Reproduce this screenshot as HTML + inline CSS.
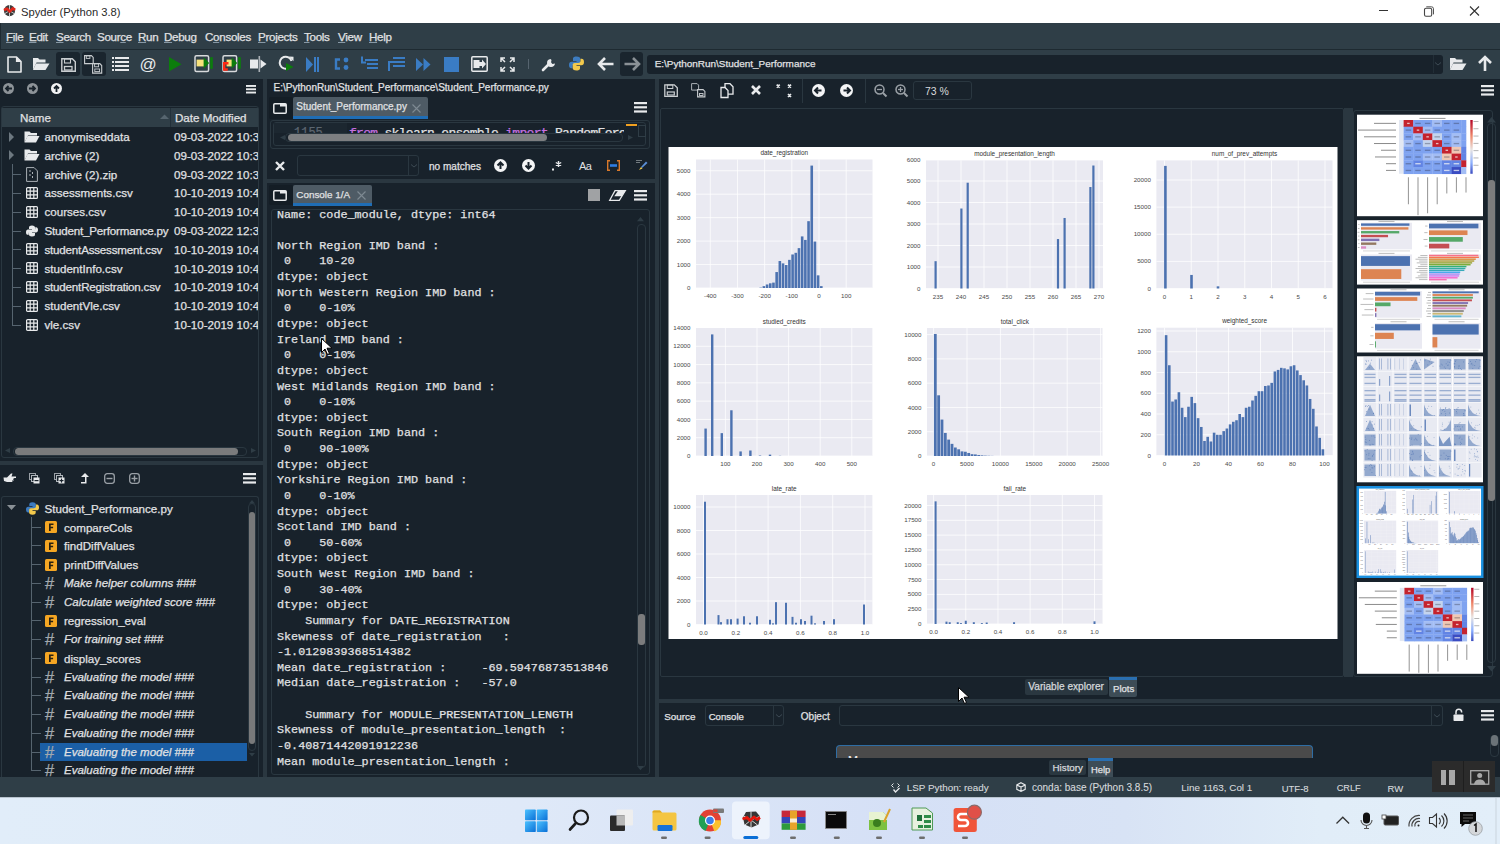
<!DOCTYPE html><html><head><meta charset="utf-8"><style>
html,body{margin:0;padding:0;width:1500px;height:844px;overflow:hidden;background:#18222b;}
body{position:relative;font-family:"Liberation Sans",sans-serif;}
div{box-sizing:border-box;}
.t{position:absolute;white-space:pre;line-height:1;color:#e0e1e3;font-size:12px;-webkit-text-stroke:0.25px currentColor;}
.m{font-family:"Liberation Mono",monospace;}
svg{position:absolute;overflow:visible;}
</style></head><body>
<div style="position:absolute;left:0px;top:0px;width:1500px;height:23px;background:#fff;"></div>
<div class="t" style="left:21px;top:6.52px;font-size:11.2px;color:#2a2a2a;-webkit-text-stroke:0;">Spyder (Python 3.8)</div>
<svg style="left:3px;top:4px" width="14" height="14" viewBox="0 0 14 14"><circle cx="6.5" cy="6.6" r="5.6" fill="#3c3c3c"/><path d="M6.5 1v11.5M2 4l9 5.5M11 4l-9 5.5" stroke="#d8d8d8" stroke-width="0.9"/><path d="M1 6.2l3-1.6l2.8 3l3-3.2l2.4 1.4" fill="none" stroke="#e0261b" stroke-width="2.6" stroke-linejoin="round"/></svg>
<svg style="left:1378px;top:6px" width="110" height="12"><line x1="1" y1="4.5" x2="10" y2="4.5" stroke="#333" stroke-width="1"/><rect x="46.5" y="2.3" width="7.2" height="8" rx="1.5" fill="none" stroke="#444" stroke-width="1.1"/><path d="M48.3 0.8h5.2a2 2 0 0 1 2 2v5.6" fill="none" stroke="#555" stroke-width="1"/><path d="M92 0.5l9 9M101 0.5l-9 9" stroke="#333" stroke-width="1.1"/></svg>
<div style="position:absolute;left:0px;top:23px;width:1500px;height:27px;background:#2f3e47;border-bottom:1px solid #1e2a31;border-left:1px solid #1e2a31;"></div>
<div class="t" style="left:6px;top:30.68px;font-size:11.6px;color:#e0e1e3;letter-spacing:-0.3px;"><u style="text-decoration-color:#8899a6">F</u>ile</div>
<div class="t" style="left:29px;top:30.68px;font-size:11.6px;color:#e0e1e3;letter-spacing:-0.3px;"><u style="text-decoration-color:#8899a6">E</u>dit</div>
<div class="t" style="left:56px;top:30.68px;font-size:11.6px;color:#e0e1e3;letter-spacing:-0.3px;"><u style="text-decoration-color:#8899a6">S</u>earch</div>
<div class="t" style="left:97px;top:30.68px;font-size:11.6px;color:#e0e1e3;letter-spacing:-0.3px;">Sour<u style="text-decoration-color:#8899a6">c</u>e</div>
<div class="t" style="left:138px;top:30.68px;font-size:11.6px;color:#e0e1e3;letter-spacing:-0.3px;"><u style="text-decoration-color:#8899a6">R</u>un</div>
<div class="t" style="left:164px;top:30.68px;font-size:11.6px;color:#e0e1e3;letter-spacing:-0.3px;"><u style="text-decoration-color:#8899a6">D</u>ebug</div>
<div class="t" style="left:205px;top:30.68px;font-size:11.6px;color:#e0e1e3;letter-spacing:-0.3px;">C<u style="text-decoration-color:#8899a6">o</u>nsoles</div>
<div class="t" style="left:258px;top:30.68px;font-size:11.6px;color:#e0e1e3;letter-spacing:-0.3px;"><u style="text-decoration-color:#8899a6">P</u>rojects</div>
<div class="t" style="left:304px;top:30.68px;font-size:11.6px;color:#e0e1e3;letter-spacing:-0.3px;"><u style="text-decoration-color:#8899a6">T</u>ools</div>
<div class="t" style="left:338px;top:30.68px;font-size:11.6px;color:#e0e1e3;letter-spacing:-0.3px;"><u style="text-decoration-color:#8899a6">V</u>iew</div>
<div class="t" style="left:369px;top:30.68px;font-size:11.6px;color:#e0e1e3;letter-spacing:-0.3px;"><u style="text-decoration-color:#8899a6">H</u>elp</div>
<div style="position:absolute;left:0px;top:50px;width:1500px;height:29px;background:#2f3e47;"></div>
<div style="position:absolute;left:56px;top:52px;width:24px;height:24px;background:#1a252e;border-radius:3px;"></div>
<div style="position:absolute;left:82px;top:52px;width:24px;height:24px;background:#1a252e;border-radius:3px;"></div>
<div style="position:absolute;left:620px;top:52px;width:23px;height:24px;background:#1a252e;border-radius:3px;"></div>
<svg style="left:7px;top:56px;" width="15" height="17" viewBox="0 0 15 17"><path d="M1 1h8.5l4.5 4.5v10.5h-13z" fill="none" stroke="#e8eaec" stroke-width="1.6" stroke-linejoin="round"/><path d="M9.5 1v4.5h4.5" fill="#e8eaec" stroke="#e8eaec" stroke-width="1.2"/></svg>
<svg style="left:32px;top:57px;" width="18" height="14" viewBox="0 0 18 14"><path d="M1 1h5l1.5 1.5h6v3h-9l-3.5 7.5z" fill="#e8eaec"/><path d="M4 6.5h13.5l-4 6.5h-12.5z" fill="#e8eaec"/></svg>
<svg style="left:61px;top:58px;" width="15" height="14" viewBox="0 0 15 14"><path d="M0.8 0.8h10.5l3 3v9.5h-13.5z" fill="none" stroke="#c9cdd0" stroke-width="1.4"/><rect x="3.5" y="1" width="6" height="4" fill="none" stroke="#c9cdd0" stroke-width="1.1"/><rect x="3.5" y="8.5" width="7.5" height="3.5" fill="none" stroke="#c9cdd0" stroke-width="1.3"/></svg>
<svg style="left:84px;top:55px;" width="20" height="19" viewBox="0 0 20 19"><path d="M0.6 0.6h6.8l1.8 1.8v6.2h-8.6z" fill="none" stroke="#c9cdd0" stroke-width="1.1"/><rect x="2.3" y="0.8" width="3.6" height="2.6" fill="none" stroke="#c9cdd0" stroke-width="0.9"/><path d="M8.6 8.6h7.2l1.9 1.9v7.6h-9.1z" fill="#1a252e" stroke="#c9cdd0" stroke-width="1.1"/><rect x="10.6" y="8.8" width="4" height="3" fill="none" stroke="#c9cdd0" stroke-width="0.9"/><rect x="10.8" y="14" width="4.8" height="2.6" fill="none" stroke="#c9cdd0" stroke-width="0.9"/></svg>
<svg style="left:112px;top:57px;" width="17" height="14" viewBox="0 0 17 14"><g fill="#e8eaec"><rect x="0" y="0" width="2" height="2"/><rect x="3" y="0" width="14" height="2"/><rect x="0" y="4" width="2" height="2"/><rect x="3" y="4" width="14" height="2"/><rect x="0" y="8" width="2" height="2"/><rect x="3" y="8" width="14" height="2"/><rect x="0" y="12" width="2" height="2"/><rect x="3" y="12" width="14" height="2"/></g></svg>
<div class="t" style="left:139.5px;top:55.61px;font-size:17px;color:#e8eaec;-webkit-text-stroke:0;">@</div>
<svg style="left:169px;top:57px;" width="13" height="15" viewBox="0 0 13 15"><path d="M0 0l12.5 7.2l-12.5 7.3z" fill="#0c7d0c"/></svg>
<svg style="left:194px;top:55px;" width="20" height="18" viewBox="0 0 20 18"><rect x="1" y="0.8" width="13.6" height="15.8" rx="1.5" fill="none" stroke="#d8dadc" stroke-width="1.5"/><rect x="2.6" y="4.6" width="7.6" height="6.8" fill="#f7e27c"/><path d="M9.6 2.2l5.6 5.8l-5.6 5.8z" fill="#0c7d0c"/><rect x="16.2" y="2.2" width="2.6" height="11.6" fill="#0c7d0c"/></svg>
<svg style="left:222px;top:55px;" width="20" height="18" viewBox="0 0 20 18"><rect x="1" y="0.8" width="13.6" height="15.8" rx="1.5" fill="none" stroke="#d8dadc" stroke-width="1.5"/><rect x="4.6" y="4.6" width="5.6" height="6.8" fill="#f7e27c"/><path d="M9.6 2.2l5.6 5.8l-5.6 5.8z" fill="#0c7d0c"/><rect x="16.2" y="2.2" width="2.6" height="11.6" fill="#0c7d0c"/><path d="M6.5 8.2h-4.3v6.3h3.6" fill="none" stroke="#ff2a14" stroke-width="2.4"/></svg>
<svg style="left:250px;top:56px;" width="17" height="16" viewBox="0 0 17 16"><rect x="0" y="3.5" width="8" height="9" fill="#e8eaec"/><rect x="8.5" y="0" width="1.6" height="16" fill="#aab0b6"/><path d="M10.5 3.5l6 4.5l-6 4.5z" fill="#e8eaec"/></svg>
<svg style="left:279px;top:55px;" width="16" height="17" viewBox="0 0 16 17"><path d="M12.5 6a6 6 0 1 0 -3 7" fill="none" stroke="#e8eaec" stroke-width="2"/><path d="M10 1.5l4.5 0.2v4.5z" fill="#e8eaec"/><path d="M7 8l7.5 4l-7.5 4z" fill="#0c7d0c"/></svg>
<svg style="left:306px;top:57px;" width="13" height="15" viewBox="0 0 13 15"><path d="M0 0l7 7.5l-7 7.5z" fill="#3a7cc4"/><rect x="8" y="0" width="2" height="15" fill="#3a7cc4"/><rect x="11" y="0" width="2" height="15" fill="#3a7cc4"/></svg>
<svg style="left:335px;top:57px;" width="14" height="14" viewBox="0 0 14 14"><path d="M5 2.5h-4v9h4" fill="none" stroke="#3a7cc4" stroke-width="2.4"/><circle cx="11" cy="3" r="2.4" fill="#3a7cc4"/><circle cx="11" cy="10.5" r="2.4" fill="#3a7cc4"/></svg>
<svg style="left:361px;top:56px;" width="17" height="16" viewBox="0 0 17 16"><path d="M1 0.5v6h4" fill="none" stroke="#3a7cc4" stroke-width="2"/><g fill="#3a7cc4"><rect x="4" y="3" width="13" height="2"/><rect x="6" y="7" width="11" height="2"/><rect x="6" y="11" width="11" height="2"/></g></svg>
<svg style="left:388px;top:57px;" width="17" height="16" viewBox="0 0 17 16"><g fill="#3a7cc4"><rect x="5" y="0" width="12" height="2"/><rect x="5" y="4" width="12" height="2"/><rect x="5" y="8" width="12" height="2"/></g><path d="M6 5h-5v9" fill="none" stroke="#3a7cc4" stroke-width="2"/></svg>
<svg style="left:416px;top:58px;" width="15" height="13" viewBox="0 0 15 13"><path d="M0 0l7 6.5l-7 6.5zM7.5 0l7 6.5l-7 6.5z" fill="#3a7cc4"/></svg>
<div style="position:absolute;left:444px;top:57px;width:15px;height:15px;background:#3a7cc4;"></div>
<svg style="left:471px;top:56px;" width="17" height="16" viewBox="0 0 17 16"><rect x="0.8" y="0.8" width="15.4" height="14.4" rx="1" fill="none" stroke="#e8eaec" stroke-width="1.5"/><rect x="2.5" y="4" width="6" height="8" fill="#e8eaec"/><path d="M8 6h3v-2.5l4 4.5l-4 4.5v-2.5h-3z" fill="#e8eaec"/></svg>
<svg style="left:500px;top:57px;" width="15" height="15" viewBox="0 0 15 15"><g stroke="#e8eaec" stroke-width="1.5" fill="none"><path d="M1 5v-4h4M1 1l4 4M14 5v-4h-4M14 1l-4 4M1 10v4h4M1 14l4-4M14 10v4h-4M14 14l-4-4"/></g></svg>
<div style="position:absolute;left:528px;top:59px;width:1px;height:10px;background:#56646f;"></div>
<svg style="left:541px;top:56px;" width="16" height="16" viewBox="0 0 16 16"><path d="M2 14l7-7" stroke="#e8eaec" stroke-width="2.6" stroke-linecap="round"/><path d="M9.5 3a4 4 0 1 0 4.5 4.5l-2.5 0.5l-1.5-1.5l0.5-2.5z" fill="#e8eaec"/></svg>
<svg style="left:569px;top:56px;" width="15" height="15" viewBox="0 0 15 15"><path d="M7.5 0.5c-3 0-3.5 1.2-3.5 2.5v2h3.5v.7h-5c-1.5 0-2.5 1-2.5 3.3s1 3.3 2.3 3.3h1.2v-2c0-1.3 1-2.3 2.3-2.3h3.5c1.2 0 2-.8 2-2v-3c0-1.3-1-2.5-3.8-2.5z" fill="#3d7cc0"/><path d="M7.5 14.5c3 0 3.5-1.2 3.5-2.5v-2h-3.5v-.7h5c1.5 0 2.5-1 2.5-3.3s-1-3.3-2.3-3.3h-1.2v2c0 1.3-1 2.3-2.3 2.3h-3.5c-1.2 0-2 .8-2 2v3c0 1.3 1 2.5 3.8 2.5z" fill="#f2c94c"/></svg>
<svg style="left:598px;top:57px;" width="16" height="14" viewBox="0 0 16 14"><path d="M7 1l-6 6l6 6M1.5 7h14" fill="none" stroke="#e8eaec" stroke-width="2.6" stroke-linejoin="miter"/></svg>
<svg style="left:624px;top:57px;" width="16" height="14" viewBox="0 0 16 14"><path d="M9 1l6 6l-6 6M14.5 7h-14" fill="none" stroke="#8a9196" stroke-width="2.6"/></svg>
<div style="position:absolute;left:647px;top:54.5px;width:796px;height:19px;background:#18222b;border-radius:3px;"></div>
<div class="t" style="left:654.7px;top:59.28px;font-size:9.95px;">E:\PythonRun\Student_Performance</div>
<div style="position:absolute;left:1432.5px;top:55px;width:1px;height:18px;background:#222e37;"></div>
<svg style="left:1434px;top:62px;" width="8" height="4" viewBox="0 0 8 4"><path d="M1 0.5l3 2.5l3-2.5" fill="none" stroke="#3d4a54" stroke-width="1"/></svg>
<svg style="left:1449px;top:57px;" width="17" height="14" viewBox="0 0 17 14"><path d="M1 1h5l1.5 1.5h6v3h-9l-3.5 7.5z" fill="#e8eaec"/><path d="M4 6.5h13.5l-4 6.5h-12.5z" fill="#e8eaec"/></svg>
<svg style="left:1478px;top:56px;" width="14" height="15" viewBox="0 0 14 15"><path d="M1 7l6-6l6 6M7 1.5v13.5" fill="none" stroke="#e8eaec" stroke-width="2.6"/></svg>
<div style="position:absolute;left:0px;top:79px;width:263px;height:382px;background:#18222b;"></div>
<div style="position:absolute;left:263px;top:79px;width:4px;height:698px;background:#2a3740;"></div>
<svg style="left:3px;top:83px;" width="11" height="11" viewBox="0 0 11 11"><circle cx="5.5" cy="5.5" r="5.5" fill="#8d9398"/><path d="M9 5.5h-6M5.5 3l-2.5 2.5l2.5 2.5" fill="none" stroke="#18222b" stroke-width="1.8"/></svg>
<svg style="left:27px;top:83px;" width="11" height="11" viewBox="0 0 11 11"><circle cx="5.5" cy="5.5" r="5.5" fill="#8d9398"/><path d="M2 5.5h6M5.5 3l2.5 2.5l-2.5 2.5" fill="none" stroke="#18222b" stroke-width="1.8"/></svg>
<svg style="left:51px;top:83px;" width="11" height="11" viewBox="0 0 11 11"><circle cx="5.5" cy="5.5" r="5.5" fill="#f2f3f4"/><path d="M5.5 9v-6M3 5.5l2.5-2.5l2.5 2.5" fill="none" stroke="#18222b" stroke-width="1.8"/></svg>
<svg style="left:246px;top:85px;" width="10" height="8.5" viewBox="0 0 10 8.5"><g fill="#e8eaec"><rect x="0" y="0" width="10" height="1.9"/><rect x="0" y="3.3" width="10" height="1.9"/><rect x="0" y="6.6" width="10" height="1.9"/></g></svg>
<div style="position:absolute;left:1px;top:106px;width:258px;height:352px;border:1px solid #2a3740;border-radius:3px;"></div>
<div style="position:absolute;left:2px;top:108px;width:256px;height:19px;background:#2f3e47;"></div>
<div style="position:absolute;left:170px;top:108px;width:1px;height:19px;background:#22303a;"></div>
<div class="t" style="left:20px;top:111.98px;font-size:11.6px;">Name</div>
<svg style="left:160px;top:114px;" width="9" height="6" viewBox="0 0 9 6"><path d="M0 5l4.5-4.5l4.5 4.5z" fill="#56656f"/></svg>
<div class="t" style="left:175px;top:111.98px;font-size:11.6px;">Date Modified</div>
<svg style="left:9px;top:131.5px;" width="6" height="10" viewBox="0 0 6 10"><path d="M0 0l5 5l-5 5z" fill="#6d7880"/></svg>
<svg style="left:24px;top:130.5px;" width="16" height="12" viewBox="0 0 16 12"><path d="M0.5 0.5h5l1.5 1.5h6v2.5h-9l-3.5 7z" fill="#e8eaec"/><path d="M3.5 5h12l-3.5 6.5h-11.5z" fill="#e8eaec"/></svg>
<div style="position:absolute;left:40px;top:128.00px;width:129px;height:18px;overflow:hidden;"><div class="t" style="left:4.5px;top:2.98px;font-size:11.6px;letter-spacing:0px;">anonymiseddata</div></div>
<div style="position:absolute;left:171px;top:128.00px;width:87px;height:18px;overflow:hidden;"><div class="t" style="left:3px;top:2.98px;font-size:11.6px;">09-03-2022 10:33</div></div>
<svg style="left:9px;top:150.3px;" width="6" height="10" viewBox="0 0 6 10"><path d="M0 0l5 5l-5 5z" fill="#6d7880"/></svg>
<svg style="left:24px;top:149.3px;" width="16" height="12" viewBox="0 0 16 12"><path d="M0.5 0.5h5l1.5 1.5h6v2.5h-9l-3.5 7z" fill="#e8eaec"/><path d="M3.5 5h12l-3.5 6.5h-11.5z" fill="#e8eaec"/></svg>
<div style="position:absolute;left:40px;top:146.80px;width:129px;height:18px;overflow:hidden;"><div class="t" style="left:4.5px;top:2.98px;font-size:11.6px;letter-spacing:0px;">archive (2)</div></div>
<div style="position:absolute;left:171px;top:146.80px;width:87px;height:18px;overflow:hidden;"><div class="t" style="left:3px;top:2.98px;font-size:11.6px;">09-03-2022 10:32</div></div>
<div style="position:absolute;left:12px;top:163.6px;width:1px;height:19px;background:#56646f;"></div>
<div style="position:absolute;left:12px;top:174.1px;width:9px;height:1px;background:#56646f;"></div>
<svg style="left:26px;top:167.1px;" width="12" height="15" viewBox="0 0 12 15"><path d="M0.6 0.6h7.5l3.3 3.3v10.5h-10.8z" fill="none" stroke="#aab0b6" stroke-width="1"/><path d="M4 3v2M4 7v2M6.5 5v2M6.5 9v2" stroke="#aab0b6" stroke-width="1"/></svg>
<div style="position:absolute;left:40px;top:165.60px;width:129px;height:18px;overflow:hidden;"><div class="t" style="left:4.5px;top:2.98px;font-size:11.6px;letter-spacing:0px;">archive (2).zip</div></div>
<div style="position:absolute;left:171px;top:165.60px;width:87px;height:18px;overflow:hidden;"><div class="t" style="left:3px;top:2.98px;font-size:11.6px;">09-03-2022 10:32</div></div>
<div style="position:absolute;left:12px;top:182.4px;width:1px;height:19px;background:#56646f;"></div>
<div style="position:absolute;left:12px;top:192.9px;width:9px;height:1px;background:#56646f;"></div>
<svg style="left:26px;top:186.9px;" width="12" height="12" viewBox="0 0 12 12"><rect x="0.6" y="0.6" width="10.8" height="10.8" rx="1" fill="none" stroke="#e8eaec" stroke-width="1.2"/><path d="M4.2 0.6v10.8M7.8 0.6v10.8M0.6 4.2h10.8M0.6 7.8h10.8" stroke="#e8eaec" stroke-width="1.2"/></svg>
<div style="position:absolute;left:40px;top:184.40px;width:129px;height:18px;overflow:hidden;"><div class="t" style="left:4.5px;top:2.98px;font-size:11.6px;letter-spacing:0px;">assessments.csv</div></div>
<div style="position:absolute;left:171px;top:184.40px;width:87px;height:18px;overflow:hidden;"><div class="t" style="left:3px;top:2.98px;font-size:11.6px;">10-10-2019 10:44</div></div>
<div style="position:absolute;left:12px;top:201.2px;width:1px;height:19px;background:#56646f;"></div>
<div style="position:absolute;left:12px;top:211.7px;width:9px;height:1px;background:#56646f;"></div>
<svg style="left:26px;top:205.7px;" width="12" height="12" viewBox="0 0 12 12"><rect x="0.6" y="0.6" width="10.8" height="10.8" rx="1" fill="none" stroke="#e8eaec" stroke-width="1.2"/><path d="M4.2 0.6v10.8M7.8 0.6v10.8M0.6 4.2h10.8M0.6 7.8h10.8" stroke="#e8eaec" stroke-width="1.2"/></svg>
<div style="position:absolute;left:40px;top:203.20px;width:129px;height:18px;overflow:hidden;"><div class="t" style="left:4.5px;top:2.98px;font-size:11.6px;letter-spacing:0px;">courses.csv</div></div>
<div style="position:absolute;left:171px;top:203.20px;width:87px;height:18px;overflow:hidden;"><div class="t" style="left:3px;top:2.98px;font-size:11.6px;">10-10-2019 10:44</div></div>
<div style="position:absolute;left:12px;top:220.0px;width:1px;height:19px;background:#56646f;"></div>
<div style="position:absolute;left:12px;top:230.5px;width:9px;height:1px;background:#56646f;"></div>
<svg style="left:26px;top:224.5px;" width="12" height="12" viewBox="0 0 12 12"><path d="M6 0.5c-2.5 0-3 1-3 2v1.5h3v.6h-4c-1.2 0-2 .8-2 2.6s.8 2.6 1.8 2.6h1v-1.6c0-1 .8-1.8 1.8-1.8h2.8c1 0 1.6-.6 1.6-1.6v-2.4c0-1-.8-2-3-2z" fill="#e8eaec"/><path d="M6 11.5c2.5 0 3-1 3-2v-1.5h-3v-.6h4c1.2 0 2-.8 2-2.6s-.8-2.6-1.8-2.6h-1v1.6c0 1-.8 1.8-1.8 1.8h-2.8c-1 0-1.6.6-1.6 1.6v2.4c0 1 .8 2 3 2z" fill="#e8eaec"/></svg>
<div style="position:absolute;left:40px;top:222.00px;width:129px;height:18px;overflow:hidden;"><div class="t" style="left:4.5px;top:2.98px;font-size:11.6px;letter-spacing:-0.2px;">Student_Performance.py</div></div>
<div style="position:absolute;left:171px;top:222.00px;width:87px;height:18px;overflow:hidden;"><div class="t" style="left:3px;top:2.98px;font-size:11.6px;">09-03-2022 12:30</div></div>
<div style="position:absolute;left:12px;top:238.8px;width:1px;height:19px;background:#56646f;"></div>
<div style="position:absolute;left:12px;top:249.3px;width:9px;height:1px;background:#56646f;"></div>
<svg style="left:26px;top:243.3px;" width="12" height="12" viewBox="0 0 12 12"><rect x="0.6" y="0.6" width="10.8" height="10.8" rx="1" fill="none" stroke="#e8eaec" stroke-width="1.2"/><path d="M4.2 0.6v10.8M7.8 0.6v10.8M0.6 4.2h10.8M0.6 7.8h10.8" stroke="#e8eaec" stroke-width="1.2"/></svg>
<div style="position:absolute;left:40px;top:240.80px;width:129px;height:18px;overflow:hidden;"><div class="t" style="left:4.5px;top:2.98px;font-size:11.6px;letter-spacing:-0.2px;">studentAssessment.csv</div></div>
<div style="position:absolute;left:171px;top:240.80px;width:87px;height:18px;overflow:hidden;"><div class="t" style="left:3px;top:2.98px;font-size:11.6px;">10-10-2019 10:44</div></div>
<div style="position:absolute;left:12px;top:257.6px;width:1px;height:19px;background:#56646f;"></div>
<div style="position:absolute;left:12px;top:268.1px;width:9px;height:1px;background:#56646f;"></div>
<svg style="left:26px;top:262.1px;" width="12" height="12" viewBox="0 0 12 12"><rect x="0.6" y="0.6" width="10.8" height="10.8" rx="1" fill="none" stroke="#e8eaec" stroke-width="1.2"/><path d="M4.2 0.6v10.8M7.8 0.6v10.8M0.6 4.2h10.8M0.6 7.8h10.8" stroke="#e8eaec" stroke-width="1.2"/></svg>
<div style="position:absolute;left:40px;top:259.60px;width:129px;height:18px;overflow:hidden;"><div class="t" style="left:4.5px;top:2.98px;font-size:11.6px;letter-spacing:0px;">studentInfo.csv</div></div>
<div style="position:absolute;left:171px;top:259.60px;width:87px;height:18px;overflow:hidden;"><div class="t" style="left:3px;top:2.98px;font-size:11.6px;">10-10-2019 10:44</div></div>
<div style="position:absolute;left:12px;top:276.4px;width:1px;height:19px;background:#56646f;"></div>
<div style="position:absolute;left:12px;top:286.9px;width:9px;height:1px;background:#56646f;"></div>
<svg style="left:26px;top:280.9px;" width="12" height="12" viewBox="0 0 12 12"><rect x="0.6" y="0.6" width="10.8" height="10.8" rx="1" fill="none" stroke="#e8eaec" stroke-width="1.2"/><path d="M4.2 0.6v10.8M7.8 0.6v10.8M0.6 4.2h10.8M0.6 7.8h10.8" stroke="#e8eaec" stroke-width="1.2"/></svg>
<div style="position:absolute;left:40px;top:278.40px;width:129px;height:18px;overflow:hidden;"><div class="t" style="left:4.5px;top:2.98px;font-size:11.6px;letter-spacing:-0.2px;">studentRegistration.csv</div></div>
<div style="position:absolute;left:171px;top:278.40px;width:87px;height:18px;overflow:hidden;"><div class="t" style="left:3px;top:2.98px;font-size:11.6px;">10-10-2019 10:44</div></div>
<div style="position:absolute;left:12px;top:295.20000000000005px;width:1px;height:19px;background:#56646f;"></div>
<div style="position:absolute;left:12px;top:305.70000000000005px;width:9px;height:1px;background:#56646f;"></div>
<svg style="left:26px;top:299.70000000000005px;" width="12" height="12" viewBox="0 0 12 12"><rect x="0.6" y="0.6" width="10.8" height="10.8" rx="1" fill="none" stroke="#e8eaec" stroke-width="1.2"/><path d="M4.2 0.6v10.8M7.8 0.6v10.8M0.6 4.2h10.8M0.6 7.8h10.8" stroke="#e8eaec" stroke-width="1.2"/></svg>
<div style="position:absolute;left:40px;top:297.20px;width:129px;height:18px;overflow:hidden;"><div class="t" style="left:4.5px;top:2.98px;font-size:11.6px;letter-spacing:0px;">studentVle.csv</div></div>
<div style="position:absolute;left:171px;top:297.20px;width:87px;height:18px;overflow:hidden;"><div class="t" style="left:3px;top:2.98px;font-size:11.6px;">10-10-2019 10:44</div></div>
<div style="position:absolute;left:12px;top:314.0px;width:1px;height:11px;background:#56646f;"></div>
<div style="position:absolute;left:12px;top:324.5px;width:9px;height:1px;background:#56646f;"></div>
<svg style="left:26px;top:318.5px;" width="12" height="12" viewBox="0 0 12 12"><rect x="0.6" y="0.6" width="10.8" height="10.8" rx="1" fill="none" stroke="#e8eaec" stroke-width="1.2"/><path d="M4.2 0.6v10.8M7.8 0.6v10.8M0.6 4.2h10.8M0.6 7.8h10.8" stroke="#e8eaec" stroke-width="1.2"/></svg>
<div style="position:absolute;left:40px;top:316.00px;width:129px;height:18px;overflow:hidden;"><div class="t" style="left:4.5px;top:2.98px;font-size:11.6px;letter-spacing:0px;">vle.csv</div></div>
<div style="position:absolute;left:171px;top:316.00px;width:87px;height:18px;overflow:hidden;"><div class="t" style="left:3px;top:2.98px;font-size:11.6px;">10-10-2019 10:45</div></div>
<div style="position:absolute;left:15px;top:448px;width:223px;height:7px;background:#7a7b7c;border-radius:3.5px;"></div>
<div style="position:absolute;left:13px;top:447px;width:234px;height:9px;border:1px solid #2a3740;border-radius:4px;"></div>
<svg style="left:5px;top:448px;" width="5" height="5" viewBox="0 0 5 5"><path d="M5 0L0 2.5L5 5z" fill="#2f3d46"/></svg>
<svg style="left:251px;top:448px;" width="5" height="5" viewBox="0 0 5 5"><path d="M0 0L5 2.5L0 5z" fill="#2f3d46"/></svg>
<div style="position:absolute;left:0px;top:461px;width:263px;height:4px;background:#2a3740;"></div>
<div style="position:absolute;left:0px;top:465px;width:263px;height:312px;background:#18222b;"></div>
<svg style="left:3px;top:473px;" width="13" height="11" viewBox="0 0 13 11"><path d="M0.5 4.5h3.5l4-4h1.5l-1 3h4.5v1.5h-3l1.5 1h-1.5l1 1.5h-2l0.5 1.5h-5.5l-3-1z" fill="#e8eaec"/></svg>
<svg style="left:29px;top:473px;" width="11" height="11" viewBox="0 0 11 11"><rect x="0.5" y="0.5" width="6" height="6" fill="none" stroke="#9aa0a6" stroke-width="1"/><rect x="2.5" y="2.5" width="6" height="6" fill="#18222b" stroke="#b0b6bb" stroke-width="1"/><rect x="4.5" y="4.5" width="6" height="6" fill="#e8eaec"/><rect x="5.5" y="7" width="4" height="1.2" fill="#18222b"/></svg>
<svg style="left:54px;top:473px;" width="11" height="11" viewBox="0 0 11 11"><rect x="0.5" y="0.5" width="6" height="6" fill="none" stroke="#9aa0a6" stroke-width="1"/><rect x="2.5" y="2.5" width="6" height="6" fill="#18222b" stroke="#b0b6bb" stroke-width="1"/><rect x="4.5" y="4.5" width="6" height="6" fill="#e8eaec"/><rect x="5.5" y="7" width="4" height="1.2" fill="#18222b"/><rect x="6.9" y="5.6" width="1.2" height="4" fill="#18222b"/></svg>
<svg style="left:81px;top:473px;" width="8" height="11" viewBox="0 0 8 11"><path d="M0 4l4-4l4 4h-2.5v6.5h-5.5v-1.5h4v-5z" fill="#e8eaec"/></svg>
<svg style="left:104px;top:473px;" width="11" height="11" viewBox="0 0 11 11"><rect x="0.7" y="0.7" width="9.6" height="9.6" rx="2.5" fill="none" stroke="#9aa0a6" stroke-width="1.3"/><rect x="2.5" y="4.8" width="6" height="1.4" fill="#9aa0a6"/></svg>
<svg style="left:129px;top:473px;" width="11" height="11" viewBox="0 0 11 11"><rect x="0.7" y="0.7" width="9.6" height="9.6" rx="2.5" fill="none" stroke="#9aa0a6" stroke-width="1.3"/><rect x="2.5" y="4.8" width="6" height="1.4" fill="#9aa0a6"/><rect x="4.8" y="2.5" width="1.4" height="6" fill="#9aa0a6"/></svg>
<svg style="left:243px;top:473px;" width="13" height="11" viewBox="0 0 13 11"><g fill="#e8eaec"><rect x="0" y="0" width="13" height="2.2"/><rect x="0" y="4.2" width="13" height="2.2"/><rect x="0" y="8.4" width="13" height="2.2"/></g></svg>
<div style="position:absolute;left:1px;top:496px;width:258px;height:281px;border:1px solid #2a3740;border-bottom:none;border-radius:3px 3px 0 0;"></div>
<svg style="left:7px;top:505px;" width="10" height="6" viewBox="0 0 10 6"><path d="M0 0h9l-4.5 5z" fill="#8a9196"/></svg>
<svg style="left:26px;top:502px;" width="13" height="13" viewBox="0 0 13 13"><path d="M6.5 0.3c-2.7 0-3.2 1.1-3.2 2.2v1.6h3.2v.6h-4.4c-1.3 0-2.1.9-2.1 2.9s.9 2.9 2 2.9h1.1v-1.7c0-1.1.9-2 2-2h3c1.1 0 1.8-.7 1.8-1.8v-2.5c0-1.1-.9-2.2-3.4-2.2z" fill="#3d7cc0"/><path d="M6.5 12.7c2.7 0 3.2-1.1 3.2-2.2v-1.6h-3.2v-.6h4.4c1.3 0 2.1-.9 2.1-2.9s-.9-2.9-2-2.9h-1.1v1.7c0 1.1-.9 2-2 2h-3c-1.1 0-1.8.7-1.8 1.8v2.5c0 1.1.9 2.2 3.4 2.2z" fill="#f2c94c"/></svg>
<div class="t" style="left:44.5px;top:502.58px;font-size:11.6px;">Student_Performance.py</div>
<div style="position:absolute;left:31px;top:517px;width:1px;height:253.5px;background:#56646f;"></div>
<div style="position:absolute;left:31px;top:526.7px;width:10px;height:1px;background:#56646f;"></div>
<svg style="left:45px;top:521.2px;" width="12" height="12" viewBox="0 0 12 12"><rect x="0" y="0" width="12" height="12" rx="1.5" fill="#f5a623"/><path d="M4 2.5h4.5v1.6h-2.8v1.6h2.4v1.5h-2.4v2.9h-1.7z" fill="#2a2110"/></svg>
<div class="t" style="left:64px;top:521.58px;font-size:11.6px;">compareCols</div>
<div style="position:absolute;left:31px;top:545.45px;width:10px;height:1px;background:#56646f;"></div>
<svg style="left:45px;top:539.95px;" width="12" height="12" viewBox="0 0 12 12"><rect x="0" y="0" width="12" height="12" rx="1.5" fill="#f5a623"/><path d="M4 2.5h4.5v1.6h-2.8v1.6h2.4v1.5h-2.4v2.9h-1.7z" fill="#2a2110"/></svg>
<div class="t" style="left:64px;top:540.33px;font-size:11.6px;">findDiffValues</div>
<div style="position:absolute;left:31px;top:564.2px;width:10px;height:1px;background:#56646f;"></div>
<svg style="left:45px;top:558.7px;" width="12" height="12" viewBox="0 0 12 12"><rect x="0" y="0" width="12" height="12" rx="1.5" fill="#f5a623"/><path d="M4 2.5h4.5v1.6h-2.8v1.6h2.4v1.5h-2.4v2.9h-1.7z" fill="#2a2110"/></svg>
<div class="t" style="left:64px;top:559.08px;font-size:11.6px;">printDiffValues</div>
<div style="position:absolute;left:31px;top:582.95px;width:10px;height:1px;background:#56646f;"></div>
<div class="t" style="left:45px;top:574.98px;font-size:16.5px;color:#a3a9ae;">#</div>
<div class="t" style="left:64px;top:577.92px;font-size:11.5px;font-style:italic;">Make helper columns ###</div>
<div style="position:absolute;left:31px;top:601.7px;width:10px;height:1px;background:#56646f;"></div>
<div class="t" style="left:45px;top:593.73px;font-size:16.5px;color:#a3a9ae;">#</div>
<div class="t" style="left:64px;top:596.67px;font-size:11.5px;font-style:italic;">Calculate weighted score ###</div>
<div style="position:absolute;left:31px;top:620.45px;width:10px;height:1px;background:#56646f;"></div>
<svg style="left:45px;top:614.95px;" width="12" height="12" viewBox="0 0 12 12"><rect x="0" y="0" width="12" height="12" rx="1.5" fill="#f5a623"/><path d="M4 2.5h4.5v1.6h-2.8v1.6h2.4v1.5h-2.4v2.9h-1.7z" fill="#2a2110"/></svg>
<div class="t" style="left:64px;top:615.33px;font-size:11.6px;">regression_eval</div>
<div style="position:absolute;left:31px;top:639.2px;width:10px;height:1px;background:#56646f;"></div>
<div class="t" style="left:45px;top:631.23px;font-size:16.5px;color:#a3a9ae;">#</div>
<div class="t" style="left:64px;top:634.17px;font-size:11.5px;font-style:italic;">For training set ###</div>
<div style="position:absolute;left:31px;top:657.95px;width:10px;height:1px;background:#56646f;"></div>
<svg style="left:45px;top:652.45px;" width="12" height="12" viewBox="0 0 12 12"><rect x="0" y="0" width="12" height="12" rx="1.5" fill="#f5a623"/><path d="M4 2.5h4.5v1.6h-2.8v1.6h2.4v1.5h-2.4v2.9h-1.7z" fill="#2a2110"/></svg>
<div class="t" style="left:64px;top:652.83px;font-size:11.6px;">display_scores</div>
<div style="position:absolute;left:31px;top:676.7px;width:10px;height:1px;background:#56646f;"></div>
<div class="t" style="left:45px;top:668.73px;font-size:16.5px;color:#a3a9ae;">#</div>
<div class="t" style="left:64px;top:671.67px;font-size:11.5px;font-style:italic;">Evaluating the model ###</div>
<div style="position:absolute;left:31px;top:695.45px;width:10px;height:1px;background:#56646f;"></div>
<div class="t" style="left:45px;top:687.48px;font-size:16.5px;color:#a3a9ae;">#</div>
<div class="t" style="left:64px;top:690.42px;font-size:11.5px;font-style:italic;">Evaluating the model ###</div>
<div style="position:absolute;left:31px;top:714.2px;width:10px;height:1px;background:#56646f;"></div>
<div class="t" style="left:45px;top:706.23px;font-size:16.5px;color:#a3a9ae;">#</div>
<div class="t" style="left:64px;top:709.17px;font-size:11.5px;font-style:italic;">Evaluating the model ###</div>
<div style="position:absolute;left:31px;top:732.95px;width:10px;height:1px;background:#56646f;"></div>
<div class="t" style="left:45px;top:724.98px;font-size:16.5px;color:#a3a9ae;">#</div>
<div class="t" style="left:64px;top:727.92px;font-size:11.5px;font-style:italic;">Evaluating the model ###</div>
<div style="position:absolute;left:40px;top:742.7px;width:207px;height:18px;background:#1b5fa6;"></div>
<div style="position:absolute;left:31px;top:751.7px;width:10px;height:1px;background:#56646f;"></div>
<div class="t" style="left:45px;top:743.73px;font-size:16.5px;color:#a3a9ae;">#</div>
<div class="t" style="left:64px;top:746.67px;font-size:11.5px;font-style:italic;">Evaluating the model ###</div>
<div style="position:absolute;left:31px;top:770.45px;width:10px;height:1px;background:#56646f;"></div>
<div class="t" style="left:45px;top:762.48px;font-size:16.5px;color:#a3a9ae;">#</div>
<div class="t" style="left:64px;top:765.42px;font-size:11.5px;font-style:italic;">Evaluating the model ###</div>
<div style="position:absolute;left:248px;top:503px;width:8px;height:248px;border:1px solid #2a3740;border-radius:4px;"></div>
<div style="position:absolute;left:249px;top:512px;width:6px;height:232px;background:#78797a;border-radius:3px;"></div>
<svg style="left:249px;top:500px;" width="6" height="3.5999999999999996" viewBox="0 0 6 3.5999999999999996"><path d="M0 3.5999999999999996L3.0 0L6 3.5999999999999996z" fill="#2f3d46"/></svg>
<svg style="left:249px;top:753px;" width="6" height="3.5999999999999996" viewBox="0 0 6 3.5999999999999996"><path d="M0 0L3.0 3.5999999999999996L6 0z" fill="#2f3d46"/></svg>
<div style="position:absolute;left:267px;top:79px;width:388px;height:698px;background:#18222b;"></div>
<div class="t" style="left:273.6px;top:83.13px;font-size:10px;">E:\PythonRun\Student_Performance\Student_Performance.py</div>
<div style="position:absolute;left:269px;top:97px;width:24px;height:22px;background:#141d25;border-radius:2px;"></div>
<svg style="left:273px;top:102.5px;" width="14" height="11" viewBox="0 0 14 11"><rect x="0.8" y="0.8" width="12.4" height="9.4" rx="1" fill="none" stroke="#e8eaec" stroke-width="1.5"/><rect x="7" y="1" width="6" height="2.5" fill="#e8eaec"/></svg>
<div style="position:absolute;left:293px;top:97px;width:135px;height:19px;background:#4e5b65;border-radius:2px 2px 0 0;"></div>
<div style="position:absolute;left:293px;top:116px;width:135px;height:2.5px;background:#1f6db5;"></div>
<div class="t" style="left:296.3px;top:101.53px;font-size:10px;">Student_Performance.py</div>
<svg style="left:412px;top:104px;" width="9" height="9" viewBox="0 0 9 9"><path d="M0.5 0.5l8 8M8.5 0.5l-8 8" stroke="#7e8a93" stroke-width="1.1"/></svg>
<svg style="left:634px;top:102px;" width="13" height="11" viewBox="0 0 13 11"><g fill="#e8eaec"><rect x="0" y="0" width="13" height="2.2"/><rect x="0" y="4.2" width="13" height="2.2"/><rect x="0" y="8.4" width="13" height="2.2"/></g></svg>
<div style="position:absolute;left:270px;top:120px;width:380px;height:29px;border:1px solid #2a3740;border-radius:3px;"></div>
<div style="position:absolute;left:273px;top:122px;width:373px;height:24px;border:1px solid #2a3740;border-radius:3px;background:#18222b;"></div>
<div style="position:absolute;left:274px;top:123px;width:73px;height:10px;background:#1c2730;"></div>
<div style="position:absolute;left:274px;top:123px;width:350px;height:9.5px;overflow:hidden;"><div class="t m" style="left:20px;top:3.5px;font-size:12px;color:#5c6670;">1155</div><div class="t m" style="left:75px;top:4px;font-size:13px;letter-spacing:-0.7px;"><span style="color:#c670e0">from</span> sklearn.ensemble <span style="color:#c670e0">import</span> RandomFore</div></div>
<div style="position:absolute;left:626px;top:124px;width:11px;height:1.5px;background:#f0a020;"></div>
<div style="position:absolute;left:638px;top:125px;width:8px;height:12px;border:1px solid #2f3d46;"></div>
<div style="position:absolute;left:285px;top:133px;width:338px;height:9px;border:1px solid #2a3740;border-radius:4px;"></div>
<div style="position:absolute;left:288px;top:134px;width:259px;height:7px;background:#7d7f81;border-radius:3.5px;"></div>
<svg style="left:280px;top:135px;" width="5" height="5" viewBox="0 0 5 5"><path d="M5 0L0 2.5L5 5z" fill="#2f3d46"/></svg>
<svg style="left:628px;top:135px;" width="5" height="5" viewBox="0 0 5 5"><path d="M0 0L5 2.5L0 5z" fill="#2f3d46"/></svg>
<svg style="left:275px;top:161px;" width="10" height="10" viewBox="0 0 10 10"><path d="M1 1l8 8M9 1l-8 8" stroke="#e8eaec" stroke-width="2.4"/></svg>
<div style="position:absolute;left:297px;top:155px;width:122px;height:21px;border:1px solid #2a3740;border-radius:3px;"></div>
<div style="position:absolute;left:408px;top:156px;width:1px;height:19px;background:#2a3740;"></div>
<svg style="left:410px;top:164px;" width="8" height="4" viewBox="0 0 8 4"><path d="M1 0.5l3 2.5l3-2.5" fill="none" stroke="#3d4a54" stroke-width="1"/></svg>
<div class="t" style="left:429px;top:162.09px;font-size:10.05px;">no matches</div>
<svg style="left:494px;top:159px;" width="13" height="13" viewBox="0 0 13 13"><circle cx="6.5" cy="6.5" r="6.5" fill="#f4f5f6"/><path d="M6.5 10v-6.5M3.5 6.5l3-3l3 3" fill="none" stroke="#18222b" stroke-width="2"/></svg>
<svg style="left:522px;top:159px;" width="13" height="13" viewBox="0 0 13 13"><circle cx="6.5" cy="6.5" r="6.5" fill="#f4f5f6"/><path d="M6.5 3v6.5M3.5 6.5l3 3l3-3" fill="none" stroke="#18222b" stroke-width="2"/></svg>
<svg style="left:552px;top:161px;" width="11" height="10" viewBox="0 0 11 10"><rect x="0" y="7.5" width="2" height="2" fill="#e8eaec"/><path d="M6.5 0v6M3.8 1.5l5.4 3M3.8 4.5l5.4-3" stroke="#e8eaec" stroke-width="1.4"/></svg>
<div class="t" style="left:579px;top:160.69px;font-size:11px;color:#e0e1e3;letter-spacing:-0.6px;-webkit-text-stroke:0;">Aa</div>
<svg style="left:607px;top:160px;" width="13" height="11" viewBox="0 0 13 11"><path d="M3 0.7h-2.3v9.6h2.3M10 0.7h2.3v9.6h-2.3" fill="none" stroke="#d9782a" stroke-width="1.4"/><rect x="3" y="4.2" width="7" height="2.6" fill="#2f7de1"/></svg>
<svg style="left:636px;top:159px;" width="12" height="12" viewBox="0 0 12 12"><path d="M0 1.5h6M0 3.5h4" stroke="#8a9196" stroke-width="0.8"/><path d="M5 8l5-5.5l1.5 1.5l-5.5 5z" fill="#5b8fd6"/><path d="M3 11l2-3l1.5 1.5z" fill="#f2c94c"/></svg>
<div style="position:absolute;left:267px;top:179px;width:388px;height:4px;background:#2a3740;"></div>
<div style="position:absolute;left:269px;top:185px;width:24px;height:20px;background:#141d25;border-radius:2px;"></div>
<svg style="left:273px;top:190px;" width="14" height="11" viewBox="0 0 14 11"><rect x="0.8" y="0.8" width="12.4" height="9.4" rx="1" fill="none" stroke="#e8eaec" stroke-width="1.5"/><rect x="7" y="1" width="6" height="2.5" fill="#e8eaec"/></svg>
<div style="position:absolute;left:293px;top:185px;width:79px;height:18px;background:#4e5b65;border-radius:2px 2px 0 0;"></div>
<div style="position:absolute;left:293px;top:203px;width:79px;height:2.5px;background:#1f6db5;"></div>
<div class="t" style="left:296.3px;top:189.62px;font-size:9.9px;">Console 1/A</div>
<svg style="left:357px;top:191px;" width="9" height="9" viewBox="0 0 9 9"><path d="M0.5 0.5l8 8M8.5 0.5l-8 8" stroke="#7e8a93" stroke-width="1.1"/></svg>
<div style="position:absolute;left:588px;top:189px;width:12px;height:12px;background:#a0a2a4;"></div>
<svg style="left:609px;top:190px;" width="17" height="11" viewBox="0 0 17 11"><path d="M6 0.7h10.3l-6 9.6h-9.6z" fill="none" stroke="#e8eaec" stroke-width="1.3"/><path d="M9 0.7h7.3l-3.5 5.5h-7.5z" fill="#e8eaec"/></svg>
<svg style="left:634px;top:190px;" width="13" height="11" viewBox="0 0 13 11"><g fill="#e8eaec"><rect x="0" y="0" width="13" height="2.2"/><rect x="0" y="4.2" width="13" height="2.2"/><rect x="0" y="8.4" width="13" height="2.2"/></g></svg>
<div style="position:absolute;left:271px;top:209px;width:379px;height:566px;border:1px solid #2a3740;border-radius:3px;"></div>
<div style="position:absolute;left:272px;top:208px;width:362px;height:565px;overflow:hidden;">
<div class="t m" style="left:5px;top:1.59px;font-size:11.75px;color:#e0e1e3;">Name: code_module, dtype: int64</div>
<div class="t m" style="left:5px;top:17.22px;font-size:11.75px;color:#e0e1e3;"></div>
<div class="t m" style="left:5px;top:32.85px;font-size:11.75px;color:#e0e1e3;">North Region IMD band :</div>
<div class="t m" style="left:5px;top:48.48px;font-size:11.75px;color:#e0e1e3;"> 0    10-20</div>
<div class="t m" style="left:5px;top:64.11px;font-size:11.75px;color:#e0e1e3;">dtype: object</div>
<div class="t m" style="left:5px;top:79.74px;font-size:11.75px;color:#e0e1e3;">North Western Region IMD band :</div>
<div class="t m" style="left:5px;top:95.37px;font-size:11.75px;color:#e0e1e3;"> 0    0-10%</div>
<div class="t m" style="left:5px;top:111.00px;font-size:11.75px;color:#e0e1e3;">dtype: object</div>
<div class="t m" style="left:5px;top:126.63px;font-size:11.75px;color:#e0e1e3;">Ireland IMD band :</div>
<div class="t m" style="left:5px;top:142.26px;font-size:11.75px;color:#e0e1e3;"> 0    0-10%</div>
<div class="t m" style="left:5px;top:157.89px;font-size:11.75px;color:#e0e1e3;">dtype: object</div>
<div class="t m" style="left:5px;top:173.52px;font-size:11.75px;color:#e0e1e3;">West Midlands Region IMD band :</div>
<div class="t m" style="left:5px;top:189.15px;font-size:11.75px;color:#e0e1e3;"> 0    0-10%</div>
<div class="t m" style="left:5px;top:204.78px;font-size:11.75px;color:#e0e1e3;">dtype: object</div>
<div class="t m" style="left:5px;top:220.41px;font-size:11.75px;color:#e0e1e3;">South Region IMD band :</div>
<div class="t m" style="left:5px;top:236.04px;font-size:11.75px;color:#e0e1e3;"> 0    90-100%</div>
<div class="t m" style="left:5px;top:251.67px;font-size:11.75px;color:#e0e1e3;">dtype: object</div>
<div class="t m" style="left:5px;top:267.30px;font-size:11.75px;color:#e0e1e3;">Yorkshire Region IMD band :</div>
<div class="t m" style="left:5px;top:282.93px;font-size:11.75px;color:#e0e1e3;"> 0    0-10%</div>
<div class="t m" style="left:5px;top:298.56px;font-size:11.75px;color:#e0e1e3;">dtype: object</div>
<div class="t m" style="left:5px;top:314.19px;font-size:11.75px;color:#e0e1e3;">Scotland IMD band :</div>
<div class="t m" style="left:5px;top:329.82px;font-size:11.75px;color:#e0e1e3;"> 0    50-60%</div>
<div class="t m" style="left:5px;top:345.45px;font-size:11.75px;color:#e0e1e3;">dtype: object</div>
<div class="t m" style="left:5px;top:361.08px;font-size:11.75px;color:#e0e1e3;">South West Region IMD band :</div>
<div class="t m" style="left:5px;top:376.71px;font-size:11.75px;color:#e0e1e3;"> 0    30-40%</div>
<div class="t m" style="left:5px;top:392.34px;font-size:11.75px;color:#e0e1e3;">dtype: object</div>
<div class="t m" style="left:5px;top:407.97px;font-size:11.75px;color:#e0e1e3;">    Summary for DATE_REGISTRATION</div>
<div class="t m" style="left:5px;top:423.60px;font-size:11.75px;color:#e0e1e3;">Skewness of date_registration   :</div>
<div class="t m" style="left:5px;top:439.23px;font-size:11.75px;color:#e0e1e3;">-1.0129839368514382</div>
<div class="t m" style="left:5px;top:454.86px;font-size:11.75px;color:#e0e1e3;">Mean date_registration :     -69.59476873513846</div>
<div class="t m" style="left:5px;top:470.49px;font-size:11.75px;color:#e0e1e3;">Median date_registration :   -57.0</div>
<div class="t m" style="left:5px;top:486.12px;font-size:11.75px;color:#e0e1e3;"></div>
<div class="t m" style="left:5px;top:501.75px;font-size:11.75px;color:#e0e1e3;">    Summary for MODULE_PRESENTATION_LENGTH</div>
<div class="t m" style="left:5px;top:517.38px;font-size:11.75px;color:#e0e1e3;">Skewness of module_presentation_length  :</div>
<div class="t m" style="left:5px;top:533.01px;font-size:11.75px;color:#e0e1e3;">-0.40871442091912236</div>
<div class="t m" style="left:5px;top:548.64px;font-size:11.75px;color:#e0e1e3;">Mean module_presentation_length :</div>
</div>
<div style="position:absolute;left:637px;top:224px;width:9px;height:544px;border:1px solid #2a3740;border-radius:4px;"></div>
<div style="position:absolute;left:638px;top:614px;width:7px;height:31px;background:#7b7c7d;border-radius:3px;"></div>
<svg style="left:637px;top:217px;" width="7" height="4.2" viewBox="0 0 7 4.2"><path d="M0 4.2L3.5 0L7 4.2z" fill="#2f3d46"/></svg>
<svg style="left:637px;top:766px;" width="7" height="4.2" viewBox="0 0 7 4.2"><path d="M0 0L3.5 4.2L7 0z" fill="#2f3d46"/></svg>
<svg style="left:321px;top:338px;" width="12" height="18" viewBox="0 0 12 18"><path d="M0.5 0.5v14l3.5-3.5l2.5 5.5l2-1l-2.5-5.3h5z" fill="#fff" stroke="#000" stroke-width="1"/></svg>
<div style="position:absolute;left:659px;top:79px;width:841px;height:620px;background:#18222b;"></div>
<div style="position:absolute;left:655px;top:79px;width:4px;height:698px;background:#2a3740;"></div>
<svg style="left:664px;top:83.5px;" width="14" height="13" viewBox="0 0 14 13"><path d="M0.8 0.8h9.5l3 3v8.5h-12.5z" fill="none" stroke="#c9cdd0" stroke-width="1.3"/><rect x="3.3" y="1" width="5.5" height="3.5" fill="none" stroke="#c9cdd0" stroke-width="1"/><rect x="3.3" y="8" width="7" height="3" fill="none" stroke="#c9cdd0" stroke-width="1.2"/></svg>
<svg style="left:691px;top:83px;" width="15" height="15" viewBox="0 0 15 15"><path d="M0.6 0.6h5.5l1.5 1.5v5h-7z" fill="none" stroke="#aab0b6" stroke-width="1"/><path d="M6.6 6.6h5.5l1.8 1.8v5.5h-7.3z" fill="#18222b" stroke="#c9cdd0" stroke-width="1.1"/><rect x="8.5" y="10.5" width="3.5" height="2" fill="none" stroke="#c9cdd0" stroke-width="0.9"/></svg>
<svg style="left:720px;top:82.5px;" width="16" height="15" viewBox="0 0 16 15"><path d="M5 0.7h5l3 3v7.5h-8z" fill="none" stroke="#e8eaec" stroke-width="1.3"/><path d="M1 4.5h4l3 3v7h-7z" fill="#18222b" stroke="#e8eaec" stroke-width="1.3"/></svg>
<svg style="left:751px;top:85px;" width="10" height="10" viewBox="0 0 10 10"><path d="M1 1l8 8M9 1l-8 8" stroke="#e8eaec" stroke-width="2.6"/></svg>
<svg style="left:775.5px;top:84px;" width="16" height="14" viewBox="0 0 16 14"><path d="M0.7 0.7l3 3M3.7 0.7l-3 3M12 0.7l3 3M15 0.7l-3 3M12 10l3 3M15 10l-3 3" stroke="#e8eaec" stroke-width="1.7"/></svg>
<div style="position:absolute;left:801.5px;top:79px;width:1.2px;height:24px;background:#2a3740;"></div>
<svg style="left:812px;top:83.5px;" width="13" height="13" viewBox="0 0 13 13"><circle cx="6.5" cy="6.5" r="6.5" fill="#f4f5f6"/><path d="M9.5 6.5h-6M6 3.5l-3 3l3 3" fill="none" stroke="#18222b" stroke-width="2"/></svg>
<svg style="left:840px;top:83.5px;" width="13" height="13" viewBox="0 0 13 13"><circle cx="6.5" cy="6.5" r="6.5" fill="#f4f5f6"/><path d="M3.5 6.5h6M7 3.5l3 3l-3 3" fill="none" stroke="#18222b" stroke-width="2"/></svg>
<div style="position:absolute;left:864.5px;top:79px;width:1.2px;height:24px;background:#2a3740;"></div>
<svg style="left:874px;top:84px;" width="13" height="13" viewBox="0 0 13 13"><circle cx="5.5" cy="5.5" r="4.5" fill="none" stroke="#9aa0a6" stroke-width="1.5"/><path d="M9 9l3.5 3.5" stroke="#9aa0a6" stroke-width="2"/><path d="M3 5.5h5" stroke="#9aa0a6" stroke-width="1.3"/></svg>
<svg style="left:895px;top:84px;" width="13" height="13" viewBox="0 0 13 13"><circle cx="5.5" cy="5.5" r="4.5" fill="none" stroke="#9aa0a6" stroke-width="1.5"/><path d="M9 9l3.5 3.5" stroke="#9aa0a6" stroke-width="2"/><path d="M3 5.5h5" stroke="#9aa0a6" stroke-width="1.3"/><path d="M5.5 3v5" stroke="#9aa0a6" stroke-width="1.3"/></svg>
<div style="position:absolute;left:913px;top:81px;width:59px;height:19px;border:1px solid #2a3740;border-radius:3px;"></div>
<div class="t" style="left:925px;top:85.61px;font-size:10.5px;-webkit-text-stroke:0;color:#d8dadc;">73 %</div>
<svg style="left:1481px;top:85px;" width="13" height="11" viewBox="0 0 13 11"><g fill="#e8eaec"><rect x="0" y="0" width="13" height="2.2"/><rect x="0" y="4.2" width="13" height="2.2"/><rect x="0" y="8.4" width="13" height="2.2"/></g></svg>
<div style="position:absolute;left:660px;top:108px;width:684px;height:569px;border:1px solid #2a3740;border-radius:2px;"></div>
<div style="position:absolute;left:1344px;top:108px;width:9px;height:569px;background:#2a3740;"></div>
<svg style="left:0;top:0" width="1500" height="844" viewBox="0 0 1500 844" font-family="Liberation Sans"><rect x="668.5" y="147" width="669" height="492" fill="#fff"/><rect x="696" y="159.5" width="176.5" height="128.5" fill="#eaeaf2"/><line x1="696" x2="872.5" y1="288.00" y2="288.00" stroke="#fff" stroke-width="0.75"/><text x="690.5" y="290.10" text-anchor="end" font-size="6.2" fill="#4a4a4a">0</text><line x1="696" x2="872.5" y1="264.55" y2="264.55" stroke="#fff" stroke-width="0.75"/><text x="690.5" y="266.65" text-anchor="end" font-size="6.2" fill="#4a4a4a">1000</text><line x1="696" x2="872.5" y1="241.10" y2="241.10" stroke="#fff" stroke-width="0.75"/><text x="690.5" y="243.20" text-anchor="end" font-size="6.2" fill="#4a4a4a">2000</text><line x1="696" x2="872.5" y1="217.65" y2="217.65" stroke="#fff" stroke-width="0.75"/><text x="690.5" y="219.75" text-anchor="end" font-size="6.2" fill="#4a4a4a">3000</text><line x1="696" x2="872.5" y1="194.20" y2="194.20" stroke="#fff" stroke-width="0.75"/><text x="690.5" y="196.30" text-anchor="end" font-size="6.2" fill="#4a4a4a">4000</text><line x1="696" x2="872.5" y1="170.75" y2="170.75" stroke="#fff" stroke-width="0.75"/><text x="690.5" y="172.85" text-anchor="end" font-size="6.2" fill="#4a4a4a">5000</text><line x1="710.28" x2="710.28" y1="159.5" y2="288" stroke="#fff" stroke-width="0.75"/><text x="710.28" y="298.3" text-anchor="middle" font-size="6.2" fill="#4a4a4a">-400</text><line x1="737.46" x2="737.46" y1="159.5" y2="288" stroke="#fff" stroke-width="0.75"/><text x="737.46" y="298.3" text-anchor="middle" font-size="6.2" fill="#4a4a4a">-300</text><line x1="764.64" x2="764.64" y1="159.5" y2="288" stroke="#fff" stroke-width="0.75"/><text x="764.64" y="298.3" text-anchor="middle" font-size="6.2" fill="#4a4a4a">-200</text><line x1="791.82" x2="791.82" y1="159.5" y2="288" stroke="#fff" stroke-width="0.75"/><text x="791.82" y="298.3" text-anchor="middle" font-size="6.2" fill="#4a4a4a">-100</text><line x1="819.00" x2="819.00" y1="159.5" y2="288" stroke="#fff" stroke-width="0.75"/><text x="819.00" y="298.3" text-anchor="middle" font-size="6.2" fill="#4a4a4a">0</text><line x1="846.18" x2="846.18" y1="159.5" y2="288" stroke="#fff" stroke-width="0.75"/><text x="846.18" y="298.3" text-anchor="middle" font-size="6.2" fill="#4a4a4a">100</text><rect x="759.40" y="287.65" width="2.6" height="0.35" fill="#4c72b0"/><rect x="762.59" y="286.12" width="2.6" height="1.88" fill="#4c72b0"/><rect x="765.78" y="284.48" width="2.6" height="3.52" fill="#4c72b0"/><rect x="768.97" y="283.31" width="2.6" height="4.69" fill="#4c72b0"/><rect x="772.16" y="282.61" width="2.6" height="5.39" fill="#4c72b0"/><rect x="775.35" y="272.05" width="2.6" height="15.95" fill="#4c72b0"/><rect x="778.54" y="261.03" width="2.6" height="26.97" fill="#4c72b0"/><rect x="781.73" y="263.38" width="2.6" height="24.62" fill="#4c72b0"/><rect x="784.92" y="265.02" width="2.6" height="22.98" fill="#4c72b0"/><rect x="788.11" y="259.86" width="2.6" height="28.14" fill="#4c72b0"/><rect x="791.30" y="254.47" width="2.6" height="33.53" fill="#4c72b0"/><rect x="794.49" y="252.82" width="2.6" height="35.18" fill="#4c72b0"/><rect x="797.68" y="248.13" width="2.6" height="39.87" fill="#4c72b0"/><rect x="800.87" y="236.41" width="2.6" height="51.59" fill="#4c72b0"/><rect x="804.06" y="239.93" width="2.6" height="48.07" fill="#4c72b0"/><rect x="807.25" y="221.17" width="2.6" height="66.83" fill="#4c72b0"/><rect x="810.44" y="165.59" width="2.6" height="122.41" fill="#4c72b0"/><rect x="813.63" y="241.57" width="2.6" height="46.43" fill="#4c72b0"/><rect x="816.82" y="275.34" width="2.6" height="12.66" fill="#4c72b0"/><rect x="820.01" y="286.12" width="2.6" height="1.88" fill="#4c72b0"/><text x="784.2" y="155.2" text-anchor="middle" font-size="6.4" fill="#333">date_registration</text><rect x="926" y="160.4" width="177" height="128.1" fill="#eaeaf2"/><line x1="926" x2="1103" y1="288.50" y2="288.50" stroke="#fff" stroke-width="0.75"/><text x="920.5" y="290.60" text-anchor="end" font-size="6.2" fill="#4a4a4a">0</text><line x1="926" x2="1103" y1="267.00" y2="267.00" stroke="#fff" stroke-width="0.75"/><text x="920.5" y="269.10" text-anchor="end" font-size="6.2" fill="#4a4a4a">1000</text><line x1="926" x2="1103" y1="245.50" y2="245.50" stroke="#fff" stroke-width="0.75"/><text x="920.5" y="247.60" text-anchor="end" font-size="6.2" fill="#4a4a4a">2000</text><line x1="926" x2="1103" y1="224.00" y2="224.00" stroke="#fff" stroke-width="0.75"/><text x="920.5" y="226.10" text-anchor="end" font-size="6.2" fill="#4a4a4a">3000</text><line x1="926" x2="1103" y1="202.50" y2="202.50" stroke="#fff" stroke-width="0.75"/><text x="920.5" y="204.60" text-anchor="end" font-size="6.2" fill="#4a4a4a">4000</text><line x1="926" x2="1103" y1="181.00" y2="181.00" stroke="#fff" stroke-width="0.75"/><text x="920.5" y="183.10" text-anchor="end" font-size="6.2" fill="#4a4a4a">5000</text><text x="920.5" y="161.60" text-anchor="end" font-size="6.2" fill="#4a4a4a">6000</text><line x1="938.00" x2="938.00" y1="160.4" y2="288.5" stroke="#fff" stroke-width="0.75"/><text x="938.00" y="298.8" text-anchor="middle" font-size="6.2" fill="#4a4a4a">235</text><line x1="961.00" x2="961.00" y1="160.4" y2="288.5" stroke="#fff" stroke-width="0.75"/><text x="961.00" y="298.8" text-anchor="middle" font-size="6.2" fill="#4a4a4a">240</text><line x1="984.00" x2="984.00" y1="160.4" y2="288.5" stroke="#fff" stroke-width="0.75"/><text x="984.00" y="298.8" text-anchor="middle" font-size="6.2" fill="#4a4a4a">245</text><line x1="1007.00" x2="1007.00" y1="160.4" y2="288.5" stroke="#fff" stroke-width="0.75"/><text x="1007.00" y="298.8" text-anchor="middle" font-size="6.2" fill="#4a4a4a">250</text><line x1="1030.00" x2="1030.00" y1="160.4" y2="288.5" stroke="#fff" stroke-width="0.75"/><text x="1030.00" y="298.8" text-anchor="middle" font-size="6.2" fill="#4a4a4a">255</text><line x1="1053.00" x2="1053.00" y1="160.4" y2="288.5" stroke="#fff" stroke-width="0.75"/><text x="1053.00" y="298.8" text-anchor="middle" font-size="6.2" fill="#4a4a4a">260</text><line x1="1076.00" x2="1076.00" y1="160.4" y2="288.5" stroke="#fff" stroke-width="0.75"/><text x="1076.00" y="298.8" text-anchor="middle" font-size="6.2" fill="#4a4a4a">265</text><line x1="1099.00" x2="1099.00" y1="160.4" y2="288.5" stroke="#fff" stroke-width="0.75"/><text x="1099.00" y="298.8" text-anchor="middle" font-size="6.2" fill="#4a4a4a">270</text><rect x="934.50" y="261.19" width="2.2" height="27.31" fill="#4c72b0"/><rect x="960.30" y="208.52" width="2.2" height="79.98" fill="#4c72b0"/><rect x="966.60" y="182.72" width="2.2" height="105.78" fill="#4c72b0"/><rect x="1056.90" y="239.05" width="2.2" height="49.45" fill="#4c72b0"/><rect x="1063.50" y="217.98" width="2.2" height="70.52" fill="#4c72b0"/><rect x="1089.30" y="187.02" width="2.2" height="101.48" fill="#4c72b0"/><rect x="1092.30" y="165.52" width="2.2" height="122.98" fill="#4c72b0"/><text x="1014.5" y="156.1" text-anchor="middle" font-size="6.4" fill="#333">module_presentation_length</text><rect x="1156.4" y="160.4" width="176.0999999999999" height="128.1" fill="#eaeaf2"/><line x1="1156.4" x2="1332.5" y1="288.50" y2="288.50" stroke="#fff" stroke-width="0.75"/><text x="1150.9" y="290.60" text-anchor="end" font-size="6.2" fill="#4a4a4a">0</text><line x1="1156.4" x2="1332.5" y1="261.38" y2="261.38" stroke="#fff" stroke-width="0.75"/><text x="1150.9" y="263.48" text-anchor="end" font-size="6.2" fill="#4a4a4a">5000</text><line x1="1156.4" x2="1332.5" y1="234.25" y2="234.25" stroke="#fff" stroke-width="0.75"/><text x="1150.9" y="236.35" text-anchor="end" font-size="6.2" fill="#4a4a4a">10000</text><line x1="1156.4" x2="1332.5" y1="207.12" y2="207.12" stroke="#fff" stroke-width="0.75"/><text x="1150.9" y="209.22" text-anchor="end" font-size="6.2" fill="#4a4a4a">15000</text><line x1="1156.4" x2="1332.5" y1="180.00" y2="180.00" stroke="#fff" stroke-width="0.75"/><text x="1150.9" y="182.10" text-anchor="end" font-size="6.2" fill="#4a4a4a">20000</text><line x1="1164.50" x2="1164.50" y1="160.4" y2="288.5" stroke="#fff" stroke-width="0.75"/><text x="1164.50" y="298.8" text-anchor="middle" font-size="6.2" fill="#4a4a4a">0</text><line x1="1191.25" x2="1191.25" y1="160.4" y2="288.5" stroke="#fff" stroke-width="0.75"/><text x="1191.25" y="298.8" text-anchor="middle" font-size="6.2" fill="#4a4a4a">1</text><line x1="1218.00" x2="1218.00" y1="160.4" y2="288.5" stroke="#fff" stroke-width="0.75"/><text x="1218.00" y="298.8" text-anchor="middle" font-size="6.2" fill="#4a4a4a">2</text><line x1="1244.75" x2="1244.75" y1="160.4" y2="288.5" stroke="#fff" stroke-width="0.75"/><text x="1244.75" y="298.8" text-anchor="middle" font-size="6.2" fill="#4a4a4a">3</text><line x1="1271.50" x2="1271.50" y1="160.4" y2="288.5" stroke="#fff" stroke-width="0.75"/><text x="1271.50" y="298.8" text-anchor="middle" font-size="6.2" fill="#4a4a4a">4</text><line x1="1298.25" x2="1298.25" y1="160.4" y2="288.5" stroke="#fff" stroke-width="0.75"/><text x="1298.25" y="298.8" text-anchor="middle" font-size="6.2" fill="#4a4a4a">5</text><line x1="1325.00" x2="1325.00" y1="160.4" y2="288.5" stroke="#fff" stroke-width="0.75"/><text x="1325.00" y="298.8" text-anchor="middle" font-size="6.2" fill="#4a4a4a">6</text><rect x="1164.10" y="165.89" width="2.6" height="122.61" fill="#4c72b0"/><rect x="1190.20" y="274.94" width="2.6" height="13.56" fill="#4c72b0"/><rect x="1216.70" y="286.33" width="2.6" height="2.17" fill="#4c72b0"/><text x="1244.5" y="156.1" text-anchor="middle" font-size="6.4" fill="#333">num_of_prev_attempts</text><rect x="696" y="328" width="176.39999999999998" height="128" fill="#eaeaf2"/><line x1="696" x2="872.4" y1="456.00" y2="456.00" stroke="#fff" stroke-width="0.75"/><text x="690.5" y="458.10" text-anchor="end" font-size="6.2" fill="#4a4a4a">0</text><line x1="696" x2="872.4" y1="437.71" y2="437.71" stroke="#fff" stroke-width="0.75"/><text x="690.5" y="439.81" text-anchor="end" font-size="6.2" fill="#4a4a4a">2000</text><line x1="696" x2="872.4" y1="419.43" y2="419.43" stroke="#fff" stroke-width="0.75"/><text x="690.5" y="421.53" text-anchor="end" font-size="6.2" fill="#4a4a4a">4000</text><line x1="696" x2="872.4" y1="401.14" y2="401.14" stroke="#fff" stroke-width="0.75"/><text x="690.5" y="403.24" text-anchor="end" font-size="6.2" fill="#4a4a4a">6000</text><line x1="696" x2="872.4" y1="382.86" y2="382.86" stroke="#fff" stroke-width="0.75"/><text x="690.5" y="384.96" text-anchor="end" font-size="6.2" fill="#4a4a4a">8000</text><line x1="696" x2="872.4" y1="364.57" y2="364.57" stroke="#fff" stroke-width="0.75"/><text x="690.5" y="366.67" text-anchor="end" font-size="6.2" fill="#4a4a4a">10000</text><line x1="696" x2="872.4" y1="346.28" y2="346.28" stroke="#fff" stroke-width="0.75"/><text x="690.5" y="348.38" text-anchor="end" font-size="6.2" fill="#4a4a4a">12000</text><text x="690.5" y="330.10" text-anchor="end" font-size="6.2" fill="#4a4a4a">14000</text><line x1="725.40" x2="725.40" y1="328" y2="456" stroke="#fff" stroke-width="0.75"/><text x="725.40" y="466.3" text-anchor="middle" font-size="6.2" fill="#4a4a4a">100</text><line x1="757.00" x2="757.00" y1="328" y2="456" stroke="#fff" stroke-width="0.75"/><text x="757.00" y="466.3" text-anchor="middle" font-size="6.2" fill="#4a4a4a">200</text><line x1="788.60" x2="788.60" y1="328" y2="456" stroke="#fff" stroke-width="0.75"/><text x="788.60" y="466.3" text-anchor="middle" font-size="6.2" fill="#4a4a4a">300</text><line x1="820.20" x2="820.20" y1="328" y2="456" stroke="#fff" stroke-width="0.75"/><text x="820.20" y="466.3" text-anchor="middle" font-size="6.2" fill="#4a4a4a">400</text><line x1="851.80" x2="851.80" y1="328" y2="456" stroke="#fff" stroke-width="0.75"/><text x="851.80" y="466.3" text-anchor="middle" font-size="6.2" fill="#4a4a4a">500</text><rect x="704.40" y="428.57" width="2.4" height="27.43" fill="#4c72b0"/><rect x="711.00" y="334.40" width="2.4" height="121.60" fill="#4c72b0"/><rect x="720.60" y="433.14" width="2.4" height="22.86" fill="#4c72b0"/><rect x="730.20" y="410.28" width="2.4" height="45.72" fill="#4c72b0"/><rect x="739.40" y="451.43" width="2.4" height="4.57" fill="#4c72b0"/><rect x="749.20" y="450.51" width="2.4" height="5.49" fill="#4c72b0"/><rect x="758.80" y="455.54" width="2.4" height="0.46" fill="#4c72b0"/><rect x="768.80" y="454.63" width="2.4" height="1.37" fill="#4c72b0"/><rect x="778.80" y="455.82" width="2.4" height="0.18" fill="#4c72b0"/><text x="784.2" y="323.7" text-anchor="middle" font-size="6.4" fill="#333">studied_credits</text><rect x="927" y="328" width="175.5" height="128" fill="#eaeaf2"/><line x1="927" x2="1102.5" y1="456.00" y2="456.00" stroke="#fff" stroke-width="0.75"/><text x="921.5" y="458.10" text-anchor="end" font-size="6.2" fill="#4a4a4a">0</text><line x1="927" x2="1102.5" y1="431.72" y2="431.72" stroke="#fff" stroke-width="0.75"/><text x="921.5" y="433.82" text-anchor="end" font-size="6.2" fill="#4a4a4a">2000</text><line x1="927" x2="1102.5" y1="407.44" y2="407.44" stroke="#fff" stroke-width="0.75"/><text x="921.5" y="409.54" text-anchor="end" font-size="6.2" fill="#4a4a4a">4000</text><line x1="927" x2="1102.5" y1="383.16" y2="383.16" stroke="#fff" stroke-width="0.75"/><text x="921.5" y="385.26" text-anchor="end" font-size="6.2" fill="#4a4a4a">6000</text><line x1="927" x2="1102.5" y1="358.88" y2="358.88" stroke="#fff" stroke-width="0.75"/><text x="921.5" y="360.98" text-anchor="end" font-size="6.2" fill="#4a4a4a">8000</text><line x1="927" x2="1102.5" y1="334.60" y2="334.60" stroke="#fff" stroke-width="0.75"/><text x="921.5" y="336.70" text-anchor="end" font-size="6.2" fill="#4a4a4a">10000</text><line x1="933.60" x2="933.60" y1="328" y2="456" stroke="#fff" stroke-width="0.75"/><text x="933.60" y="466.3" text-anchor="middle" font-size="6.2" fill="#4a4a4a">0</text><line x1="967.00" x2="967.00" y1="328" y2="456" stroke="#fff" stroke-width="0.75"/><text x="967.00" y="466.3" text-anchor="middle" font-size="6.2" fill="#4a4a4a">5000</text><line x1="1000.40" x2="1000.40" y1="328" y2="456" stroke="#fff" stroke-width="0.75"/><text x="1000.40" y="466.3" text-anchor="middle" font-size="6.2" fill="#4a4a4a">10000</text><line x1="1033.80" x2="1033.80" y1="328" y2="456" stroke="#fff" stroke-width="0.75"/><text x="1033.80" y="466.3" text-anchor="middle" font-size="6.2" fill="#4a4a4a">15000</text><line x1="1067.20" x2="1067.20" y1="328" y2="456" stroke="#fff" stroke-width="0.75"/><text x="1067.20" y="466.3" text-anchor="middle" font-size="6.2" fill="#4a4a4a">20000</text><line x1="1100.60" x2="1100.60" y1="328" y2="456" stroke="#fff" stroke-width="0.75"/><text x="1100.60" y="466.3" text-anchor="middle" font-size="6.2" fill="#4a4a4a">25000</text><rect x="933.90" y="333.99" width="2.8" height="122.01" fill="#4c72b0"/><rect x="937.24" y="395.30" width="2.8" height="60.70" fill="#4c72b0"/><rect x="940.58" y="419.58" width="2.8" height="36.42" fill="#4c72b0"/><rect x="943.92" y="432.93" width="2.8" height="23.07" fill="#4c72b0"/><rect x="947.26" y="439.61" width="2.8" height="16.39" fill="#4c72b0"/><rect x="950.60" y="443.86" width="2.8" height="12.14" fill="#4c72b0"/><rect x="953.94" y="447.50" width="2.8" height="8.50" fill="#4c72b0"/><rect x="957.28" y="449.32" width="2.8" height="6.68" fill="#4c72b0"/><rect x="960.62" y="451.39" width="2.8" height="4.61" fill="#4c72b0"/><rect x="963.96" y="451.75" width="2.8" height="4.25" fill="#4c72b0"/><rect x="967.30" y="452.96" width="2.8" height="3.04" fill="#4c72b0"/><rect x="970.64" y="454.18" width="2.8" height="1.82" fill="#4c72b0"/><rect x="973.98" y="454.42" width="2.8" height="1.58" fill="#4c72b0"/><rect x="977.32" y="455.03" width="2.8" height="0.97" fill="#4c72b0"/><rect x="980.66" y="455.39" width="2.8" height="0.61" fill="#4c72b0"/><rect x="984.00" y="455.64" width="2.8" height="0.36" fill="#4c72b0"/><rect x="987.34" y="455.76" width="2.8" height="0.24" fill="#4c72b0"/><rect x="990.68" y="455.88" width="2.8" height="0.12" fill="#4c72b0"/><text x="1014.8" y="323.7" text-anchor="middle" font-size="6.4" fill="#333">total_click</text><rect x="1156.4" y="327.7" width="176.29999999999995" height="127.80000000000001" fill="#eaeaf2"/><line x1="1156.4" x2="1332.7" y1="455.50" y2="455.50" stroke="#fff" stroke-width="0.75"/><text x="1150.9" y="457.60" text-anchor="end" font-size="6.2" fill="#4a4a4a">0</text><line x1="1156.4" x2="1332.7" y1="434.75" y2="434.75" stroke="#fff" stroke-width="0.75"/><text x="1150.9" y="436.85" text-anchor="end" font-size="6.2" fill="#4a4a4a">200</text><line x1="1156.4" x2="1332.7" y1="414.00" y2="414.00" stroke="#fff" stroke-width="0.75"/><text x="1150.9" y="416.10" text-anchor="end" font-size="6.2" fill="#4a4a4a">400</text><line x1="1156.4" x2="1332.7" y1="393.25" y2="393.25" stroke="#fff" stroke-width="0.75"/><text x="1150.9" y="395.35" text-anchor="end" font-size="6.2" fill="#4a4a4a">600</text><line x1="1156.4" x2="1332.7" y1="372.50" y2="372.50" stroke="#fff" stroke-width="0.75"/><text x="1150.9" y="374.60" text-anchor="end" font-size="6.2" fill="#4a4a4a">800</text><line x1="1156.4" x2="1332.7" y1="351.75" y2="351.75" stroke="#fff" stroke-width="0.75"/><text x="1150.9" y="353.85" text-anchor="end" font-size="6.2" fill="#4a4a4a">1000</text><line x1="1156.4" x2="1332.7" y1="331.00" y2="331.00" stroke="#fff" stroke-width="0.75"/><text x="1150.9" y="333.10" text-anchor="end" font-size="6.2" fill="#4a4a4a">1200</text><line x1="1164.50" x2="1164.50" y1="327.7" y2="455.5" stroke="#fff" stroke-width="0.75"/><text x="1164.50" y="465.8" text-anchor="middle" font-size="6.2" fill="#4a4a4a">0</text><line x1="1196.50" x2="1196.50" y1="327.7" y2="455.5" stroke="#fff" stroke-width="0.75"/><text x="1196.50" y="465.8" text-anchor="middle" font-size="6.2" fill="#4a4a4a">20</text><line x1="1228.50" x2="1228.50" y1="327.7" y2="455.5" stroke="#fff" stroke-width="0.75"/><text x="1228.50" y="465.8" text-anchor="middle" font-size="6.2" fill="#4a4a4a">40</text><line x1="1260.50" x2="1260.50" y1="327.7" y2="455.5" stroke="#fff" stroke-width="0.75"/><text x="1260.50" y="465.8" text-anchor="middle" font-size="6.2" fill="#4a4a4a">60</text><line x1="1292.50" x2="1292.50" y1="327.7" y2="455.5" stroke="#fff" stroke-width="0.75"/><text x="1292.50" y="465.8" text-anchor="middle" font-size="6.2" fill="#4a4a4a">80</text><line x1="1324.50" x2="1324.50" y1="327.7" y2="455.5" stroke="#fff" stroke-width="0.75"/><text x="1324.50" y="465.8" text-anchor="middle" font-size="6.2" fill="#4a4a4a">100</text><rect x="1164.80" y="335.15" width="2.6" height="120.35" fill="#4c72b0"/><rect x="1168.00" y="365.24" width="2.6" height="90.26" fill="#4c72b0"/><rect x="1171.20" y="401.55" width="2.6" height="53.95" fill="#4c72b0"/><rect x="1174.40" y="399.48" width="2.6" height="56.02" fill="#4c72b0"/><rect x="1177.60" y="392.21" width="2.6" height="63.29" fill="#4c72b0"/><rect x="1180.80" y="407.77" width="2.6" height="47.73" fill="#4c72b0"/><rect x="1184.00" y="417.11" width="2.6" height="38.39" fill="#4c72b0"/><rect x="1187.20" y="406.74" width="2.6" height="48.76" fill="#4c72b0"/><rect x="1190.40" y="396.88" width="2.6" height="58.62" fill="#4c72b0"/><rect x="1193.60" y="403.11" width="2.6" height="52.39" fill="#4c72b0"/><rect x="1196.80" y="418.15" width="2.6" height="37.35" fill="#4c72b0"/><rect x="1200.00" y="426.97" width="2.6" height="28.53" fill="#4c72b0"/><rect x="1203.20" y="440.98" width="2.6" height="14.52" fill="#4c72b0"/><rect x="1206.40" y="436.82" width="2.6" height="18.68" fill="#4c72b0"/><rect x="1209.60" y="441.49" width="2.6" height="14.01" fill="#4c72b0"/><rect x="1212.80" y="432.68" width="2.6" height="22.82" fill="#4c72b0"/><rect x="1216.00" y="434.75" width="2.6" height="20.75" fill="#4c72b0"/><rect x="1219.20" y="434.75" width="2.6" height="20.75" fill="#4c72b0"/><rect x="1222.40" y="431.12" width="2.6" height="24.38" fill="#4c72b0"/><rect x="1225.60" y="428.52" width="2.6" height="26.98" fill="#4c72b0"/><rect x="1228.80" y="424.38" width="2.6" height="31.12" fill="#4c72b0"/><rect x="1232.00" y="421.78" width="2.6" height="33.72" fill="#4c72b0"/><rect x="1235.20" y="420.23" width="2.6" height="35.27" fill="#4c72b0"/><rect x="1238.40" y="414.00" width="2.6" height="41.50" fill="#4c72b0"/><rect x="1241.60" y="417.11" width="2.6" height="38.39" fill="#4c72b0"/><rect x="1244.80" y="407.77" width="2.6" height="47.73" fill="#4c72b0"/><rect x="1248.00" y="406.74" width="2.6" height="48.76" fill="#4c72b0"/><rect x="1251.20" y="400.51" width="2.6" height="54.99" fill="#4c72b0"/><rect x="1254.40" y="395.84" width="2.6" height="59.66" fill="#4c72b0"/><rect x="1257.60" y="391.18" width="2.6" height="64.32" fill="#4c72b0"/><rect x="1260.80" y="391.18" width="2.6" height="64.32" fill="#4c72b0"/><rect x="1264.00" y="385.99" width="2.6" height="69.51" fill="#4c72b0"/><rect x="1267.20" y="385.47" width="2.6" height="70.03" fill="#4c72b0"/><rect x="1270.40" y="382.88" width="2.6" height="72.62" fill="#4c72b0"/><rect x="1273.60" y="371.46" width="2.6" height="84.04" fill="#4c72b0"/><rect x="1276.80" y="369.91" width="2.6" height="85.59" fill="#4c72b0"/><rect x="1280.00" y="367.83" width="2.6" height="87.67" fill="#4c72b0"/><rect x="1283.20" y="368.35" width="2.6" height="87.15" fill="#4c72b0"/><rect x="1286.40" y="369.39" width="2.6" height="86.11" fill="#4c72b0"/><rect x="1289.60" y="366.27" width="2.6" height="89.23" fill="#4c72b0"/><rect x="1292.80" y="365.24" width="2.6" height="90.26" fill="#4c72b0"/><rect x="1296.00" y="370.43" width="2.6" height="85.07" fill="#4c72b0"/><rect x="1299.20" y="375.09" width="2.6" height="80.41" fill="#4c72b0"/><rect x="1302.40" y="380.28" width="2.6" height="75.22" fill="#4c72b0"/><rect x="1305.60" y="385.47" width="2.6" height="70.03" fill="#4c72b0"/><rect x="1308.80" y="398.96" width="2.6" height="56.54" fill="#4c72b0"/><rect x="1312.00" y="408.81" width="2.6" height="46.69" fill="#4c72b0"/><rect x="1315.20" y="426.45" width="2.6" height="29.05" fill="#4c72b0"/><rect x="1318.40" y="437.86" width="2.6" height="17.64" fill="#4c72b0"/><rect x="1321.60" y="449.27" width="2.6" height="6.23" fill="#4c72b0"/><text x="1244.6" y="323.4" text-anchor="middle" font-size="6.4" fill="#333">weighted_score</text><rect x="696" y="495" width="176.39999999999998" height="129.5" fill="#eaeaf2"/><line x1="696" x2="872.4" y1="624.50" y2="624.50" stroke="#fff" stroke-width="0.75"/><text x="690.5" y="626.60" text-anchor="end" font-size="6.2" fill="#4a4a4a">0</text><line x1="696" x2="872.4" y1="601.00" y2="601.00" stroke="#fff" stroke-width="0.75"/><text x="690.5" y="603.10" text-anchor="end" font-size="6.2" fill="#4a4a4a">2000</text><line x1="696" x2="872.4" y1="577.50" y2="577.50" stroke="#fff" stroke-width="0.75"/><text x="690.5" y="579.60" text-anchor="end" font-size="6.2" fill="#4a4a4a">4000</text><line x1="696" x2="872.4" y1="554.00" y2="554.00" stroke="#fff" stroke-width="0.75"/><text x="690.5" y="556.10" text-anchor="end" font-size="6.2" fill="#4a4a4a">6000</text><line x1="696" x2="872.4" y1="530.50" y2="530.50" stroke="#fff" stroke-width="0.75"/><text x="690.5" y="532.60" text-anchor="end" font-size="6.2" fill="#4a4a4a">8000</text><line x1="696" x2="872.4" y1="507.00" y2="507.00" stroke="#fff" stroke-width="0.75"/><text x="690.5" y="509.10" text-anchor="end" font-size="6.2" fill="#4a4a4a">10000</text><line x1="703.50" x2="703.50" y1="495" y2="624.5" stroke="#fff" stroke-width="0.75"/><text x="703.50" y="634.8" text-anchor="middle" font-size="6.2" fill="#4a4a4a">0.0</text><line x1="735.80" x2="735.80" y1="495" y2="624.5" stroke="#fff" stroke-width="0.75"/><text x="735.80" y="634.8" text-anchor="middle" font-size="6.2" fill="#4a4a4a">0.2</text><line x1="768.10" x2="768.10" y1="495" y2="624.5" stroke="#fff" stroke-width="0.75"/><text x="768.10" y="634.8" text-anchor="middle" font-size="6.2" fill="#4a4a4a">0.4</text><line x1="800.40" x2="800.40" y1="495" y2="624.5" stroke="#fff" stroke-width="0.75"/><text x="800.40" y="634.8" text-anchor="middle" font-size="6.2" fill="#4a4a4a">0.6</text><line x1="832.70" x2="832.70" y1="495" y2="624.5" stroke="#fff" stroke-width="0.75"/><text x="832.70" y="634.8" text-anchor="middle" font-size="6.2" fill="#4a4a4a">0.8</text><line x1="865.00" x2="865.00" y1="495" y2="624.5" stroke="#fff" stroke-width="0.75"/><text x="865.00" y="634.8" text-anchor="middle" font-size="6.2" fill="#4a4a4a">1.0</text><rect x="704.00" y="501.71" width="2.0" height="122.79" fill="#4c72b0"/><rect x="717.50" y="615.10" width="2.0" height="9.40" fill="#4c72b0"/><rect x="720.00" y="622.15" width="2.0" height="2.35" fill="#4c72b0"/><rect x="726.50" y="619.21" width="2.0" height="5.29" fill="#4c72b0"/><rect x="730.00" y="619.21" width="2.0" height="5.29" fill="#4c72b0"/><rect x="736.60" y="618.62" width="2.0" height="5.88" fill="#4c72b0"/><rect x="743.00" y="616.27" width="2.0" height="8.23" fill="#4c72b0"/><rect x="749.00" y="622.74" width="2.0" height="1.76" fill="#4c72b0"/><rect x="756.00" y="616.27" width="2.0" height="8.23" fill="#4c72b0"/><rect x="769.00" y="619.80" width="2.0" height="4.70" fill="#4c72b0"/><rect x="772.00" y="623.33" width="2.0" height="1.17" fill="#4c72b0"/><rect x="775.00" y="602.17" width="2.0" height="22.33" fill="#4c72b0"/><rect x="785.00" y="602.76" width="2.0" height="21.74" fill="#4c72b0"/><rect x="791.50" y="616.86" width="2.0" height="7.64" fill="#4c72b0"/><rect x="795.00" y="622.74" width="2.0" height="1.76" fill="#4c72b0"/><rect x="800.00" y="619.21" width="2.0" height="5.29" fill="#4c72b0"/><rect x="804.00" y="620.98" width="2.0" height="3.52" fill="#4c72b0"/><rect x="810.50" y="615.69" width="2.0" height="8.81" fill="#4c72b0"/><rect x="814.00" y="623.33" width="2.0" height="1.17" fill="#4c72b0"/><rect x="823.00" y="620.98" width="2.0" height="3.52" fill="#4c72b0"/><rect x="833.00" y="619.21" width="2.0" height="5.29" fill="#4c72b0"/><rect x="863.00" y="604.52" width="2.0" height="19.98" fill="#4c72b0"/><text x="784.2" y="490.7" text-anchor="middle" font-size="6.4" fill="#333">late_rate</text><rect x="927" y="495" width="175.5" height="129" fill="#eaeaf2"/><line x1="927" x2="1102.5" y1="624.00" y2="624.00" stroke="#fff" stroke-width="0.75"/><text x="921.5" y="626.10" text-anchor="end" font-size="6.2" fill="#4a4a4a">0</text><line x1="927" x2="1102.5" y1="609.19" y2="609.19" stroke="#fff" stroke-width="0.75"/><text x="921.5" y="611.29" text-anchor="end" font-size="6.2" fill="#4a4a4a">2500</text><line x1="927" x2="1102.5" y1="594.38" y2="594.38" stroke="#fff" stroke-width="0.75"/><text x="921.5" y="596.48" text-anchor="end" font-size="6.2" fill="#4a4a4a">5000</text><line x1="927" x2="1102.5" y1="579.56" y2="579.56" stroke="#fff" stroke-width="0.75"/><text x="921.5" y="581.66" text-anchor="end" font-size="6.2" fill="#4a4a4a">7500</text><line x1="927" x2="1102.5" y1="564.75" y2="564.75" stroke="#fff" stroke-width="0.75"/><text x="921.5" y="566.85" text-anchor="end" font-size="6.2" fill="#4a4a4a">10000</text><line x1="927" x2="1102.5" y1="549.94" y2="549.94" stroke="#fff" stroke-width="0.75"/><text x="921.5" y="552.04" text-anchor="end" font-size="6.2" fill="#4a4a4a">12500</text><line x1="927" x2="1102.5" y1="535.12" y2="535.12" stroke="#fff" stroke-width="0.75"/><text x="921.5" y="537.23" text-anchor="end" font-size="6.2" fill="#4a4a4a">15000</text><line x1="927" x2="1102.5" y1="520.31" y2="520.31" stroke="#fff" stroke-width="0.75"/><text x="921.5" y="522.41" text-anchor="end" font-size="6.2" fill="#4a4a4a">17500</text><line x1="927" x2="1102.5" y1="505.50" y2="505.50" stroke="#fff" stroke-width="0.75"/><text x="921.5" y="507.60" text-anchor="end" font-size="6.2" fill="#4a4a4a">20000</text><line x1="933.60" x2="933.60" y1="495" y2="624" stroke="#fff" stroke-width="0.75"/><text x="933.60" y="634.3" text-anchor="middle" font-size="6.2" fill="#4a4a4a">0.0</text><line x1="965.78" x2="965.78" y1="495" y2="624" stroke="#fff" stroke-width="0.75"/><text x="965.78" y="634.3" text-anchor="middle" font-size="6.2" fill="#4a4a4a">0.2</text><line x1="997.96" x2="997.96" y1="495" y2="624" stroke="#fff" stroke-width="0.75"/><text x="997.96" y="634.3" text-anchor="middle" font-size="6.2" fill="#4a4a4a">0.4</text><line x1="1030.14" x2="1030.14" y1="495" y2="624" stroke="#fff" stroke-width="0.75"/><text x="1030.14" y="634.3" text-anchor="middle" font-size="6.2" fill="#4a4a4a">0.6</text><line x1="1062.32" x2="1062.32" y1="495" y2="624" stroke="#fff" stroke-width="0.75"/><text x="1062.32" y="634.3" text-anchor="middle" font-size="6.2" fill="#4a4a4a">0.8</text><line x1="1094.50" x2="1094.50" y1="495" y2="624" stroke="#fff" stroke-width="0.75"/><text x="1094.50" y="634.3" text-anchor="middle" font-size="6.2" fill="#4a4a4a">1.0</text><rect x="934.60" y="501.35" width="2.0" height="122.65" fill="#4c72b0"/><rect x="945.47" y="621.63" width="2.0" height="2.37" fill="#4c72b0"/><rect x="948.69" y="622.22" width="2.0" height="1.78" fill="#4c72b0"/><rect x="956.74" y="622.22" width="2.0" height="1.78" fill="#4c72b0"/><rect x="959.95" y="623.11" width="2.0" height="0.89" fill="#4c72b0"/><rect x="964.78" y="620.74" width="2.0" height="3.26" fill="#4c72b0"/><rect x="972.83" y="622.22" width="2.0" height="1.78" fill="#4c72b0"/><rect x="980.87" y="623.11" width="2.0" height="0.89" fill="#4c72b0"/><rect x="985.70" y="622.52" width="2.0" height="1.48" fill="#4c72b0"/><rect x="1013.05" y="622.22" width="2.0" height="1.78" fill="#4c72b0"/><rect x="1093.50" y="621.33" width="2.0" height="2.67" fill="#4c72b0"/><text x="1014.8" y="490.7" text-anchor="middle" font-size="6.4" fill="#333">fail_rate</text></svg>
<div style="position:absolute;left:1353px;top:108px;width:147px;height:569px;background:#18222b;"></div>
<div style="position:absolute;left:1353px;top:110px;width:140px;height:567px;border:1px solid #2a3740;border-radius:3px;"></div>
<svg style="left:0;top:0" width="1500" height="844" viewBox="0 0 1500 844" font-family="Liberation Sans"><defs><linearGradient id="cw" x1="0" y1="0" x2="0" y2="1"><stop offset="0" stop-color="#b40426"/><stop offset="0.3" stop-color="#f08a6c"/><stop offset="0.55" stop-color="#e8e4e2"/><stop offset="0.8" stop-color="#8db0fe"/><stop offset="1" stop-color="#3b4cc0"/></linearGradient></defs><rect x="1357" y="114.7" width="126" height="101.49999999999999" fill="#fff"/><rect x="1399" y="120" width="4.60" height="53.76" fill="#e3e8f2"/><rect x="1403.60" y="120.00" width="9.90" height="7.02" fill="#c4232e"/><rect x="1407.15" y="122.76" width="2.5" height="1.3" fill="#f4f4f4" opacity="0.75"/><rect x="1413.20" y="120.00" width="9.90" height="7.02" fill="#7ea2f0"/><rect x="1415.25" y="122.76" width="5.5" height="1.3" fill="#2a2a3a" opacity="0.35"/><rect x="1422.80" y="120.00" width="9.90" height="7.02" fill="#7ea2f0"/><rect x="1424.85" y="122.76" width="5.5" height="1.3" fill="#2a2a3a" opacity="0.35"/><rect x="1432.40" y="120.00" width="9.90" height="7.02" fill="#a3bdf4"/><rect x="1434.45" y="122.76" width="5.5" height="1.3" fill="#2a2a3a" opacity="0.35"/><rect x="1442.00" y="120.00" width="9.90" height="7.02" fill="#7ea2f0"/><rect x="1444.05" y="122.76" width="5.5" height="1.3" fill="#2a2a3a" opacity="0.35"/><rect x="1451.60" y="120.00" width="9.90" height="7.02" fill="#7ea2f0"/><rect x="1453.65" y="122.76" width="5.5" height="1.3" fill="#2a2a3a" opacity="0.35"/><rect x="1461.20" y="120.00" width="5.10" height="7.02" fill="#7ea2f0"/><rect x="1374.00" y="122.86" width="22.00" height="1" fill="#666" opacity="0.75"/><rect x="1403.60" y="126.72" width="9.90" height="7.02" fill="#7ea2f0"/><rect x="1405.65" y="129.48" width="5.5" height="1.3" fill="#2a2a3a" opacity="0.35"/><rect x="1413.20" y="126.72" width="9.90" height="7.02" fill="#c4232e"/><rect x="1416.75" y="129.48" width="2.5" height="1.3" fill="#f4f4f4" opacity="0.75"/><rect x="1422.80" y="126.72" width="9.90" height="7.02" fill="#a3bdf4"/><rect x="1424.85" y="129.48" width="5.5" height="1.3" fill="#2a2a3a" opacity="0.35"/><rect x="1432.40" y="126.72" width="9.90" height="7.02" fill="#7ea2f0"/><rect x="1434.45" y="129.48" width="5.5" height="1.3" fill="#2a2a3a" opacity="0.35"/><rect x="1442.00" y="126.72" width="9.90" height="7.02" fill="#7ea2f0"/><rect x="1444.05" y="129.48" width="5.5" height="1.3" fill="#2a2a3a" opacity="0.35"/><rect x="1451.60" y="126.72" width="9.90" height="7.02" fill="#7ea2f0"/><rect x="1453.65" y="129.48" width="5.5" height="1.3" fill="#2a2a3a" opacity="0.35"/><rect x="1461.20" y="126.72" width="5.10" height="7.02" fill="#7ea2f0"/><rect x="1358.00" y="129.58" width="38.00" height="1" fill="#666" opacity="0.75"/><rect x="1403.60" y="133.44" width="9.90" height="7.02" fill="#7ea2f0"/><rect x="1405.65" y="136.20" width="5.5" height="1.3" fill="#2a2a3a" opacity="0.35"/><rect x="1413.20" y="133.44" width="9.90" height="7.02" fill="#a3bdf4"/><rect x="1415.25" y="136.20" width="5.5" height="1.3" fill="#2a2a3a" opacity="0.35"/><rect x="1422.80" y="133.44" width="9.90" height="7.02" fill="#c4232e"/><rect x="1426.35" y="136.20" width="2.5" height="1.3" fill="#f4f4f4" opacity="0.75"/><rect x="1432.40" y="133.44" width="9.90" height="7.02" fill="#c4d4ee"/><rect x="1434.45" y="136.20" width="5.5" height="1.3" fill="#2a2a3a" opacity="0.35"/><rect x="1442.00" y="133.44" width="9.90" height="7.02" fill="#7ea2f0"/><rect x="1444.05" y="136.20" width="5.5" height="1.3" fill="#2a2a3a" opacity="0.35"/><rect x="1451.60" y="133.44" width="9.90" height="7.02" fill="#a3bdf4"/><rect x="1453.65" y="136.20" width="5.5" height="1.3" fill="#2a2a3a" opacity="0.35"/><rect x="1461.20" y="133.44" width="5.10" height="7.02" fill="#7ea2f0"/><rect x="1364.00" y="136.30" width="32.00" height="1" fill="#666" opacity="0.75"/><rect x="1403.60" y="140.16" width="9.90" height="7.02" fill="#a3bdf4"/><rect x="1405.65" y="142.92" width="5.5" height="1.3" fill="#2a2a3a" opacity="0.35"/><rect x="1413.20" y="140.16" width="9.90" height="7.02" fill="#7ea2f0"/><rect x="1415.25" y="142.92" width="5.5" height="1.3" fill="#2a2a3a" opacity="0.35"/><rect x="1422.80" y="140.16" width="9.90" height="7.02" fill="#c4d4ee"/><rect x="1424.85" y="142.92" width="5.5" height="1.3" fill="#2a2a3a" opacity="0.35"/><rect x="1432.40" y="140.16" width="9.90" height="7.02" fill="#c4232e"/><rect x="1435.95" y="142.92" width="2.5" height="1.3" fill="#f4f4f4" opacity="0.75"/><rect x="1442.00" y="140.16" width="9.90" height="7.02" fill="#7ea2f0"/><rect x="1444.05" y="142.92" width="5.5" height="1.3" fill="#2a2a3a" opacity="0.35"/><rect x="1451.60" y="140.16" width="9.90" height="7.02" fill="#a3bdf4"/><rect x="1453.65" y="142.92" width="5.5" height="1.3" fill="#2a2a3a" opacity="0.35"/><rect x="1461.20" y="140.16" width="5.10" height="7.02" fill="#7ea2f0"/><rect x="1374.00" y="143.02" width="22.00" height="1" fill="#666" opacity="0.75"/><rect x="1403.60" y="146.88" width="9.90" height="7.02" fill="#7ea2f0"/><rect x="1405.65" y="149.64" width="5.5" height="1.3" fill="#2a2a3a" opacity="0.35"/><rect x="1413.20" y="146.88" width="9.90" height="7.02" fill="#7ea2f0"/><rect x="1415.25" y="149.64" width="5.5" height="1.3" fill="#2a2a3a" opacity="0.35"/><rect x="1422.80" y="146.88" width="9.90" height="7.02" fill="#7ea2f0"/><rect x="1424.85" y="149.64" width="5.5" height="1.3" fill="#2a2a3a" opacity="0.35"/><rect x="1432.40" y="146.88" width="9.90" height="7.02" fill="#7ea2f0"/><rect x="1434.45" y="149.64" width="5.5" height="1.3" fill="#2a2a3a" opacity="0.35"/><rect x="1442.00" y="146.88" width="9.90" height="7.02" fill="#c4232e"/><rect x="1445.55" y="149.64" width="2.5" height="1.3" fill="#f4f4f4" opacity="0.75"/><rect x="1451.60" y="146.88" width="9.90" height="7.02" fill="#f0c8b4"/><rect x="1453.65" y="149.64" width="5.5" height="1.3" fill="#2a2a3a" opacity="0.35"/><rect x="1461.20" y="146.88" width="5.10" height="7.02" fill="#6284e4"/><rect x="1381.00" y="149.74" width="15.00" height="1" fill="#666" opacity="0.75"/><rect x="1403.60" y="153.60" width="9.90" height="7.02" fill="#7ea2f0"/><rect x="1405.65" y="156.36" width="5.5" height="1.3" fill="#2a2a3a" opacity="0.35"/><rect x="1413.20" y="153.60" width="9.90" height="7.02" fill="#7ea2f0"/><rect x="1415.25" y="156.36" width="5.5" height="1.3" fill="#2a2a3a" opacity="0.35"/><rect x="1422.80" y="153.60" width="9.90" height="7.02" fill="#a3bdf4"/><rect x="1424.85" y="156.36" width="5.5" height="1.3" fill="#2a2a3a" opacity="0.35"/><rect x="1432.40" y="153.60" width="9.90" height="7.02" fill="#a3bdf4"/><rect x="1434.45" y="156.36" width="5.5" height="1.3" fill="#2a2a3a" opacity="0.35"/><rect x="1442.00" y="153.60" width="9.90" height="7.02" fill="#f0c8b4"/><rect x="1444.05" y="156.36" width="5.5" height="1.3" fill="#2a2a3a" opacity="0.35"/><rect x="1451.60" y="153.60" width="9.90" height="7.02" fill="#c4232e"/><rect x="1455.15" y="156.36" width="2.5" height="1.3" fill="#f4f4f4" opacity="0.75"/><rect x="1461.20" y="153.60" width="5.10" height="7.02" fill="#6284e4"/><rect x="1375.00" y="156.46" width="21.00" height="1" fill="#666" opacity="0.75"/><rect x="1403.60" y="160.32" width="9.90" height="7.02" fill="#7ea2f0"/><rect x="1405.65" y="163.08" width="5.5" height="1.3" fill="#2a2a3a" opacity="0.35"/><rect x="1413.20" y="160.32" width="9.90" height="7.02" fill="#6284e4"/><rect x="1415.25" y="163.08" width="5.5" height="1.3" fill="#f4f4f4" opacity="0.75"/><rect x="1422.80" y="160.32" width="9.90" height="7.02" fill="#7ea2f0"/><rect x="1424.85" y="163.08" width="5.5" height="1.3" fill="#2a2a3a" opacity="0.35"/><rect x="1432.40" y="160.32" width="9.90" height="7.02" fill="#7ea2f0"/><rect x="1434.45" y="163.08" width="5.5" height="1.3" fill="#2a2a3a" opacity="0.35"/><rect x="1442.00" y="160.32" width="9.90" height="7.02" fill="#6284e4"/><rect x="1444.05" y="163.08" width="5.5" height="1.3" fill="#f4f4f4" opacity="0.75"/><rect x="1451.60" y="160.32" width="9.90" height="7.02" fill="#6284e4"/><rect x="1453.65" y="163.08" width="5.5" height="1.3" fill="#f4f4f4" opacity="0.75"/><rect x="1461.20" y="160.32" width="5.10" height="7.02" fill="#c4232e"/><rect x="1386.00" y="163.18" width="10.00" height="1" fill="#666" opacity="0.75"/><rect x="1403.60" y="167.04" width="9.90" height="7.02" fill="#7ea2f0"/><rect x="1405.65" y="169.80" width="5.5" height="1.3" fill="#2a2a3a" opacity="0.35"/><rect x="1413.20" y="167.04" width="9.90" height="7.02" fill="#7ea2f0"/><rect x="1415.25" y="169.80" width="5.5" height="1.3" fill="#2a2a3a" opacity="0.35"/><rect x="1422.80" y="167.04" width="9.90" height="7.02" fill="#7ea2f0"/><rect x="1424.85" y="169.80" width="5.5" height="1.3" fill="#2a2a3a" opacity="0.35"/><rect x="1432.40" y="167.04" width="9.90" height="7.02" fill="#7ea2f0"/><rect x="1434.45" y="169.80" width="5.5" height="1.3" fill="#2a2a3a" opacity="0.35"/><rect x="1442.00" y="167.04" width="9.90" height="7.02" fill="#6284e4"/><rect x="1444.05" y="169.80" width="5.5" height="1.3" fill="#f4f4f4" opacity="0.75"/><rect x="1451.60" y="167.04" width="9.90" height="7.02" fill="#3a4cc2"/><rect x="1453.65" y="169.80" width="5.5" height="1.3" fill="#f4f4f4" opacity="0.75"/><rect x="1461.20" y="167.04" width="5.10" height="7.02" fill="#a3bdf4"/><rect x="1386.00" y="169.90" width="10.00" height="1" fill="#666" opacity="0.75"/><rect x="1470.30" y="120" width="2.4" height="53.76" fill="url(#cw)"/><rect x="1473.50" y="121.00" width="5" height="0.9" fill="#777" opacity="0.6"/><rect x="1473.50" y="128.30" width="5" height="0.9" fill="#777" opacity="0.6"/><rect x="1473.50" y="135.60" width="5" height="0.9" fill="#777" opacity="0.6"/><rect x="1473.50" y="142.90" width="5" height="0.9" fill="#777" opacity="0.6"/><rect x="1473.50" y="150.20" width="5" height="0.9" fill="#777" opacity="0.6"/><rect x="1473.50" y="157.50" width="5" height="0.9" fill="#777" opacity="0.6"/><rect x="1473.50" y="164.80" width="5" height="0.9" fill="#777" opacity="0.6"/><rect x="1419.5" y="117.9" width="26" height="1.1" fill="#777" opacity="0.7"/><rect x="1407.90" y="177.26" width="1" height="27.0" fill="#666" opacity="0.7"/><rect x="1417.50" y="177.26" width="1" height="37.9" fill="#666" opacity="0.7"/><rect x="1427.10" y="177.26" width="1" height="36.0" fill="#666" opacity="0.7"/><rect x="1436.70" y="177.26" width="1" height="27.0" fill="#666" opacity="0.7"/><rect x="1446.30" y="177.26" width="1" height="16.2" fill="#666" opacity="0.7"/><rect x="1455.90" y="177.26" width="1" height="15.3" fill="#666" opacity="0.7"/><rect x="1465.50" y="177.26" width="1" height="15.3" fill="#666" opacity="0.7"/><rect x="1357" y="220.2" width="126" height="64.4" fill="#fff"/><rect x="1358.30" y="224.21" width="1.20" height="0.8" fill="#777" opacity="0.6"/><rect x="1357.90" y="228.02" width="1.60" height="0.8" fill="#777" opacity="0.6"/><rect x="1357.50" y="231.84" width="2.00" height="0.8" fill="#777" opacity="0.6"/><rect x="1358.10" y="235.65" width="1.40" height="0.8" fill="#777" opacity="0.6"/><rect x="1357.70" y="239.46" width="1.80" height="0.8" fill="#777" opacity="0.6"/><rect x="1358.30" y="243.28" width="1.20" height="0.8" fill="#777" opacity="0.6"/><rect x="1357.90" y="247.09" width="1.60" height="0.8" fill="#777" opacity="0.6"/><rect x="1361" y="222.7" width="51" height="26.700000000000017" fill="#eaeaf2"/><rect x="1378.50" y="221.10" width="16" height="0.8" fill="#888" opacity="0.7"/><rect x="1363.00" y="250.60" width="47.00" height="0.7" fill="#999" opacity="0.6"/><rect x="1361" y="223.42" width="48.45" height="2.36" fill="#4c72b0"/><rect x="1361" y="227.24" width="47.43" height="2.36" fill="#dd8452"/><rect x="1361" y="231.05" width="38.25" height="2.36" fill="#55a868"/><rect x="1361" y="234.87" width="27.03" height="2.36" fill="#c44e52"/><rect x="1361" y="238.68" width="18.36" height="2.36" fill="#8172b3"/><rect x="1361" y="242.50" width="15.30" height="2.36" fill="#937860"/><rect x="1361" y="246.31" width="5.10" height="2.36" fill="#da8bc3"/><rect x="1425.10" y="225.64" width="2.40" height="0.8" fill="#777" opacity="0.6"/><rect x="1424.30" y="232.31" width="3.20" height="0.8" fill="#777" opacity="0.6"/><rect x="1423.50" y="238.99" width="4.00" height="0.8" fill="#777" opacity="0.6"/><rect x="1424.70" y="245.66" width="2.80" height="0.8" fill="#777" opacity="0.6"/><rect x="1429" y="222.7" width="52" height="26.700000000000017" fill="#eaeaf2"/><rect x="1447.00" y="221.10" width="16" height="0.8" fill="#888" opacity="0.7"/><rect x="1431.00" y="250.60" width="48.00" height="0.7" fill="#999" opacity="0.6"/><rect x="1429" y="223.70" width="49.40" height="4.67" fill="#4c72b0"/><rect x="1429" y="230.38" width="38.48" height="4.67" fill="#dd8452"/><rect x="1429" y="237.05" width="33.80" height="4.67" fill="#55a868"/><rect x="1429" y="243.73" width="20.28" height="4.67" fill="#c44e52"/><rect x="1361" y="254.5" width="51" height="26.100000000000023" fill="#eaeaf2"/><rect x="1378.50" y="252.90" width="16" height="0.8" fill="#888" opacity="0.7"/><rect x="1363.00" y="281.80" width="47.00" height="0.7" fill="#999" opacity="0.6"/><rect x="1361" y="256.13" width="48.96" height="9.79" fill="#4c72b0"/><rect x="1361" y="269.18" width="40.29" height="9.79" fill="#dd8452"/><rect x="1420.30" y="255.03" width="7.20" height="0.8" fill="#777" opacity="0.6"/><rect x="1417.90" y="256.90" width="9.60" height="0.8" fill="#777" opacity="0.6"/><rect x="1415.50" y="258.76" width="12.00" height="0.8" fill="#777" opacity="0.6"/><rect x="1419.10" y="260.63" width="8.40" height="0.8" fill="#777" opacity="0.6"/><rect x="1416.70" y="262.49" width="10.80" height="0.8" fill="#777" opacity="0.6"/><rect x="1420.30" y="264.35" width="7.20" height="0.8" fill="#777" opacity="0.6"/><rect x="1417.90" y="266.22" width="9.60" height="0.8" fill="#777" opacity="0.6"/><rect x="1415.50" y="268.08" width="12.00" height="0.8" fill="#777" opacity="0.6"/><rect x="1419.10" y="269.95" width="8.40" height="0.8" fill="#777" opacity="0.6"/><rect x="1416.70" y="271.81" width="10.80" height="0.8" fill="#777" opacity="0.6"/><rect x="1420.30" y="273.68" width="7.20" height="0.8" fill="#777" opacity="0.6"/><rect x="1417.90" y="275.54" width="9.60" height="0.8" fill="#777" opacity="0.6"/><rect x="1415.50" y="277.40" width="12.00" height="0.8" fill="#777" opacity="0.6"/><rect x="1419.10" y="279.27" width="8.40" height="0.8" fill="#777" opacity="0.6"/><rect x="1429" y="254.5" width="52" height="26.100000000000023" fill="#eaeaf2"/><rect x="1447.00" y="252.90" width="16" height="0.8" fill="#888" opacity="0.7"/><rect x="1431.00" y="281.80" width="48.00" height="0.7" fill="#999" opacity="0.6"/><rect x="1429" y="254.73" width="49.40" height="1.40" fill="#f77189"/><rect x="1429" y="256.60" width="49.92" height="1.40" fill="#f7754f"/><rect x="1429" y="258.46" width="46.80" height="1.40" fill="#dc8932"/><rect x="1429" y="260.33" width="45.24" height="1.40" fill="#ae9d31"/><rect x="1429" y="262.19" width="43.16" height="1.40" fill="#97a431"/><rect x="1429" y="264.05" width="41.60" height="1.40" fill="#77ab31"/><rect x="1429" y="265.92" width="37.44" height="1.40" fill="#33b07a"/><rect x="1429" y="267.78" width="36.40" height="1.40" fill="#36ada4"/><rect x="1429" y="269.65" width="35.36" height="1.40" fill="#38aaba"/><rect x="1429" y="271.51" width="31.20" height="1.40" fill="#3ba3ec"/><rect x="1429" y="273.38" width="30.68" height="1.40" fill="#a48cf4"/><rect x="1429" y="275.24" width="30.16" height="1.40" fill="#cc7af4"/><rect x="1429" y="277.10" width="28.60" height="1.40" fill="#f565cc"/><rect x="1429" y="278.97" width="17.68" height="1.40" fill="#f66bad"/><rect x="1357" y="288.5" width="126" height="64" fill="#fff"/><rect x="1365.70" y="293.27" width="7.80" height="0.8" fill="#777" opacity="0.6"/><rect x="1363.10" y="298.61" width="10.40" height="0.8" fill="#777" opacity="0.6"/><rect x="1360.50" y="303.95" width="13.00" height="0.8" fill="#777" opacity="0.6"/><rect x="1364.40" y="309.29" width="9.10" height="0.8" fill="#777" opacity="0.6"/><rect x="1361.80" y="314.63" width="11.70" height="0.8" fill="#777" opacity="0.6"/><rect x="1375" y="291" width="47" height="26.69999999999999" fill="#eaeaf2"/><rect x="1390.50" y="289.40" width="16" height="0.8" fill="#888" opacity="0.7"/><rect x="1377.00" y="318.90" width="43.00" height="0.7" fill="#999" opacity="0.6"/><rect x="1375" y="291.80" width="45.12" height="3.74" fill="#4c72b0"/><rect x="1375" y="297.14" width="42.30" height="3.74" fill="#dd8452"/><rect x="1375" y="302.48" width="15.51" height="3.74" fill="#55a868"/><rect x="1375" y="307.82" width="1.41" height="3.74" fill="#c44e52"/><rect x="1375" y="313.16" width="1.41" height="3.74" fill="#8172b3"/><rect x="1428.00" y="291.94" width="3.00" height="0.8" fill="#777" opacity="0.6"/><rect x="1427.00" y="294.61" width="4.00" height="0.8" fill="#777" opacity="0.6"/><rect x="1426.00" y="297.27" width="5.00" height="0.8" fill="#777" opacity="0.6"/><rect x="1427.50" y="299.94" width="3.50" height="0.8" fill="#777" opacity="0.6"/><rect x="1426.50" y="302.62" width="4.50" height="0.8" fill="#777" opacity="0.6"/><rect x="1428.00" y="305.29" width="3.00" height="0.8" fill="#777" opacity="0.6"/><rect x="1427.00" y="307.95" width="4.00" height="0.8" fill="#777" opacity="0.6"/><rect x="1426.00" y="310.62" width="5.00" height="0.8" fill="#777" opacity="0.6"/><rect x="1427.50" y="313.30" width="3.50" height="0.8" fill="#777" opacity="0.6"/><rect x="1426.50" y="315.96" width="4.50" height="0.8" fill="#777" opacity="0.6"/><rect x="1432.5" y="291" width="48.09999999999991" height="26.69999999999999" fill="#eaeaf2"/><rect x="1448.55" y="289.40" width="16" height="0.8" fill="#888" opacity="0.7"/><rect x="1434.50" y="318.90" width="44.10" height="0.7" fill="#999" opacity="0.6"/><rect x="1432.5" y="291.40" width="46.18" height="1.87" fill="#4c72b0"/><rect x="1432.5" y="294.07" width="40.40" height="1.87" fill="#dd8452"/><rect x="1432.5" y="296.74" width="40.40" height="1.87" fill="#55a868"/><rect x="1432.5" y="299.41" width="39.44" height="1.87" fill="#c44e52"/><rect x="1432.5" y="302.08" width="35.59" height="1.87" fill="#8172b3"/><rect x="1432.5" y="304.75" width="34.63" height="1.87" fill="#937860"/><rect x="1432.5" y="307.42" width="33.19" height="1.87" fill="#da8bc3"/><rect x="1432.5" y="310.09" width="31.26" height="1.87" fill="#8c8c8c"/><rect x="1432.5" y="312.76" width="30.30" height="1.87" fill="#ccb974"/><rect x="1432.5" y="315.43" width="28.86" height="1.87" fill="#64b5cd"/><rect x="1371.10" y="326.88" width="2.40" height="0.8" fill="#777" opacity="0.6"/><rect x="1370.30" y="335.45" width="3.20" height="0.8" fill="#777" opacity="0.6"/><rect x="1369.50" y="344.02" width="4.00" height="0.8" fill="#777" opacity="0.6"/><rect x="1375" y="323" width="47" height="25.69999999999999" fill="#eaeaf2"/><rect x="1390.50" y="321.40" width="16" height="0.8" fill="#888" opacity="0.7"/><rect x="1377.00" y="349.90" width="43.00" height="0.7" fill="#999" opacity="0.6"/><rect x="1375" y="324.20" width="45.12" height="6.17" fill="#4c72b0"/><rect x="1375" y="332.77" width="18.80" height="6.17" fill="#dd8452"/><rect x="1375" y="341.33" width="0.94" height="6.17" fill="#55a868"/><rect x="1432.5" y="323" width="48.09999999999991" height="25.69999999999999" fill="#eaeaf2"/><rect x="1448.55" y="321.40" width="16" height="0.8" fill="#888" opacity="0.7"/><rect x="1434.50" y="349.90" width="44.10" height="0.7" fill="#999" opacity="0.6"/><rect x="1432.5" y="324.29" width="46.18" height="10.28" fill="#4c72b0"/><rect x="1432.5" y="337.14" width="4.81" height="10.28" fill="#dd8452"/><rect x="1357" y="356.3" width="126" height="126" fill="#fff"/><rect x="1363.4" y="357" width="13.20" height="14" fill="#e8eaf2"/><path d="M1365.00 370.00L1370.00 363.86L1375.00 370.00z" fill="#4c72b0" opacity="0.55"/><rect x="1367.98" y="360.54" width="0.8" height="0.8" fill="#4c72b0" opacity="0.75"/><rect x="1370.99" y="359.74" width="0.8" height="0.8" fill="#4c72b0" opacity="0.75"/><rect x="1369.93" y="362.73" width="0.8" height="0.8" fill="#4c72b0" opacity="0.75"/><rect x="1365.53" y="364.18" width="0.8" height="0.8" fill="#4c72b0" opacity="0.75"/><rect x="1365.34" y="363.42" width="0.8" height="0.8" fill="#4c72b0" opacity="0.75"/><rect x="1365.64" y="359.93" width="0.8" height="0.8" fill="#4c72b0" opacity="0.75"/><rect x="1368.91" y="367.43" width="0.8" height="0.8" fill="#4c72b0" opacity="0.75"/><rect x="1366.14" y="361.28" width="0.8" height="0.8" fill="#4c72b0" opacity="0.75"/><rect x="1377.4" y="357" width="15.20" height="14" fill="#e8eaf2"/><rect x="1379.00" y="358.50" width="0.8" height="11.00" fill="#4c72b0" opacity="0.5"/><rect x="1381.00" y="358.50" width="0.8" height="11.00" fill="#4c72b0" opacity="0.5"/><rect x="1387.50" y="358.50" width="0.8" height="11.00" fill="#4c72b0" opacity="0.5"/><rect x="1390.00" y="358.50" width="0.8" height="11.00" fill="#4c72b0" opacity="0.5"/><rect x="1393.4" y="357" width="14.20" height="14" fill="#e8eaf2"/><rect x="1394.50" y="358.50" width="0.6" height="11.00" fill="#4c72b0" opacity="0.3"/><rect x="1399.00" y="358.50" width="0.6" height="11.00" fill="#4c72b0" opacity="0.3"/><rect x="1403.00" y="358.50" width="0.6" height="11.00" fill="#4c72b0" opacity="0.3"/><rect x="1408.4" y="357" width="14.20" height="14" fill="#e8eaf2"/><path d="M1410.00 370.00L1415.50 359.10L1421.00 370.00z" fill="#4c72b0" opacity="0.55"/><rect x="1416.40" y="368.67" width="0.8" height="0.8" fill="#4c72b0" opacity="0.75"/><rect x="1415.89" y="363.05" width="0.8" height="0.8" fill="#4c72b0" opacity="0.75"/><rect x="1419.96" y="359.48" width="0.8" height="0.8" fill="#4c72b0" opacity="0.75"/><rect x="1418.76" y="361.95" width="0.8" height="0.8" fill="#4c72b0" opacity="0.75"/><rect x="1411.47" y="360.20" width="0.8" height="0.8" fill="#4c72b0" opacity="0.75"/><rect x="1413.15" y="367.32" width="0.8" height="0.8" fill="#4c72b0" opacity="0.75"/><rect x="1411.84" y="364.93" width="0.8" height="0.8" fill="#4c72b0" opacity="0.75"/><rect x="1416.52" y="362.80" width="0.8" height="0.8" fill="#4c72b0" opacity="0.75"/><rect x="1423.4" y="357" width="13.80" height="14" fill="#e8eaf2"/><path d="M1424.00 358.50L1434.60 361.90L1424.00 369.50z" fill="#4c72b0" opacity="0.55"/><rect x="1429.92" y="358.70" width="0.8" height="0.8" fill="#4c72b0" opacity="0.75"/><rect x="1424.64" y="360.31" width="0.8" height="0.8" fill="#4c72b0" opacity="0.75"/><rect x="1431.35" y="362.79" width="0.8" height="0.8" fill="#4c72b0" opacity="0.75"/><rect x="1427.39" y="364.56" width="0.8" height="0.8" fill="#4c72b0" opacity="0.75"/><rect x="1428.89" y="361.36" width="0.8" height="0.8" fill="#4c72b0" opacity="0.75"/><rect x="1432.58" y="365.83" width="0.8" height="0.8" fill="#4c72b0" opacity="0.75"/><rect x="1438.4" y="357" width="13.70" height="14" fill="#e8eaf2"/><rect x="1439.50" y="359.00" width="11.50" height="10.50" fill="#4c72b0" opacity="0.55"/><rect x="1441.86" y="364.65" width="0.8" height="0.8" fill="#4c72b0" opacity="0.75"/><rect x="1445.14" y="367.86" width="0.8" height="0.8" fill="#4c72b0" opacity="0.75"/><rect x="1447.53" y="361.58" width="0.8" height="0.8" fill="#4c72b0" opacity="0.75"/><rect x="1450.47" y="359.76" width="0.8" height="0.8" fill="#4c72b0" opacity="0.75"/><rect x="1443.89" y="366.60" width="0.8" height="0.8" fill="#4c72b0" opacity="0.75"/><rect x="1440.78" y="363.73" width="0.8" height="0.8" fill="#4c72b0" opacity="0.75"/><rect x="1439.46" y="365.65" width="0.8" height="0.8" fill="#4c72b0" opacity="0.75"/><rect x="1447.95" y="364.63" width="0.8" height="0.8" fill="#4c72b0" opacity="0.75"/><rect x="1449.24" y="361.86" width="0.8" height="0.8" fill="#4c72b0" opacity="0.75"/><rect x="1447.13" y="364.86" width="0.8" height="0.8" fill="#4c72b0" opacity="0.75"/><rect x="1445.78" y="363.38" width="0.8" height="0.8" fill="#4c72b0" opacity="0.75"/><rect x="1448.83" y="368.61" width="0.8" height="0.8" fill="#4c72b0" opacity="0.75"/><rect x="1452.9" y="357" width="13.70" height="14" fill="#e8eaf2"/><rect x="1454.00" y="359.00" width="11.50" height="10.50" fill="#4c72b0" opacity="0.55"/><rect x="1459.05" y="365.61" width="0.8" height="0.8" fill="#4c72b0" opacity="0.75"/><rect x="1454.21" y="366.01" width="0.8" height="0.8" fill="#4c72b0" opacity="0.75"/><rect x="1461.07" y="369.13" width="0.8" height="0.8" fill="#4c72b0" opacity="0.75"/><rect x="1463.12" y="361.55" width="0.8" height="0.8" fill="#4c72b0" opacity="0.75"/><rect x="1458.01" y="365.65" width="0.8" height="0.8" fill="#4c72b0" opacity="0.75"/><rect x="1453.76" y="363.44" width="0.8" height="0.8" fill="#4c72b0" opacity="0.75"/><rect x="1455.47" y="359.75" width="0.8" height="0.8" fill="#4c72b0" opacity="0.75"/><rect x="1454.19" y="366.72" width="0.8" height="0.8" fill="#4c72b0" opacity="0.75"/><rect x="1455.01" y="361.15" width="0.8" height="0.8" fill="#4c72b0" opacity="0.75"/><rect x="1458.07" y="367.82" width="0.8" height="0.8" fill="#4c72b0" opacity="0.75"/><rect x="1454.44" y="363.31" width="0.8" height="0.8" fill="#4c72b0" opacity="0.75"/><rect x="1459.93" y="367.95" width="0.8" height="0.8" fill="#4c72b0" opacity="0.75"/><rect x="1467.4" y="357" width="14.20" height="14" fill="#e8eaf2"/><rect x="1468.50" y="359.00" width="12.00" height="10.50" fill="#4c72b0" opacity="0.55"/><rect x="1478.00" y="367.74" width="0.8" height="0.8" fill="#4c72b0" opacity="0.75"/><rect x="1471.40" y="362.94" width="0.8" height="0.8" fill="#4c72b0" opacity="0.75"/><rect x="1472.38" y="367.96" width="0.8" height="0.8" fill="#4c72b0" opacity="0.75"/><rect x="1479.68" y="360.11" width="0.8" height="0.8" fill="#4c72b0" opacity="0.75"/><rect x="1470.15" y="360.98" width="0.8" height="0.8" fill="#4c72b0" opacity="0.75"/><rect x="1470.85" y="363.69" width="0.8" height="0.8" fill="#4c72b0" opacity="0.75"/><rect x="1475.19" y="361.31" width="0.8" height="0.8" fill="#4c72b0" opacity="0.75"/><rect x="1468.05" y="362.98" width="0.8" height="0.8" fill="#4c72b0" opacity="0.75"/><rect x="1472.50" y="364.56" width="0.8" height="0.8" fill="#4c72b0" opacity="0.75"/><rect x="1479.63" y="365.89" width="0.8" height="0.8" fill="#4c72b0" opacity="0.75"/><rect x="1474.29" y="365.11" width="0.8" height="0.8" fill="#4c72b0" opacity="0.75"/><rect x="1476.25" y="359.08" width="0.8" height="0.8" fill="#4c72b0" opacity="0.75"/><rect x="1363.4" y="371.5" width="13.20" height="15.0" fill="#e8eaf2"/><rect x="1364.50" y="373.75" width="11.00" height="1.3" fill="#4c72b0" opacity="0.5"/><rect x="1364.50" y="376.75" width="11.00" height="1.3" fill="#4c72b0" opacity="0.5"/><rect x="1364.50" y="382.75" width="11.00" height="1.3" fill="#4c72b0" opacity="0.5"/><rect x="1377.4" y="371.5" width="15.20" height="15.0" fill="#e8eaf2"/><rect x="1379.00" y="379.00" width="1.2" height="6.75" fill="#4c72b0" opacity="0.6"/><rect x="1389.00" y="376.00" width="1.2" height="9.75" fill="#4c72b0" opacity="0.6"/><rect x="1393.4" y="371.5" width="14.20" height="15.0" fill="#e8eaf2"/><rect x="1394.50" y="373.75" width="12.00" height="1.3" fill="#4c72b0" opacity="0.5"/><rect x="1394.50" y="376.75" width="12.00" height="1.3" fill="#4c72b0" opacity="0.5"/><rect x="1394.50" y="382.75" width="12.00" height="1.3" fill="#4c72b0" opacity="0.5"/><rect x="1408.4" y="371.5" width="14.20" height="15.0" fill="#e8eaf2"/><rect x="1409.50" y="373.75" width="12.00" height="1.3" fill="#4c72b0" opacity="0.5"/><rect x="1409.50" y="376.75" width="12.00" height="1.3" fill="#4c72b0" opacity="0.5"/><rect x="1409.50" y="382.75" width="12.00" height="1.3" fill="#4c72b0" opacity="0.5"/><rect x="1423.4" y="371.5" width="13.80" height="15.0" fill="#e8eaf2"/><rect x="1424.50" y="373.75" width="11.60" height="1.3" fill="#4c72b0" opacity="0.5"/><rect x="1424.50" y="376.75" width="11.60" height="1.3" fill="#4c72b0" opacity="0.5"/><rect x="1424.50" y="382.75" width="11.60" height="1.3" fill="#4c72b0" opacity="0.5"/><rect x="1438.4" y="371.5" width="13.70" height="15.0" fill="#e8eaf2"/><rect x="1439.50" y="373.75" width="11.50" height="1.3" fill="#4c72b0" opacity="0.5"/><rect x="1439.50" y="376.75" width="11.50" height="1.3" fill="#4c72b0" opacity="0.5"/><rect x="1439.50" y="382.75" width="11.50" height="1.3" fill="#4c72b0" opacity="0.5"/><rect x="1452.9" y="371.5" width="13.70" height="15.0" fill="#e8eaf2"/><rect x="1454.00" y="373.75" width="11.50" height="1.3" fill="#4c72b0" opacity="0.5"/><rect x="1454.00" y="376.75" width="11.50" height="1.3" fill="#4c72b0" opacity="0.5"/><rect x="1454.00" y="382.75" width="11.50" height="1.3" fill="#4c72b0" opacity="0.5"/><rect x="1467.4" y="371.5" width="14.20" height="15.0" fill="#e8eaf2"/><rect x="1468.50" y="373.75" width="12.00" height="1.3" fill="#4c72b0" opacity="0.5"/><rect x="1468.50" y="376.75" width="12.00" height="1.3" fill="#4c72b0" opacity="0.5"/><rect x="1468.50" y="382.75" width="12.00" height="1.3" fill="#4c72b0" opacity="0.5"/><rect x="1363.4" y="387" width="13.20" height="15" fill="#e8eaf2"/><rect x="1364.50" y="390.00" width="11.00" height="1.3" fill="#4c72b0" opacity="0.5"/><rect x="1364.50" y="394.50" width="11.00" height="1.3" fill="#4c72b0" opacity="0.5"/><rect x="1364.50" y="399.00" width="11.00" height="1.3" fill="#4c72b0" opacity="0.5"/><rect x="1364.50" y="400.50" width="11.00" height="1.3" fill="#4c72b0" opacity="0.5"/><rect x="1377.4" y="387" width="15.20" height="15" fill="#e8eaf2"/><rect x="1379.00" y="394.50" width="1.2" height="6.75" fill="#4c72b0" opacity="0.6"/><rect x="1389.00" y="391.50" width="1.2" height="9.75" fill="#4c72b0" opacity="0.6"/><rect x="1393.4" y="387" width="14.20" height="15" fill="#e8eaf2"/><rect x="1394.50" y="390.00" width="12.00" height="1.3" fill="#4c72b0" opacity="0.5"/><rect x="1394.50" y="394.50" width="12.00" height="1.3" fill="#4c72b0" opacity="0.5"/><rect x="1394.50" y="399.00" width="12.00" height="1.3" fill="#4c72b0" opacity="0.5"/><rect x="1394.50" y="400.50" width="12.00" height="1.3" fill="#4c72b0" opacity="0.5"/><rect x="1408.4" y="387" width="14.20" height="15" fill="#e8eaf2"/><rect x="1409.50" y="390.00" width="12.00" height="1.3" fill="#4c72b0" opacity="0.5"/><rect x="1409.50" y="394.50" width="12.00" height="1.3" fill="#4c72b0" opacity="0.5"/><rect x="1409.50" y="399.00" width="12.00" height="1.3" fill="#4c72b0" opacity="0.5"/><rect x="1409.50" y="400.50" width="12.00" height="1.3" fill="#4c72b0" opacity="0.5"/><rect x="1423.4" y="387" width="13.80" height="15" fill="#e8eaf2"/><rect x="1424.50" y="390.00" width="11.60" height="1.3" fill="#4c72b0" opacity="0.5"/><rect x="1424.50" y="394.50" width="11.60" height="1.3" fill="#4c72b0" opacity="0.5"/><rect x="1424.50" y="399.00" width="11.60" height="1.3" fill="#4c72b0" opacity="0.5"/><rect x="1424.50" y="400.50" width="11.60" height="1.3" fill="#4c72b0" opacity="0.5"/><rect x="1438.4" y="387" width="13.70" height="15" fill="#e8eaf2"/><rect x="1439.50" y="390.00" width="11.50" height="1.3" fill="#4c72b0" opacity="0.5"/><rect x="1439.50" y="394.50" width="11.50" height="1.3" fill="#4c72b0" opacity="0.5"/><rect x="1439.50" y="399.00" width="11.50" height="1.3" fill="#4c72b0" opacity="0.5"/><rect x="1439.50" y="400.50" width="11.50" height="1.3" fill="#4c72b0" opacity="0.5"/><rect x="1452.9" y="387" width="13.70" height="15" fill="#e8eaf2"/><rect x="1454.00" y="390.00" width="11.50" height="1.3" fill="#4c72b0" opacity="0.5"/><rect x="1454.00" y="394.50" width="11.50" height="1.3" fill="#4c72b0" opacity="0.5"/><rect x="1454.00" y="399.00" width="11.50" height="1.3" fill="#4c72b0" opacity="0.5"/><rect x="1454.00" y="400.50" width="11.50" height="1.3" fill="#4c72b0" opacity="0.5"/><rect x="1467.4" y="387" width="14.20" height="15" fill="#e8eaf2"/><rect x="1468.50" y="390.00" width="12.00" height="1.3" fill="#4c72b0" opacity="0.5"/><rect x="1468.50" y="394.50" width="12.00" height="1.3" fill="#4c72b0" opacity="0.5"/><rect x="1468.50" y="399.00" width="12.00" height="1.3" fill="#4c72b0" opacity="0.5"/><rect x="1468.50" y="400.50" width="12.00" height="1.3" fill="#4c72b0" opacity="0.5"/><rect x="1363.4" y="402.5" width="13.20" height="14.5" fill="#e8eaf2"/><path d="M1365.00 416.00L1370.00 404.68L1375.00 416.00z" fill="#4c72b0" opacity="0.55"/><rect x="1373.28" y="412.85" width="0.8" height="0.8" fill="#4c72b0" opacity="0.75"/><rect x="1373.05" y="413.04" width="0.8" height="0.8" fill="#4c72b0" opacity="0.75"/><rect x="1368.61" y="408.77" width="0.8" height="0.8" fill="#4c72b0" opacity="0.75"/><rect x="1365.95" y="411.29" width="0.8" height="0.8" fill="#4c72b0" opacity="0.75"/><rect x="1365.57" y="405.22" width="0.8" height="0.8" fill="#4c72b0" opacity="0.75"/><rect x="1366.92" y="406.24" width="0.8" height="0.8" fill="#4c72b0" opacity="0.75"/><rect x="1368.13" y="405.06" width="0.8" height="0.8" fill="#4c72b0" opacity="0.75"/><rect x="1365.00" y="406.12" width="0.8" height="0.8" fill="#4c72b0" opacity="0.75"/><rect x="1377.4" y="402.5" width="15.20" height="14.5" fill="#e8eaf2"/><rect x="1379.00" y="404.00" width="0.8" height="11.50" fill="#4c72b0" opacity="0.5"/><rect x="1381.00" y="404.00" width="0.8" height="11.50" fill="#4c72b0" opacity="0.5"/><rect x="1387.50" y="404.00" width="0.8" height="11.50" fill="#4c72b0" opacity="0.5"/><rect x="1390.00" y="404.00" width="0.8" height="11.50" fill="#4c72b0" opacity="0.5"/><rect x="1393.4" y="402.5" width="14.20" height="14.5" fill="#e8eaf2"/><rect x="1394.50" y="404.00" width="0.6" height="11.50" fill="#4c72b0" opacity="0.3"/><rect x="1399.00" y="404.00" width="0.6" height="11.50" fill="#4c72b0" opacity="0.3"/><rect x="1403.00" y="404.00" width="0.6" height="11.50" fill="#4c72b0" opacity="0.3"/><rect x="1408.4" y="402.5" width="14.20" height="14.5" fill="#e8eaf2"/><rect x="1409.50" y="404.50" width="1.5" height="11.50" fill="#4c72b0" opacity="0.8"/><rect x="1423.4" y="402.5" width="13.80" height="14.5" fill="#e8eaf2"/><path d="M1424.00 404.50Q1426.65 415.00 1436.10 416.00L1424.00 416.00z" fill="#4c72b0" opacity="0.55"/><rect x="1425.20" y="408.39" width="0.8" height="0.8" fill="#4c72b0" opacity="0.5"/><rect x="1424.30" y="413.86" width="0.8" height="0.8" fill="#4c72b0" opacity="0.5"/><rect x="1431.25" y="406.09" width="0.8" height="0.8" fill="#4c72b0" opacity="0.5"/><rect x="1426.98" y="408.22" width="0.8" height="0.8" fill="#4c72b0" opacity="0.5"/><rect x="1428.30" y="405.81" width="0.8" height="0.8" fill="#4c72b0" opacity="0.5"/><rect x="1434.02" y="415.13" width="0.8" height="0.8" fill="#4c72b0" opacity="0.5"/><rect x="1438.4" y="402.5" width="13.70" height="14.5" fill="#e8eaf2"/><rect x="1439.50" y="409.02" width="11.50" height="7.25" fill="#4c72b0" opacity="0.5"/><rect x="1444.45" y="410.89" width="0.8" height="0.8" fill="#4c72b0" opacity="0.75"/><rect x="1440.00" y="407.70" width="0.8" height="0.8" fill="#4c72b0" opacity="0.75"/><rect x="1443.01" y="409.06" width="0.8" height="0.8" fill="#4c72b0" opacity="0.75"/><rect x="1448.70" y="408.20" width="0.8" height="0.8" fill="#4c72b0" opacity="0.75"/><rect x="1439.27" y="414.79" width="0.8" height="0.8" fill="#4c72b0" opacity="0.75"/><rect x="1445.18" y="408.07" width="0.8" height="0.8" fill="#4c72b0" opacity="0.75"/><rect x="1445.36" y="407.08" width="0.8" height="0.8" fill="#4c72b0" opacity="0.75"/><rect x="1445.18" y="415.02" width="0.8" height="0.8" fill="#4c72b0" opacity="0.75"/><rect x="1449.10" y="412.66" width="0.8" height="0.8" fill="#4c72b0" opacity="0.75"/><rect x="1442.06" y="409.91" width="0.8" height="0.8" fill="#4c72b0" opacity="0.75"/><rect x="1440.95" y="413.30" width="0.8" height="0.8" fill="#4c72b0" opacity="0.75"/><rect x="1445.23" y="413.36" width="0.8" height="0.8" fill="#4c72b0" opacity="0.75"/><rect x="1452.9" y="402.5" width="13.70" height="14.5" fill="#e8eaf2"/><rect x="1454.00" y="409.02" width="11.50" height="7.25" fill="#4c72b0" opacity="0.5"/><rect x="1457.36" y="408.71" width="0.8" height="0.8" fill="#4c72b0" opacity="0.75"/><rect x="1462.99" y="415.07" width="0.8" height="0.8" fill="#4c72b0" opacity="0.75"/><rect x="1463.48" y="413.58" width="0.8" height="0.8" fill="#4c72b0" opacity="0.75"/><rect x="1463.07" y="413.03" width="0.8" height="0.8" fill="#4c72b0" opacity="0.75"/><rect x="1456.15" y="411.17" width="0.8" height="0.8" fill="#4c72b0" opacity="0.75"/><rect x="1457.66" y="407.09" width="0.8" height="0.8" fill="#4c72b0" opacity="0.75"/><rect x="1453.83" y="409.18" width="0.8" height="0.8" fill="#4c72b0" opacity="0.75"/><rect x="1456.53" y="412.63" width="0.8" height="0.8" fill="#4c72b0" opacity="0.75"/><rect x="1464.69" y="410.58" width="0.8" height="0.8" fill="#4c72b0" opacity="0.75"/><rect x="1464.46" y="415.10" width="0.8" height="0.8" fill="#4c72b0" opacity="0.75"/><rect x="1464.67" y="409.89" width="0.8" height="0.8" fill="#4c72b0" opacity="0.75"/><rect x="1456.08" y="408.74" width="0.8" height="0.8" fill="#4c72b0" opacity="0.75"/><rect x="1467.4" y="402.5" width="14.20" height="14.5" fill="#e8eaf2"/><path d="M1468.00 404.50Q1470.75 415.00 1480.50 416.00L1468.00 416.00z" fill="#4c72b0" opacity="0.55"/><rect x="1470.40" y="406.69" width="0.8" height="0.8" fill="#4c72b0" opacity="0.5"/><rect x="1475.61" y="414.13" width="0.8" height="0.8" fill="#4c72b0" opacity="0.5"/><rect x="1478.25" y="409.63" width="0.8" height="0.8" fill="#4c72b0" opacity="0.5"/><rect x="1475.97" y="413.06" width="0.8" height="0.8" fill="#4c72b0" opacity="0.5"/><rect x="1469.03" y="411.57" width="0.8" height="0.8" fill="#4c72b0" opacity="0.5"/><rect x="1479.10" y="412.87" width="0.8" height="0.8" fill="#4c72b0" opacity="0.5"/><rect x="1363.4" y="417.5" width="13.20" height="14.5" fill="#e8eaf2"/><path d="M1365.00 431.00L1370.00 419.68L1375.00 431.00z" fill="#4c72b0" opacity="0.55"/><rect x="1371.90" y="424.61" width="0.8" height="0.8" fill="#4c72b0" opacity="0.75"/><rect x="1366.64" y="427.94" width="0.8" height="0.8" fill="#4c72b0" opacity="0.75"/><rect x="1368.06" y="428.07" width="0.8" height="0.8" fill="#4c72b0" opacity="0.75"/><rect x="1373.94" y="423.74" width="0.8" height="0.8" fill="#4c72b0" opacity="0.75"/><rect x="1368.69" y="429.63" width="0.8" height="0.8" fill="#4c72b0" opacity="0.75"/><rect x="1371.67" y="421.32" width="0.8" height="0.8" fill="#4c72b0" opacity="0.75"/><rect x="1366.17" y="421.12" width="0.8" height="0.8" fill="#4c72b0" opacity="0.75"/><rect x="1373.32" y="428.13" width="0.8" height="0.8" fill="#4c72b0" opacity="0.75"/><rect x="1377.4" y="417.5" width="15.20" height="14.5" fill="#e8eaf2"/><rect x="1379.00" y="419.00" width="0.8" height="11.50" fill="#4c72b0" opacity="0.5"/><rect x="1381.00" y="419.00" width="0.8" height="11.50" fill="#4c72b0" opacity="0.5"/><rect x="1387.50" y="419.00" width="0.8" height="11.50" fill="#4c72b0" opacity="0.5"/><rect x="1390.00" y="419.00" width="0.8" height="11.50" fill="#4c72b0" opacity="0.5"/><rect x="1393.4" y="417.5" width="14.20" height="14.5" fill="#e8eaf2"/><rect x="1394.50" y="419.00" width="0.6" height="11.50" fill="#4c72b0" opacity="0.3"/><rect x="1399.00" y="419.00" width="0.6" height="11.50" fill="#4c72b0" opacity="0.3"/><rect x="1403.00" y="419.00" width="0.6" height="11.50" fill="#4c72b0" opacity="0.3"/><rect x="1408.4" y="417.5" width="14.20" height="14.5" fill="#e8eaf2"/><path d="M1409.00 419.50Q1411.75 430.00 1421.50 431.00L1409.00 431.00z" fill="#4c72b0" opacity="0.55"/><rect x="1410.78" y="428.34" width="0.8" height="0.8" fill="#4c72b0" opacity="0.5"/><rect x="1420.96" y="426.53" width="0.8" height="0.8" fill="#4c72b0" opacity="0.5"/><rect x="1413.27" y="425.37" width="0.8" height="0.8" fill="#4c72b0" opacity="0.5"/><rect x="1410.60" y="419.65" width="0.8" height="0.8" fill="#4c72b0" opacity="0.5"/><rect x="1420.84" y="426.45" width="0.8" height="0.8" fill="#4c72b0" opacity="0.5"/><rect x="1415.42" y="429.49" width="0.8" height="0.8" fill="#4c72b0" opacity="0.5"/><rect x="1423.4" y="417.5" width="13.80" height="14.5" fill="#e8eaf2"/><rect x="1424.50" y="419.50" width="1.5" height="11.50" fill="#4c72b0" opacity="0.8"/><rect x="1438.4" y="417.5" width="13.70" height="14.5" fill="#e8eaf2"/><path d="M1439.00 431.00Q1448.15 430.00 1451.00 419.50L1451.00 431.00z" fill="#4c72b0" opacity="0.55"/><rect x="1444.08" y="428.83" width="0.8" height="0.8" fill="#4c72b0" opacity="0.5"/><rect x="1448.67" y="421.76" width="0.8" height="0.8" fill="#4c72b0" opacity="0.5"/><rect x="1441.95" y="422.63" width="0.8" height="0.8" fill="#4c72b0" opacity="0.5"/><rect x="1441.81" y="425.77" width="0.8" height="0.8" fill="#4c72b0" opacity="0.5"/><rect x="1442.03" y="423.98" width="0.8" height="0.8" fill="#4c72b0" opacity="0.5"/><rect x="1440.53" y="429.24" width="0.8" height="0.8" fill="#4c72b0" opacity="0.5"/><rect x="1452.9" y="417.5" width="13.70" height="14.5" fill="#e8eaf2"/><rect x="1454.00" y="424.02" width="11.50" height="7.25" fill="#4c72b0" opacity="0.5"/><rect x="1457.64" y="425.68" width="0.8" height="0.8" fill="#4c72b0" opacity="0.75"/><rect x="1460.33" y="429.40" width="0.8" height="0.8" fill="#4c72b0" opacity="0.75"/><rect x="1458.42" y="429.51" width="0.8" height="0.8" fill="#4c72b0" opacity="0.75"/><rect x="1459.37" y="426.29" width="0.8" height="0.8" fill="#4c72b0" opacity="0.75"/><rect x="1459.63" y="422.01" width="0.8" height="0.8" fill="#4c72b0" opacity="0.75"/><rect x="1458.65" y="423.38" width="0.8" height="0.8" fill="#4c72b0" opacity="0.75"/><rect x="1453.55" y="428.52" width="0.8" height="0.8" fill="#4c72b0" opacity="0.75"/><rect x="1455.52" y="425.80" width="0.8" height="0.8" fill="#4c72b0" opacity="0.75"/><rect x="1461.98" y="426.50" width="0.8" height="0.8" fill="#4c72b0" opacity="0.75"/><rect x="1457.31" y="426.18" width="0.8" height="0.8" fill="#4c72b0" opacity="0.75"/><rect x="1460.00" y="428.40" width="0.8" height="0.8" fill="#4c72b0" opacity="0.75"/><rect x="1454.74" y="426.53" width="0.8" height="0.8" fill="#4c72b0" opacity="0.75"/><rect x="1467.4" y="417.5" width="14.20" height="14.5" fill="#e8eaf2"/><path d="M1468.00 419.50Q1470.75 430.00 1480.50 431.00L1468.00 431.00z" fill="#4c72b0" opacity="0.55"/><rect x="1471.03" y="422.46" width="0.8" height="0.8" fill="#4c72b0" opacity="0.5"/><rect x="1477.42" y="424.93" width="0.8" height="0.8" fill="#4c72b0" opacity="0.5"/><rect x="1474.85" y="427.63" width="0.8" height="0.8" fill="#4c72b0" opacity="0.5"/><rect x="1479.13" y="424.24" width="0.8" height="0.8" fill="#4c72b0" opacity="0.5"/><rect x="1475.47" y="424.91" width="0.8" height="0.8" fill="#4c72b0" opacity="0.5"/><rect x="1474.25" y="426.91" width="0.8" height="0.8" fill="#4c72b0" opacity="0.5"/><rect x="1363.4" y="432.5" width="13.20" height="14.5" fill="#e8eaf2"/><rect x="1364.50" y="434.50" width="11.00" height="11.00" fill="#4c72b0" opacity="0.55"/><rect x="1369.07" y="439.97" width="0.8" height="0.8" fill="#4c72b0" opacity="0.75"/><rect x="1369.35" y="444.54" width="0.8" height="0.8" fill="#4c72b0" opacity="0.75"/><rect x="1371.83" y="443.82" width="0.8" height="0.8" fill="#4c72b0" opacity="0.75"/><rect x="1374.55" y="436.91" width="0.8" height="0.8" fill="#4c72b0" opacity="0.75"/><rect x="1370.27" y="444.56" width="0.8" height="0.8" fill="#4c72b0" opacity="0.75"/><rect x="1373.41" y="435.54" width="0.8" height="0.8" fill="#4c72b0" opacity="0.75"/><rect x="1365.36" y="438.95" width="0.8" height="0.8" fill="#4c72b0" opacity="0.75"/><rect x="1364.81" y="436.70" width="0.8" height="0.8" fill="#4c72b0" opacity="0.75"/><rect x="1364.82" y="441.50" width="0.8" height="0.8" fill="#4c72b0" opacity="0.75"/><rect x="1372.78" y="444.05" width="0.8" height="0.8" fill="#4c72b0" opacity="0.75"/><rect x="1365.73" y="442.02" width="0.8" height="0.8" fill="#4c72b0" opacity="0.75"/><rect x="1371.39" y="435.60" width="0.8" height="0.8" fill="#4c72b0" opacity="0.75"/><rect x="1377.4" y="432.5" width="15.20" height="14.5" fill="#e8eaf2"/><rect x="1379.00" y="434.00" width="0.8" height="11.50" fill="#4c72b0" opacity="0.5"/><rect x="1381.00" y="434.00" width="0.8" height="11.50" fill="#4c72b0" opacity="0.5"/><rect x="1387.50" y="434.00" width="0.8" height="11.50" fill="#4c72b0" opacity="0.5"/><rect x="1390.00" y="434.00" width="0.8" height="11.50" fill="#4c72b0" opacity="0.5"/><rect x="1393.4" y="432.5" width="14.20" height="14.5" fill="#e8eaf2"/><rect x="1394.50" y="434.00" width="0.6" height="11.50" fill="#4c72b0" opacity="0.3"/><rect x="1399.00" y="434.00" width="0.6" height="11.50" fill="#4c72b0" opacity="0.3"/><rect x="1403.00" y="434.00" width="0.6" height="11.50" fill="#4c72b0" opacity="0.3"/><rect x="1408.4" y="432.5" width="14.20" height="14.5" fill="#e8eaf2"/><rect x="1409.50" y="434.50" width="12.00" height="11.00" fill="#4c72b0" opacity="0.55"/><rect x="1419.77" y="444.84" width="0.8" height="0.8" fill="#4c72b0" opacity="0.75"/><rect x="1411.68" y="444.67" width="0.8" height="0.8" fill="#4c72b0" opacity="0.75"/><rect x="1413.86" y="439.46" width="0.8" height="0.8" fill="#4c72b0" opacity="0.75"/><rect x="1421.08" y="443.32" width="0.8" height="0.8" fill="#4c72b0" opacity="0.75"/><rect x="1410.97" y="438.83" width="0.8" height="0.8" fill="#4c72b0" opacity="0.75"/><rect x="1415.29" y="437.80" width="0.8" height="0.8" fill="#4c72b0" opacity="0.75"/><rect x="1411.39" y="437.57" width="0.8" height="0.8" fill="#4c72b0" opacity="0.75"/><rect x="1417.81" y="434.22" width="0.8" height="0.8" fill="#4c72b0" opacity="0.75"/><rect x="1415.76" y="438.93" width="0.8" height="0.8" fill="#4c72b0" opacity="0.75"/><rect x="1409.22" y="437.71" width="0.8" height="0.8" fill="#4c72b0" opacity="0.75"/><rect x="1416.61" y="439.74" width="0.8" height="0.8" fill="#4c72b0" opacity="0.75"/><rect x="1409.78" y="445.03" width="0.8" height="0.8" fill="#4c72b0" opacity="0.75"/><rect x="1423.4" y="432.5" width="13.80" height="14.5" fill="#e8eaf2"/><path d="M1424.00 434.50Q1426.65 445.00 1436.10 446.00L1424.00 446.00z" fill="#4c72b0" opacity="0.55"/><rect x="1433.30" y="444.90" width="0.8" height="0.8" fill="#4c72b0" opacity="0.5"/><rect x="1425.24" y="437.34" width="0.8" height="0.8" fill="#4c72b0" opacity="0.5"/><rect x="1424.47" y="442.84" width="0.8" height="0.8" fill="#4c72b0" opacity="0.5"/><rect x="1427.19" y="435.89" width="0.8" height="0.8" fill="#4c72b0" opacity="0.5"/><rect x="1428.98" y="444.25" width="0.8" height="0.8" fill="#4c72b0" opacity="0.5"/><rect x="1433.66" y="437.27" width="0.8" height="0.8" fill="#4c72b0" opacity="0.5"/><rect x="1438.4" y="432.5" width="13.70" height="14.5" fill="#e8eaf2"/><path d="M1439.00 446.00L1439.00 435.40L1443.08 444.00L1449.60 436.85L1451.50 446.00z" fill="#4c72b0" opacity="0.7"/><rect x="1452.9" y="432.5" width="13.70" height="14.5" fill="#e8eaf2"/><rect x="1454.00" y="434.50" width="11.50" height="11.00" fill="#4c72b0" opacity="0.55"/><rect x="1455.25" y="444.29" width="0.8" height="0.8" fill="#4c72b0" opacity="0.75"/><rect x="1460.18" y="441.84" width="0.8" height="0.8" fill="#4c72b0" opacity="0.75"/><rect x="1454.55" y="434.64" width="0.8" height="0.8" fill="#4c72b0" opacity="0.75"/><rect x="1461.55" y="438.76" width="0.8" height="0.8" fill="#4c72b0" opacity="0.75"/><rect x="1454.35" y="444.51" width="0.8" height="0.8" fill="#4c72b0" opacity="0.75"/><rect x="1460.92" y="442.98" width="0.8" height="0.8" fill="#4c72b0" opacity="0.75"/><rect x="1454.48" y="443.59" width="0.8" height="0.8" fill="#4c72b0" opacity="0.75"/><rect x="1454.28" y="443.66" width="0.8" height="0.8" fill="#4c72b0" opacity="0.75"/><rect x="1458.81" y="437.80" width="0.8" height="0.8" fill="#4c72b0" opacity="0.75"/><rect x="1459.97" y="444.38" width="0.8" height="0.8" fill="#4c72b0" opacity="0.75"/><rect x="1456.63" y="435.45" width="0.8" height="0.8" fill="#4c72b0" opacity="0.75"/><rect x="1459.66" y="436.67" width="0.8" height="0.8" fill="#4c72b0" opacity="0.75"/><rect x="1467.4" y="432.5" width="14.20" height="14.5" fill="#e8eaf2"/><path d="M1468.00 434.50Q1470.75 445.00 1480.50 446.00L1468.00 446.00z" fill="#4c72b0" opacity="0.55"/><rect x="1469.34" y="436.23" width="0.8" height="0.8" fill="#4c72b0" opacity="0.5"/><rect x="1468.61" y="436.66" width="0.8" height="0.8" fill="#4c72b0" opacity="0.5"/><rect x="1471.81" y="437.76" width="0.8" height="0.8" fill="#4c72b0" opacity="0.5"/><rect x="1477.27" y="437.60" width="0.8" height="0.8" fill="#4c72b0" opacity="0.5"/><rect x="1474.10" y="436.40" width="0.8" height="0.8" fill="#4c72b0" opacity="0.5"/><rect x="1472.23" y="434.69" width="0.8" height="0.8" fill="#4c72b0" opacity="0.5"/><rect x="1363.4" y="447.5" width="13.20" height="14.5" fill="#e8eaf2"/><rect x="1364.50" y="449.50" width="11.00" height="11.00" fill="#4c72b0" opacity="0.55"/><rect x="1366.81" y="449.17" width="0.8" height="0.8" fill="#4c72b0" opacity="0.75"/><rect x="1372.21" y="455.17" width="0.8" height="0.8" fill="#4c72b0" opacity="0.75"/><rect x="1366.12" y="454.32" width="0.8" height="0.8" fill="#4c72b0" opacity="0.75"/><rect x="1374.47" y="450.19" width="0.8" height="0.8" fill="#4c72b0" opacity="0.75"/><rect x="1373.17" y="453.84" width="0.8" height="0.8" fill="#4c72b0" opacity="0.75"/><rect x="1369.54" y="458.35" width="0.8" height="0.8" fill="#4c72b0" opacity="0.75"/><rect x="1368.40" y="454.67" width="0.8" height="0.8" fill="#4c72b0" opacity="0.75"/><rect x="1371.70" y="460.00" width="0.8" height="0.8" fill="#4c72b0" opacity="0.75"/><rect x="1367.84" y="458.32" width="0.8" height="0.8" fill="#4c72b0" opacity="0.75"/><rect x="1371.92" y="456.12" width="0.8" height="0.8" fill="#4c72b0" opacity="0.75"/><rect x="1368.53" y="452.89" width="0.8" height="0.8" fill="#4c72b0" opacity="0.75"/><rect x="1364.61" y="450.45" width="0.8" height="0.8" fill="#4c72b0" opacity="0.75"/><rect x="1377.4" y="447.5" width="15.20" height="14.5" fill="#e8eaf2"/><rect x="1379.00" y="449.00" width="0.8" height="11.50" fill="#4c72b0" opacity="0.5"/><rect x="1381.00" y="449.00" width="0.8" height="11.50" fill="#4c72b0" opacity="0.5"/><rect x="1387.50" y="449.00" width="0.8" height="11.50" fill="#4c72b0" opacity="0.5"/><rect x="1390.00" y="449.00" width="0.8" height="11.50" fill="#4c72b0" opacity="0.5"/><rect x="1393.4" y="447.5" width="14.20" height="14.5" fill="#e8eaf2"/><rect x="1394.50" y="449.00" width="0.6" height="11.50" fill="#4c72b0" opacity="0.3"/><rect x="1399.00" y="449.00" width="0.6" height="11.50" fill="#4c72b0" opacity="0.3"/><rect x="1403.00" y="449.00" width="0.6" height="11.50" fill="#4c72b0" opacity="0.3"/><rect x="1408.4" y="447.5" width="14.20" height="14.5" fill="#e8eaf2"/><rect x="1409.50" y="449.50" width="12.00" height="11.00" fill="#4c72b0" opacity="0.55"/><rect x="1409.86" y="457.30" width="0.8" height="0.8" fill="#4c72b0" opacity="0.75"/><rect x="1412.12" y="450.83" width="0.8" height="0.8" fill="#4c72b0" opacity="0.75"/><rect x="1410.03" y="458.42" width="0.8" height="0.8" fill="#4c72b0" opacity="0.75"/><rect x="1419.62" y="456.51" width="0.8" height="0.8" fill="#4c72b0" opacity="0.75"/><rect x="1412.44" y="451.71" width="0.8" height="0.8" fill="#4c72b0" opacity="0.75"/><rect x="1412.58" y="454.15" width="0.8" height="0.8" fill="#4c72b0" opacity="0.75"/><rect x="1410.92" y="453.99" width="0.8" height="0.8" fill="#4c72b0" opacity="0.75"/><rect x="1412.21" y="459.77" width="0.8" height="0.8" fill="#4c72b0" opacity="0.75"/><rect x="1420.87" y="455.13" width="0.8" height="0.8" fill="#4c72b0" opacity="0.75"/><rect x="1411.98" y="459.82" width="0.8" height="0.8" fill="#4c72b0" opacity="0.75"/><rect x="1412.78" y="452.99" width="0.8" height="0.8" fill="#4c72b0" opacity="0.75"/><rect x="1409.01" y="453.27" width="0.8" height="0.8" fill="#4c72b0" opacity="0.75"/><rect x="1423.4" y="447.5" width="13.80" height="14.5" fill="#e8eaf2"/><path d="M1424.00 449.50Q1426.65 460.00 1436.10 461.00L1424.00 461.00z" fill="#4c72b0" opacity="0.55"/><rect x="1429.60" y="454.88" width="0.8" height="0.8" fill="#4c72b0" opacity="0.5"/><rect x="1426.37" y="454.90" width="0.8" height="0.8" fill="#4c72b0" opacity="0.5"/><rect x="1424.06" y="452.33" width="0.8" height="0.8" fill="#4c72b0" opacity="0.5"/><rect x="1425.06" y="453.77" width="0.8" height="0.8" fill="#4c72b0" opacity="0.5"/><rect x="1424.49" y="449.74" width="0.8" height="0.8" fill="#4c72b0" opacity="0.5"/><rect x="1427.59" y="451.99" width="0.8" height="0.8" fill="#4c72b0" opacity="0.5"/><rect x="1438.4" y="447.5" width="13.70" height="14.5" fill="#e8eaf2"/><rect x="1439.50" y="449.50" width="11.50" height="11.00" fill="#4c72b0" opacity="0.55"/><rect x="1445.85" y="454.93" width="0.8" height="0.8" fill="#4c72b0" opacity="0.75"/><rect x="1447.78" y="456.36" width="0.8" height="0.8" fill="#4c72b0" opacity="0.75"/><rect x="1447.38" y="458.85" width="0.8" height="0.8" fill="#4c72b0" opacity="0.75"/><rect x="1443.56" y="452.65" width="0.8" height="0.8" fill="#4c72b0" opacity="0.75"/><rect x="1450.52" y="450.67" width="0.8" height="0.8" fill="#4c72b0" opacity="0.75"/><rect x="1447.47" y="456.20" width="0.8" height="0.8" fill="#4c72b0" opacity="0.75"/><rect x="1439.51" y="458.36" width="0.8" height="0.8" fill="#4c72b0" opacity="0.75"/><rect x="1449.44" y="456.03" width="0.8" height="0.8" fill="#4c72b0" opacity="0.75"/><rect x="1447.59" y="458.10" width="0.8" height="0.8" fill="#4c72b0" opacity="0.75"/><rect x="1440.63" y="454.87" width="0.8" height="0.8" fill="#4c72b0" opacity="0.75"/><rect x="1444.90" y="458.35" width="0.8" height="0.8" fill="#4c72b0" opacity="0.75"/><rect x="1448.41" y="458.26" width="0.8" height="0.8" fill="#4c72b0" opacity="0.75"/><rect x="1452.9" y="447.5" width="13.70" height="14.5" fill="#e8eaf2"/><rect x="1454.00" y="449.50" width="1.5" height="11.50" fill="#4c72b0" opacity="0.8"/><rect x="1467.4" y="447.5" width="14.20" height="14.5" fill="#e8eaf2"/><rect x="1475.13" y="458.95" width="0.8" height="0.8" fill="#4c72b0" opacity="0.55"/><rect x="1476.33" y="456.61" width="0.8" height="0.8" fill="#4c72b0" opacity="0.55"/><rect x="1470.81" y="448.86" width="0.8" height="0.8" fill="#4c72b0" opacity="0.55"/><rect x="1469.62" y="452.72" width="0.8" height="0.8" fill="#4c72b0" opacity="0.55"/><rect x="1469.28" y="458.28" width="0.8" height="0.8" fill="#4c72b0" opacity="0.55"/><rect x="1474.81" y="455.84" width="0.8" height="0.8" fill="#4c72b0" opacity="0.55"/><rect x="1475.64" y="456.46" width="0.8" height="0.8" fill="#4c72b0" opacity="0.55"/><rect x="1473.97" y="448.54" width="0.8" height="0.8" fill="#4c72b0" opacity="0.55"/><rect x="1477.73" y="457.25" width="0.8" height="0.8" fill="#4c72b0" opacity="0.55"/><rect x="1474.14" y="454.76" width="0.8" height="0.8" fill="#4c72b0" opacity="0.55"/><rect x="1476.04" y="449.27" width="0.8" height="0.8" fill="#4c72b0" opacity="0.55"/><rect x="1476.99" y="451.45" width="0.8" height="0.8" fill="#4c72b0" opacity="0.55"/><rect x="1468.91" y="451.61" width="0.8" height="0.8" fill="#4c72b0" opacity="0.55"/><rect x="1476.90" y="450.90" width="0.8" height="0.8" fill="#4c72b0" opacity="0.55"/><rect x="1477.03" y="459.92" width="0.8" height="0.8" fill="#4c72b0" opacity="0.55"/><rect x="1474.03" y="452.98" width="0.8" height="0.8" fill="#4c72b0" opacity="0.55"/><rect x="1473.84" y="456.50" width="0.8" height="0.8" fill="#4c72b0" opacity="0.55"/><rect x="1477.36" y="455.72" width="0.8" height="0.8" fill="#4c72b0" opacity="0.55"/><rect x="1363.4" y="462.5" width="13.20" height="15.0" fill="#e8eaf2"/><rect x="1364.50" y="464.50" width="11.00" height="11.50" fill="#4c72b0" opacity="0.55"/><rect x="1371.20" y="464.91" width="0.8" height="0.8" fill="#4c72b0" opacity="0.75"/><rect x="1365.65" y="466.97" width="0.8" height="0.8" fill="#4c72b0" opacity="0.75"/><rect x="1372.32" y="467.56" width="0.8" height="0.8" fill="#4c72b0" opacity="0.75"/><rect x="1370.36" y="464.15" width="0.8" height="0.8" fill="#4c72b0" opacity="0.75"/><rect x="1364.68" y="467.14" width="0.8" height="0.8" fill="#4c72b0" opacity="0.75"/><rect x="1371.53" y="472.10" width="0.8" height="0.8" fill="#4c72b0" opacity="0.75"/><rect x="1371.57" y="467.40" width="0.8" height="0.8" fill="#4c72b0" opacity="0.75"/><rect x="1369.79" y="469.44" width="0.8" height="0.8" fill="#4c72b0" opacity="0.75"/><rect x="1369.22" y="465.39" width="0.8" height="0.8" fill="#4c72b0" opacity="0.75"/><rect x="1374.01" y="466.33" width="0.8" height="0.8" fill="#4c72b0" opacity="0.75"/><rect x="1374.96" y="474.95" width="0.8" height="0.8" fill="#4c72b0" opacity="0.75"/><rect x="1364.20" y="469.37" width="0.8" height="0.8" fill="#4c72b0" opacity="0.75"/><rect x="1377.4" y="462.5" width="15.20" height="15.0" fill="#e8eaf2"/><rect x="1379.00" y="464.00" width="0.8" height="12.00" fill="#4c72b0" opacity="0.5"/><rect x="1381.00" y="464.00" width="0.8" height="12.00" fill="#4c72b0" opacity="0.5"/><rect x="1387.50" y="464.00" width="0.8" height="12.00" fill="#4c72b0" opacity="0.5"/><rect x="1390.00" y="464.00" width="0.8" height="12.00" fill="#4c72b0" opacity="0.5"/><rect x="1393.4" y="462.5" width="14.20" height="15.0" fill="#e8eaf2"/><rect x="1394.50" y="464.00" width="0.6" height="12.00" fill="#4c72b0" opacity="0.3"/><rect x="1399.00" y="464.00" width="0.6" height="12.00" fill="#4c72b0" opacity="0.3"/><rect x="1403.00" y="464.00" width="0.6" height="12.00" fill="#4c72b0" opacity="0.3"/><rect x="1408.4" y="462.5" width="14.20" height="15.0" fill="#e8eaf2"/><path d="M1409.00 464.50Q1411.75 475.50 1421.50 476.50L1409.00 476.50z" fill="#4c72b0" opacity="0.55"/><rect x="1419.00" y="475.34" width="0.8" height="0.8" fill="#4c72b0" opacity="0.5"/><rect x="1414.48" y="467.51" width="0.8" height="0.8" fill="#4c72b0" opacity="0.5"/><rect x="1411.56" y="475.09" width="0.8" height="0.8" fill="#4c72b0" opacity="0.5"/><rect x="1411.57" y="471.01" width="0.8" height="0.8" fill="#4c72b0" opacity="0.5"/><rect x="1410.73" y="470.37" width="0.8" height="0.8" fill="#4c72b0" opacity="0.5"/><rect x="1420.62" y="465.99" width="0.8" height="0.8" fill="#4c72b0" opacity="0.5"/><rect x="1423.4" y="462.5" width="13.80" height="15.0" fill="#e8eaf2"/><path d="M1424.00 464.50Q1426.65 475.50 1436.10 476.50L1424.00 476.50z" fill="#4c72b0" opacity="0.55"/><rect x="1433.68" y="470.20" width="0.8" height="0.8" fill="#4c72b0" opacity="0.5"/><rect x="1434.46" y="472.38" width="0.8" height="0.8" fill="#4c72b0" opacity="0.5"/><rect x="1426.73" y="474.55" width="0.8" height="0.8" fill="#4c72b0" opacity="0.5"/><rect x="1429.74" y="464.78" width="0.8" height="0.8" fill="#4c72b0" opacity="0.5"/><rect x="1424.04" y="470.01" width="0.8" height="0.8" fill="#4c72b0" opacity="0.5"/><rect x="1429.32" y="467.88" width="0.8" height="0.8" fill="#4c72b0" opacity="0.5"/><rect x="1438.4" y="462.5" width="13.70" height="15.0" fill="#e8eaf2"/><path d="M1439.00 464.50Q1441.62 475.50 1451.00 476.50L1439.00 476.50z" fill="#4c72b0" opacity="0.55"/><rect x="1440.65" y="468.35" width="0.8" height="0.8" fill="#4c72b0" opacity="0.5"/><rect x="1442.70" y="473.91" width="0.8" height="0.8" fill="#4c72b0" opacity="0.5"/><rect x="1439.02" y="472.91" width="0.8" height="0.8" fill="#4c72b0" opacity="0.5"/><rect x="1448.82" y="465.84" width="0.8" height="0.8" fill="#4c72b0" opacity="0.5"/><rect x="1449.84" y="472.49" width="0.8" height="0.8" fill="#4c72b0" opacity="0.5"/><rect x="1449.55" y="467.75" width="0.8" height="0.8" fill="#4c72b0" opacity="0.5"/><rect x="1452.9" y="462.5" width="13.70" height="15.0" fill="#e8eaf2"/><rect x="1457.85" y="468.29" width="0.8" height="0.8" fill="#4c72b0" opacity="0.55"/><rect x="1465.19" y="470.69" width="0.8" height="0.8" fill="#4c72b0" opacity="0.55"/><rect x="1457.72" y="468.72" width="0.8" height="0.8" fill="#4c72b0" opacity="0.55"/><rect x="1456.72" y="464.09" width="0.8" height="0.8" fill="#4c72b0" opacity="0.55"/><rect x="1454.69" y="473.68" width="0.8" height="0.8" fill="#4c72b0" opacity="0.55"/><rect x="1456.84" y="474.91" width="0.8" height="0.8" fill="#4c72b0" opacity="0.55"/><rect x="1456.42" y="466.74" width="0.8" height="0.8" fill="#4c72b0" opacity="0.55"/><rect x="1459.48" y="465.82" width="0.8" height="0.8" fill="#4c72b0" opacity="0.55"/><rect x="1457.87" y="475.17" width="0.8" height="0.8" fill="#4c72b0" opacity="0.55"/><rect x="1463.85" y="473.41" width="0.8" height="0.8" fill="#4c72b0" opacity="0.55"/><rect x="1460.88" y="474.64" width="0.8" height="0.8" fill="#4c72b0" opacity="0.55"/><rect x="1464.51" y="470.20" width="0.8" height="0.8" fill="#4c72b0" opacity="0.55"/><rect x="1461.92" y="464.10" width="0.8" height="0.8" fill="#4c72b0" opacity="0.55"/><rect x="1462.07" y="469.00" width="0.8" height="0.8" fill="#4c72b0" opacity="0.55"/><rect x="1462.31" y="471.36" width="0.8" height="0.8" fill="#4c72b0" opacity="0.55"/><rect x="1456.85" y="464.10" width="0.8" height="0.8" fill="#4c72b0" opacity="0.55"/><rect x="1464.34" y="465.05" width="0.8" height="0.8" fill="#4c72b0" opacity="0.55"/><rect x="1459.02" y="467.69" width="0.8" height="0.8" fill="#4c72b0" opacity="0.55"/><rect x="1467.4" y="462.5" width="14.20" height="15.0" fill="#e8eaf2"/><rect x="1469.00" y="464.00" width="1.2" height="12.50" fill="#4c72b0" opacity="0.8"/><rect x="1356.5" y="486" width="127" height="92" fill="#1a90e0"/><g transform="translate(1359,488.6) scale(0.1824,0.1768) translate(-668.5,-147)"><rect x="668.5" y="147" width="669" height="492" fill="#fff"/><rect x="696" y="159.5" width="176.5" height="128.5" fill="#eaeaf2"/><line x1="696" x2="872.5" y1="288.00" y2="288.00" stroke="#fff" stroke-width="0.75"/><text x="690.5" y="290.10" text-anchor="end" font-size="6.2" fill="#4a4a4a">0</text><line x1="696" x2="872.5" y1="264.55" y2="264.55" stroke="#fff" stroke-width="0.75"/><text x="690.5" y="266.65" text-anchor="end" font-size="6.2" fill="#4a4a4a">1000</text><line x1="696" x2="872.5" y1="241.10" y2="241.10" stroke="#fff" stroke-width="0.75"/><text x="690.5" y="243.20" text-anchor="end" font-size="6.2" fill="#4a4a4a">2000</text><line x1="696" x2="872.5" y1="217.65" y2="217.65" stroke="#fff" stroke-width="0.75"/><text x="690.5" y="219.75" text-anchor="end" font-size="6.2" fill="#4a4a4a">3000</text><line x1="696" x2="872.5" y1="194.20" y2="194.20" stroke="#fff" stroke-width="0.75"/><text x="690.5" y="196.30" text-anchor="end" font-size="6.2" fill="#4a4a4a">4000</text><line x1="696" x2="872.5" y1="170.75" y2="170.75" stroke="#fff" stroke-width="0.75"/><text x="690.5" y="172.85" text-anchor="end" font-size="6.2" fill="#4a4a4a">5000</text><line x1="710.28" x2="710.28" y1="159.5" y2="288" stroke="#fff" stroke-width="0.75"/><text x="710.28" y="298.3" text-anchor="middle" font-size="6.2" fill="#4a4a4a">-400</text><line x1="737.46" x2="737.46" y1="159.5" y2="288" stroke="#fff" stroke-width="0.75"/><text x="737.46" y="298.3" text-anchor="middle" font-size="6.2" fill="#4a4a4a">-300</text><line x1="764.64" x2="764.64" y1="159.5" y2="288" stroke="#fff" stroke-width="0.75"/><text x="764.64" y="298.3" text-anchor="middle" font-size="6.2" fill="#4a4a4a">-200</text><line x1="791.82" x2="791.82" y1="159.5" y2="288" stroke="#fff" stroke-width="0.75"/><text x="791.82" y="298.3" text-anchor="middle" font-size="6.2" fill="#4a4a4a">-100</text><line x1="819.00" x2="819.00" y1="159.5" y2="288" stroke="#fff" stroke-width="0.75"/><text x="819.00" y="298.3" text-anchor="middle" font-size="6.2" fill="#4a4a4a">0</text><line x1="846.18" x2="846.18" y1="159.5" y2="288" stroke="#fff" stroke-width="0.75"/><text x="846.18" y="298.3" text-anchor="middle" font-size="6.2" fill="#4a4a4a">100</text><rect x="759.40" y="287.65" width="2.6" height="0.35" fill="#4c72b0"/><rect x="762.59" y="286.12" width="2.6" height="1.88" fill="#4c72b0"/><rect x="765.78" y="284.48" width="2.6" height="3.52" fill="#4c72b0"/><rect x="768.97" y="283.31" width="2.6" height="4.69" fill="#4c72b0"/><rect x="772.16" y="282.61" width="2.6" height="5.39" fill="#4c72b0"/><rect x="775.35" y="272.05" width="2.6" height="15.95" fill="#4c72b0"/><rect x="778.54" y="261.03" width="2.6" height="26.97" fill="#4c72b0"/><rect x="781.73" y="263.38" width="2.6" height="24.62" fill="#4c72b0"/><rect x="784.92" y="265.02" width="2.6" height="22.98" fill="#4c72b0"/><rect x="788.11" y="259.86" width="2.6" height="28.14" fill="#4c72b0"/><rect x="791.30" y="254.47" width="2.6" height="33.53" fill="#4c72b0"/><rect x="794.49" y="252.82" width="2.6" height="35.18" fill="#4c72b0"/><rect x="797.68" y="248.13" width="2.6" height="39.87" fill="#4c72b0"/><rect x="800.87" y="236.41" width="2.6" height="51.59" fill="#4c72b0"/><rect x="804.06" y="239.93" width="2.6" height="48.07" fill="#4c72b0"/><rect x="807.25" y="221.17" width="2.6" height="66.83" fill="#4c72b0"/><rect x="810.44" y="165.59" width="2.6" height="122.41" fill="#4c72b0"/><rect x="813.63" y="241.57" width="2.6" height="46.43" fill="#4c72b0"/><rect x="816.82" y="275.34" width="2.6" height="12.66" fill="#4c72b0"/><rect x="820.01" y="286.12" width="2.6" height="1.88" fill="#4c72b0"/><text x="784.2" y="155.2" text-anchor="middle" font-size="6.4" fill="#333">date_registration</text><rect x="926" y="160.4" width="177" height="128.1" fill="#eaeaf2"/><line x1="926" x2="1103" y1="288.50" y2="288.50" stroke="#fff" stroke-width="0.75"/><text x="920.5" y="290.60" text-anchor="end" font-size="6.2" fill="#4a4a4a">0</text><line x1="926" x2="1103" y1="267.00" y2="267.00" stroke="#fff" stroke-width="0.75"/><text x="920.5" y="269.10" text-anchor="end" font-size="6.2" fill="#4a4a4a">1000</text><line x1="926" x2="1103" y1="245.50" y2="245.50" stroke="#fff" stroke-width="0.75"/><text x="920.5" y="247.60" text-anchor="end" font-size="6.2" fill="#4a4a4a">2000</text><line x1="926" x2="1103" y1="224.00" y2="224.00" stroke="#fff" stroke-width="0.75"/><text x="920.5" y="226.10" text-anchor="end" font-size="6.2" fill="#4a4a4a">3000</text><line x1="926" x2="1103" y1="202.50" y2="202.50" stroke="#fff" stroke-width="0.75"/><text x="920.5" y="204.60" text-anchor="end" font-size="6.2" fill="#4a4a4a">4000</text><line x1="926" x2="1103" y1="181.00" y2="181.00" stroke="#fff" stroke-width="0.75"/><text x="920.5" y="183.10" text-anchor="end" font-size="6.2" fill="#4a4a4a">5000</text><text x="920.5" y="161.60" text-anchor="end" font-size="6.2" fill="#4a4a4a">6000</text><line x1="938.00" x2="938.00" y1="160.4" y2="288.5" stroke="#fff" stroke-width="0.75"/><text x="938.00" y="298.8" text-anchor="middle" font-size="6.2" fill="#4a4a4a">235</text><line x1="961.00" x2="961.00" y1="160.4" y2="288.5" stroke="#fff" stroke-width="0.75"/><text x="961.00" y="298.8" text-anchor="middle" font-size="6.2" fill="#4a4a4a">240</text><line x1="984.00" x2="984.00" y1="160.4" y2="288.5" stroke="#fff" stroke-width="0.75"/><text x="984.00" y="298.8" text-anchor="middle" font-size="6.2" fill="#4a4a4a">245</text><line x1="1007.00" x2="1007.00" y1="160.4" y2="288.5" stroke="#fff" stroke-width="0.75"/><text x="1007.00" y="298.8" text-anchor="middle" font-size="6.2" fill="#4a4a4a">250</text><line x1="1030.00" x2="1030.00" y1="160.4" y2="288.5" stroke="#fff" stroke-width="0.75"/><text x="1030.00" y="298.8" text-anchor="middle" font-size="6.2" fill="#4a4a4a">255</text><line x1="1053.00" x2="1053.00" y1="160.4" y2="288.5" stroke="#fff" stroke-width="0.75"/><text x="1053.00" y="298.8" text-anchor="middle" font-size="6.2" fill="#4a4a4a">260</text><line x1="1076.00" x2="1076.00" y1="160.4" y2="288.5" stroke="#fff" stroke-width="0.75"/><text x="1076.00" y="298.8" text-anchor="middle" font-size="6.2" fill="#4a4a4a">265</text><line x1="1099.00" x2="1099.00" y1="160.4" y2="288.5" stroke="#fff" stroke-width="0.75"/><text x="1099.00" y="298.8" text-anchor="middle" font-size="6.2" fill="#4a4a4a">270</text><rect x="934.50" y="261.19" width="2.2" height="27.31" fill="#4c72b0"/><rect x="960.30" y="208.52" width="2.2" height="79.98" fill="#4c72b0"/><rect x="966.60" y="182.72" width="2.2" height="105.78" fill="#4c72b0"/><rect x="1056.90" y="239.05" width="2.2" height="49.45" fill="#4c72b0"/><rect x="1063.50" y="217.98" width="2.2" height="70.52" fill="#4c72b0"/><rect x="1089.30" y="187.02" width="2.2" height="101.48" fill="#4c72b0"/><rect x="1092.30" y="165.52" width="2.2" height="122.98" fill="#4c72b0"/><text x="1014.5" y="156.1" text-anchor="middle" font-size="6.4" fill="#333">module_presentation_length</text><rect x="1156.4" y="160.4" width="176.0999999999999" height="128.1" fill="#eaeaf2"/><line x1="1156.4" x2="1332.5" y1="288.50" y2="288.50" stroke="#fff" stroke-width="0.75"/><text x="1150.9" y="290.60" text-anchor="end" font-size="6.2" fill="#4a4a4a">0</text><line x1="1156.4" x2="1332.5" y1="261.38" y2="261.38" stroke="#fff" stroke-width="0.75"/><text x="1150.9" y="263.48" text-anchor="end" font-size="6.2" fill="#4a4a4a">5000</text><line x1="1156.4" x2="1332.5" y1="234.25" y2="234.25" stroke="#fff" stroke-width="0.75"/><text x="1150.9" y="236.35" text-anchor="end" font-size="6.2" fill="#4a4a4a">10000</text><line x1="1156.4" x2="1332.5" y1="207.12" y2="207.12" stroke="#fff" stroke-width="0.75"/><text x="1150.9" y="209.22" text-anchor="end" font-size="6.2" fill="#4a4a4a">15000</text><line x1="1156.4" x2="1332.5" y1="180.00" y2="180.00" stroke="#fff" stroke-width="0.75"/><text x="1150.9" y="182.10" text-anchor="end" font-size="6.2" fill="#4a4a4a">20000</text><line x1="1164.50" x2="1164.50" y1="160.4" y2="288.5" stroke="#fff" stroke-width="0.75"/><text x="1164.50" y="298.8" text-anchor="middle" font-size="6.2" fill="#4a4a4a">0</text><line x1="1191.25" x2="1191.25" y1="160.4" y2="288.5" stroke="#fff" stroke-width="0.75"/><text x="1191.25" y="298.8" text-anchor="middle" font-size="6.2" fill="#4a4a4a">1</text><line x1="1218.00" x2="1218.00" y1="160.4" y2="288.5" stroke="#fff" stroke-width="0.75"/><text x="1218.00" y="298.8" text-anchor="middle" font-size="6.2" fill="#4a4a4a">2</text><line x1="1244.75" x2="1244.75" y1="160.4" y2="288.5" stroke="#fff" stroke-width="0.75"/><text x="1244.75" y="298.8" text-anchor="middle" font-size="6.2" fill="#4a4a4a">3</text><line x1="1271.50" x2="1271.50" y1="160.4" y2="288.5" stroke="#fff" stroke-width="0.75"/><text x="1271.50" y="298.8" text-anchor="middle" font-size="6.2" fill="#4a4a4a">4</text><line x1="1298.25" x2="1298.25" y1="160.4" y2="288.5" stroke="#fff" stroke-width="0.75"/><text x="1298.25" y="298.8" text-anchor="middle" font-size="6.2" fill="#4a4a4a">5</text><line x1="1325.00" x2="1325.00" y1="160.4" y2="288.5" stroke="#fff" stroke-width="0.75"/><text x="1325.00" y="298.8" text-anchor="middle" font-size="6.2" fill="#4a4a4a">6</text><rect x="1164.10" y="165.89" width="2.6" height="122.61" fill="#4c72b0"/><rect x="1190.20" y="274.94" width="2.6" height="13.56" fill="#4c72b0"/><rect x="1216.70" y="286.33" width="2.6" height="2.17" fill="#4c72b0"/><text x="1244.5" y="156.1" text-anchor="middle" font-size="6.4" fill="#333">num_of_prev_attempts</text><rect x="696" y="328" width="176.39999999999998" height="128" fill="#eaeaf2"/><line x1="696" x2="872.4" y1="456.00" y2="456.00" stroke="#fff" stroke-width="0.75"/><text x="690.5" y="458.10" text-anchor="end" font-size="6.2" fill="#4a4a4a">0</text><line x1="696" x2="872.4" y1="437.71" y2="437.71" stroke="#fff" stroke-width="0.75"/><text x="690.5" y="439.81" text-anchor="end" font-size="6.2" fill="#4a4a4a">2000</text><line x1="696" x2="872.4" y1="419.43" y2="419.43" stroke="#fff" stroke-width="0.75"/><text x="690.5" y="421.53" text-anchor="end" font-size="6.2" fill="#4a4a4a">4000</text><line x1="696" x2="872.4" y1="401.14" y2="401.14" stroke="#fff" stroke-width="0.75"/><text x="690.5" y="403.24" text-anchor="end" font-size="6.2" fill="#4a4a4a">6000</text><line x1="696" x2="872.4" y1="382.86" y2="382.86" stroke="#fff" stroke-width="0.75"/><text x="690.5" y="384.96" text-anchor="end" font-size="6.2" fill="#4a4a4a">8000</text><line x1="696" x2="872.4" y1="364.57" y2="364.57" stroke="#fff" stroke-width="0.75"/><text x="690.5" y="366.67" text-anchor="end" font-size="6.2" fill="#4a4a4a">10000</text><line x1="696" x2="872.4" y1="346.28" y2="346.28" stroke="#fff" stroke-width="0.75"/><text x="690.5" y="348.38" text-anchor="end" font-size="6.2" fill="#4a4a4a">12000</text><text x="690.5" y="330.10" text-anchor="end" font-size="6.2" fill="#4a4a4a">14000</text><line x1="725.40" x2="725.40" y1="328" y2="456" stroke="#fff" stroke-width="0.75"/><text x="725.40" y="466.3" text-anchor="middle" font-size="6.2" fill="#4a4a4a">100</text><line x1="757.00" x2="757.00" y1="328" y2="456" stroke="#fff" stroke-width="0.75"/><text x="757.00" y="466.3" text-anchor="middle" font-size="6.2" fill="#4a4a4a">200</text><line x1="788.60" x2="788.60" y1="328" y2="456" stroke="#fff" stroke-width="0.75"/><text x="788.60" y="466.3" text-anchor="middle" font-size="6.2" fill="#4a4a4a">300</text><line x1="820.20" x2="820.20" y1="328" y2="456" stroke="#fff" stroke-width="0.75"/><text x="820.20" y="466.3" text-anchor="middle" font-size="6.2" fill="#4a4a4a">400</text><line x1="851.80" x2="851.80" y1="328" y2="456" stroke="#fff" stroke-width="0.75"/><text x="851.80" y="466.3" text-anchor="middle" font-size="6.2" fill="#4a4a4a">500</text><rect x="704.40" y="428.57" width="2.4" height="27.43" fill="#4c72b0"/><rect x="711.00" y="334.40" width="2.4" height="121.60" fill="#4c72b0"/><rect x="720.60" y="433.14" width="2.4" height="22.86" fill="#4c72b0"/><rect x="730.20" y="410.28" width="2.4" height="45.72" fill="#4c72b0"/><rect x="739.40" y="451.43" width="2.4" height="4.57" fill="#4c72b0"/><rect x="749.20" y="450.51" width="2.4" height="5.49" fill="#4c72b0"/><rect x="758.80" y="455.54" width="2.4" height="0.46" fill="#4c72b0"/><rect x="768.80" y="454.63" width="2.4" height="1.37" fill="#4c72b0"/><rect x="778.80" y="455.82" width="2.4" height="0.18" fill="#4c72b0"/><text x="784.2" y="323.7" text-anchor="middle" font-size="6.4" fill="#333">studied_credits</text><rect x="927" y="328" width="175.5" height="128" fill="#eaeaf2"/><line x1="927" x2="1102.5" y1="456.00" y2="456.00" stroke="#fff" stroke-width="0.75"/><text x="921.5" y="458.10" text-anchor="end" font-size="6.2" fill="#4a4a4a">0</text><line x1="927" x2="1102.5" y1="431.72" y2="431.72" stroke="#fff" stroke-width="0.75"/><text x="921.5" y="433.82" text-anchor="end" font-size="6.2" fill="#4a4a4a">2000</text><line x1="927" x2="1102.5" y1="407.44" y2="407.44" stroke="#fff" stroke-width="0.75"/><text x="921.5" y="409.54" text-anchor="end" font-size="6.2" fill="#4a4a4a">4000</text><line x1="927" x2="1102.5" y1="383.16" y2="383.16" stroke="#fff" stroke-width="0.75"/><text x="921.5" y="385.26" text-anchor="end" font-size="6.2" fill="#4a4a4a">6000</text><line x1="927" x2="1102.5" y1="358.88" y2="358.88" stroke="#fff" stroke-width="0.75"/><text x="921.5" y="360.98" text-anchor="end" font-size="6.2" fill="#4a4a4a">8000</text><line x1="927" x2="1102.5" y1="334.60" y2="334.60" stroke="#fff" stroke-width="0.75"/><text x="921.5" y="336.70" text-anchor="end" font-size="6.2" fill="#4a4a4a">10000</text><line x1="933.60" x2="933.60" y1="328" y2="456" stroke="#fff" stroke-width="0.75"/><text x="933.60" y="466.3" text-anchor="middle" font-size="6.2" fill="#4a4a4a">0</text><line x1="967.00" x2="967.00" y1="328" y2="456" stroke="#fff" stroke-width="0.75"/><text x="967.00" y="466.3" text-anchor="middle" font-size="6.2" fill="#4a4a4a">5000</text><line x1="1000.40" x2="1000.40" y1="328" y2="456" stroke="#fff" stroke-width="0.75"/><text x="1000.40" y="466.3" text-anchor="middle" font-size="6.2" fill="#4a4a4a">10000</text><line x1="1033.80" x2="1033.80" y1="328" y2="456" stroke="#fff" stroke-width="0.75"/><text x="1033.80" y="466.3" text-anchor="middle" font-size="6.2" fill="#4a4a4a">15000</text><line x1="1067.20" x2="1067.20" y1="328" y2="456" stroke="#fff" stroke-width="0.75"/><text x="1067.20" y="466.3" text-anchor="middle" font-size="6.2" fill="#4a4a4a">20000</text><line x1="1100.60" x2="1100.60" y1="328" y2="456" stroke="#fff" stroke-width="0.75"/><text x="1100.60" y="466.3" text-anchor="middle" font-size="6.2" fill="#4a4a4a">25000</text><rect x="933.90" y="333.99" width="2.8" height="122.01" fill="#4c72b0"/><rect x="937.24" y="395.30" width="2.8" height="60.70" fill="#4c72b0"/><rect x="940.58" y="419.58" width="2.8" height="36.42" fill="#4c72b0"/><rect x="943.92" y="432.93" width="2.8" height="23.07" fill="#4c72b0"/><rect x="947.26" y="439.61" width="2.8" height="16.39" fill="#4c72b0"/><rect x="950.60" y="443.86" width="2.8" height="12.14" fill="#4c72b0"/><rect x="953.94" y="447.50" width="2.8" height="8.50" fill="#4c72b0"/><rect x="957.28" y="449.32" width="2.8" height="6.68" fill="#4c72b0"/><rect x="960.62" y="451.39" width="2.8" height="4.61" fill="#4c72b0"/><rect x="963.96" y="451.75" width="2.8" height="4.25" fill="#4c72b0"/><rect x="967.30" y="452.96" width="2.8" height="3.04" fill="#4c72b0"/><rect x="970.64" y="454.18" width="2.8" height="1.82" fill="#4c72b0"/><rect x="973.98" y="454.42" width="2.8" height="1.58" fill="#4c72b0"/><rect x="977.32" y="455.03" width="2.8" height="0.97" fill="#4c72b0"/><rect x="980.66" y="455.39" width="2.8" height="0.61" fill="#4c72b0"/><rect x="984.00" y="455.64" width="2.8" height="0.36" fill="#4c72b0"/><rect x="987.34" y="455.76" width="2.8" height="0.24" fill="#4c72b0"/><rect x="990.68" y="455.88" width="2.8" height="0.12" fill="#4c72b0"/><text x="1014.8" y="323.7" text-anchor="middle" font-size="6.4" fill="#333">total_click</text><rect x="1156.4" y="327.7" width="176.29999999999995" height="127.80000000000001" fill="#eaeaf2"/><line x1="1156.4" x2="1332.7" y1="455.50" y2="455.50" stroke="#fff" stroke-width="0.75"/><text x="1150.9" y="457.60" text-anchor="end" font-size="6.2" fill="#4a4a4a">0</text><line x1="1156.4" x2="1332.7" y1="434.75" y2="434.75" stroke="#fff" stroke-width="0.75"/><text x="1150.9" y="436.85" text-anchor="end" font-size="6.2" fill="#4a4a4a">200</text><line x1="1156.4" x2="1332.7" y1="414.00" y2="414.00" stroke="#fff" stroke-width="0.75"/><text x="1150.9" y="416.10" text-anchor="end" font-size="6.2" fill="#4a4a4a">400</text><line x1="1156.4" x2="1332.7" y1="393.25" y2="393.25" stroke="#fff" stroke-width="0.75"/><text x="1150.9" y="395.35" text-anchor="end" font-size="6.2" fill="#4a4a4a">600</text><line x1="1156.4" x2="1332.7" y1="372.50" y2="372.50" stroke="#fff" stroke-width="0.75"/><text x="1150.9" y="374.60" text-anchor="end" font-size="6.2" fill="#4a4a4a">800</text><line x1="1156.4" x2="1332.7" y1="351.75" y2="351.75" stroke="#fff" stroke-width="0.75"/><text x="1150.9" y="353.85" text-anchor="end" font-size="6.2" fill="#4a4a4a">1000</text><line x1="1156.4" x2="1332.7" y1="331.00" y2="331.00" stroke="#fff" stroke-width="0.75"/><text x="1150.9" y="333.10" text-anchor="end" font-size="6.2" fill="#4a4a4a">1200</text><line x1="1164.50" x2="1164.50" y1="327.7" y2="455.5" stroke="#fff" stroke-width="0.75"/><text x="1164.50" y="465.8" text-anchor="middle" font-size="6.2" fill="#4a4a4a">0</text><line x1="1196.50" x2="1196.50" y1="327.7" y2="455.5" stroke="#fff" stroke-width="0.75"/><text x="1196.50" y="465.8" text-anchor="middle" font-size="6.2" fill="#4a4a4a">20</text><line x1="1228.50" x2="1228.50" y1="327.7" y2="455.5" stroke="#fff" stroke-width="0.75"/><text x="1228.50" y="465.8" text-anchor="middle" font-size="6.2" fill="#4a4a4a">40</text><line x1="1260.50" x2="1260.50" y1="327.7" y2="455.5" stroke="#fff" stroke-width="0.75"/><text x="1260.50" y="465.8" text-anchor="middle" font-size="6.2" fill="#4a4a4a">60</text><line x1="1292.50" x2="1292.50" y1="327.7" y2="455.5" stroke="#fff" stroke-width="0.75"/><text x="1292.50" y="465.8" text-anchor="middle" font-size="6.2" fill="#4a4a4a">80</text><line x1="1324.50" x2="1324.50" y1="327.7" y2="455.5" stroke="#fff" stroke-width="0.75"/><text x="1324.50" y="465.8" text-anchor="middle" font-size="6.2" fill="#4a4a4a">100</text><rect x="1164.80" y="335.15" width="2.6" height="120.35" fill="#4c72b0"/><rect x="1168.00" y="365.24" width="2.6" height="90.26" fill="#4c72b0"/><rect x="1171.20" y="401.55" width="2.6" height="53.95" fill="#4c72b0"/><rect x="1174.40" y="399.48" width="2.6" height="56.02" fill="#4c72b0"/><rect x="1177.60" y="392.21" width="2.6" height="63.29" fill="#4c72b0"/><rect x="1180.80" y="407.77" width="2.6" height="47.73" fill="#4c72b0"/><rect x="1184.00" y="417.11" width="2.6" height="38.39" fill="#4c72b0"/><rect x="1187.20" y="406.74" width="2.6" height="48.76" fill="#4c72b0"/><rect x="1190.40" y="396.88" width="2.6" height="58.62" fill="#4c72b0"/><rect x="1193.60" y="403.11" width="2.6" height="52.39" fill="#4c72b0"/><rect x="1196.80" y="418.15" width="2.6" height="37.35" fill="#4c72b0"/><rect x="1200.00" y="426.97" width="2.6" height="28.53" fill="#4c72b0"/><rect x="1203.20" y="440.98" width="2.6" height="14.52" fill="#4c72b0"/><rect x="1206.40" y="436.82" width="2.6" height="18.68" fill="#4c72b0"/><rect x="1209.60" y="441.49" width="2.6" height="14.01" fill="#4c72b0"/><rect x="1212.80" y="432.68" width="2.6" height="22.82" fill="#4c72b0"/><rect x="1216.00" y="434.75" width="2.6" height="20.75" fill="#4c72b0"/><rect x="1219.20" y="434.75" width="2.6" height="20.75" fill="#4c72b0"/><rect x="1222.40" y="431.12" width="2.6" height="24.38" fill="#4c72b0"/><rect x="1225.60" y="428.52" width="2.6" height="26.98" fill="#4c72b0"/><rect x="1228.80" y="424.38" width="2.6" height="31.12" fill="#4c72b0"/><rect x="1232.00" y="421.78" width="2.6" height="33.72" fill="#4c72b0"/><rect x="1235.20" y="420.23" width="2.6" height="35.27" fill="#4c72b0"/><rect x="1238.40" y="414.00" width="2.6" height="41.50" fill="#4c72b0"/><rect x="1241.60" y="417.11" width="2.6" height="38.39" fill="#4c72b0"/><rect x="1244.80" y="407.77" width="2.6" height="47.73" fill="#4c72b0"/><rect x="1248.00" y="406.74" width="2.6" height="48.76" fill="#4c72b0"/><rect x="1251.20" y="400.51" width="2.6" height="54.99" fill="#4c72b0"/><rect x="1254.40" y="395.84" width="2.6" height="59.66" fill="#4c72b0"/><rect x="1257.60" y="391.18" width="2.6" height="64.32" fill="#4c72b0"/><rect x="1260.80" y="391.18" width="2.6" height="64.32" fill="#4c72b0"/><rect x="1264.00" y="385.99" width="2.6" height="69.51" fill="#4c72b0"/><rect x="1267.20" y="385.47" width="2.6" height="70.03" fill="#4c72b0"/><rect x="1270.40" y="382.88" width="2.6" height="72.62" fill="#4c72b0"/><rect x="1273.60" y="371.46" width="2.6" height="84.04" fill="#4c72b0"/><rect x="1276.80" y="369.91" width="2.6" height="85.59" fill="#4c72b0"/><rect x="1280.00" y="367.83" width="2.6" height="87.67" fill="#4c72b0"/><rect x="1283.20" y="368.35" width="2.6" height="87.15" fill="#4c72b0"/><rect x="1286.40" y="369.39" width="2.6" height="86.11" fill="#4c72b0"/><rect x="1289.60" y="366.27" width="2.6" height="89.23" fill="#4c72b0"/><rect x="1292.80" y="365.24" width="2.6" height="90.26" fill="#4c72b0"/><rect x="1296.00" y="370.43" width="2.6" height="85.07" fill="#4c72b0"/><rect x="1299.20" y="375.09" width="2.6" height="80.41" fill="#4c72b0"/><rect x="1302.40" y="380.28" width="2.6" height="75.22" fill="#4c72b0"/><rect x="1305.60" y="385.47" width="2.6" height="70.03" fill="#4c72b0"/><rect x="1308.80" y="398.96" width="2.6" height="56.54" fill="#4c72b0"/><rect x="1312.00" y="408.81" width="2.6" height="46.69" fill="#4c72b0"/><rect x="1315.20" y="426.45" width="2.6" height="29.05" fill="#4c72b0"/><rect x="1318.40" y="437.86" width="2.6" height="17.64" fill="#4c72b0"/><rect x="1321.60" y="449.27" width="2.6" height="6.23" fill="#4c72b0"/><text x="1244.6" y="323.4" text-anchor="middle" font-size="6.4" fill="#333">weighted_score</text><rect x="696" y="495" width="176.39999999999998" height="129.5" fill="#eaeaf2"/><line x1="696" x2="872.4" y1="624.50" y2="624.50" stroke="#fff" stroke-width="0.75"/><text x="690.5" y="626.60" text-anchor="end" font-size="6.2" fill="#4a4a4a">0</text><line x1="696" x2="872.4" y1="601.00" y2="601.00" stroke="#fff" stroke-width="0.75"/><text x="690.5" y="603.10" text-anchor="end" font-size="6.2" fill="#4a4a4a">2000</text><line x1="696" x2="872.4" y1="577.50" y2="577.50" stroke="#fff" stroke-width="0.75"/><text x="690.5" y="579.60" text-anchor="end" font-size="6.2" fill="#4a4a4a">4000</text><line x1="696" x2="872.4" y1="554.00" y2="554.00" stroke="#fff" stroke-width="0.75"/><text x="690.5" y="556.10" text-anchor="end" font-size="6.2" fill="#4a4a4a">6000</text><line x1="696" x2="872.4" y1="530.50" y2="530.50" stroke="#fff" stroke-width="0.75"/><text x="690.5" y="532.60" text-anchor="end" font-size="6.2" fill="#4a4a4a">8000</text><line x1="696" x2="872.4" y1="507.00" y2="507.00" stroke="#fff" stroke-width="0.75"/><text x="690.5" y="509.10" text-anchor="end" font-size="6.2" fill="#4a4a4a">10000</text><line x1="703.50" x2="703.50" y1="495" y2="624.5" stroke="#fff" stroke-width="0.75"/><text x="703.50" y="634.8" text-anchor="middle" font-size="6.2" fill="#4a4a4a">0.0</text><line x1="735.80" x2="735.80" y1="495" y2="624.5" stroke="#fff" stroke-width="0.75"/><text x="735.80" y="634.8" text-anchor="middle" font-size="6.2" fill="#4a4a4a">0.2</text><line x1="768.10" x2="768.10" y1="495" y2="624.5" stroke="#fff" stroke-width="0.75"/><text x="768.10" y="634.8" text-anchor="middle" font-size="6.2" fill="#4a4a4a">0.4</text><line x1="800.40" x2="800.40" y1="495" y2="624.5" stroke="#fff" stroke-width="0.75"/><text x="800.40" y="634.8" text-anchor="middle" font-size="6.2" fill="#4a4a4a">0.6</text><line x1="832.70" x2="832.70" y1="495" y2="624.5" stroke="#fff" stroke-width="0.75"/><text x="832.70" y="634.8" text-anchor="middle" font-size="6.2" fill="#4a4a4a">0.8</text><line x1="865.00" x2="865.00" y1="495" y2="624.5" stroke="#fff" stroke-width="0.75"/><text x="865.00" y="634.8" text-anchor="middle" font-size="6.2" fill="#4a4a4a">1.0</text><rect x="704.00" y="501.71" width="2.0" height="122.79" fill="#4c72b0"/><rect x="717.50" y="615.10" width="2.0" height="9.40" fill="#4c72b0"/><rect x="720.00" y="622.15" width="2.0" height="2.35" fill="#4c72b0"/><rect x="726.50" y="619.21" width="2.0" height="5.29" fill="#4c72b0"/><rect x="730.00" y="619.21" width="2.0" height="5.29" fill="#4c72b0"/><rect x="736.60" y="618.62" width="2.0" height="5.88" fill="#4c72b0"/><rect x="743.00" y="616.27" width="2.0" height="8.23" fill="#4c72b0"/><rect x="749.00" y="622.74" width="2.0" height="1.76" fill="#4c72b0"/><rect x="756.00" y="616.27" width="2.0" height="8.23" fill="#4c72b0"/><rect x="769.00" y="619.80" width="2.0" height="4.70" fill="#4c72b0"/><rect x="772.00" y="623.33" width="2.0" height="1.17" fill="#4c72b0"/><rect x="775.00" y="602.17" width="2.0" height="22.33" fill="#4c72b0"/><rect x="785.00" y="602.76" width="2.0" height="21.74" fill="#4c72b0"/><rect x="791.50" y="616.86" width="2.0" height="7.64" fill="#4c72b0"/><rect x="795.00" y="622.74" width="2.0" height="1.76" fill="#4c72b0"/><rect x="800.00" y="619.21" width="2.0" height="5.29" fill="#4c72b0"/><rect x="804.00" y="620.98" width="2.0" height="3.52" fill="#4c72b0"/><rect x="810.50" y="615.69" width="2.0" height="8.81" fill="#4c72b0"/><rect x="814.00" y="623.33" width="2.0" height="1.17" fill="#4c72b0"/><rect x="823.00" y="620.98" width="2.0" height="3.52" fill="#4c72b0"/><rect x="833.00" y="619.21" width="2.0" height="5.29" fill="#4c72b0"/><rect x="863.00" y="604.52" width="2.0" height="19.98" fill="#4c72b0"/><text x="784.2" y="490.7" text-anchor="middle" font-size="6.4" fill="#333">late_rate</text><rect x="927" y="495" width="175.5" height="129" fill="#eaeaf2"/><line x1="927" x2="1102.5" y1="624.00" y2="624.00" stroke="#fff" stroke-width="0.75"/><text x="921.5" y="626.10" text-anchor="end" font-size="6.2" fill="#4a4a4a">0</text><line x1="927" x2="1102.5" y1="609.19" y2="609.19" stroke="#fff" stroke-width="0.75"/><text x="921.5" y="611.29" text-anchor="end" font-size="6.2" fill="#4a4a4a">2500</text><line x1="927" x2="1102.5" y1="594.38" y2="594.38" stroke="#fff" stroke-width="0.75"/><text x="921.5" y="596.48" text-anchor="end" font-size="6.2" fill="#4a4a4a">5000</text><line x1="927" x2="1102.5" y1="579.56" y2="579.56" stroke="#fff" stroke-width="0.75"/><text x="921.5" y="581.66" text-anchor="end" font-size="6.2" fill="#4a4a4a">7500</text><line x1="927" x2="1102.5" y1="564.75" y2="564.75" stroke="#fff" stroke-width="0.75"/><text x="921.5" y="566.85" text-anchor="end" font-size="6.2" fill="#4a4a4a">10000</text><line x1="927" x2="1102.5" y1="549.94" y2="549.94" stroke="#fff" stroke-width="0.75"/><text x="921.5" y="552.04" text-anchor="end" font-size="6.2" fill="#4a4a4a">12500</text><line x1="927" x2="1102.5" y1="535.12" y2="535.12" stroke="#fff" stroke-width="0.75"/><text x="921.5" y="537.23" text-anchor="end" font-size="6.2" fill="#4a4a4a">15000</text><line x1="927" x2="1102.5" y1="520.31" y2="520.31" stroke="#fff" stroke-width="0.75"/><text x="921.5" y="522.41" text-anchor="end" font-size="6.2" fill="#4a4a4a">17500</text><line x1="927" x2="1102.5" y1="505.50" y2="505.50" stroke="#fff" stroke-width="0.75"/><text x="921.5" y="507.60" text-anchor="end" font-size="6.2" fill="#4a4a4a">20000</text><line x1="933.60" x2="933.60" y1="495" y2="624" stroke="#fff" stroke-width="0.75"/><text x="933.60" y="634.3" text-anchor="middle" font-size="6.2" fill="#4a4a4a">0.0</text><line x1="965.78" x2="965.78" y1="495" y2="624" stroke="#fff" stroke-width="0.75"/><text x="965.78" y="634.3" text-anchor="middle" font-size="6.2" fill="#4a4a4a">0.2</text><line x1="997.96" x2="997.96" y1="495" y2="624" stroke="#fff" stroke-width="0.75"/><text x="997.96" y="634.3" text-anchor="middle" font-size="6.2" fill="#4a4a4a">0.4</text><line x1="1030.14" x2="1030.14" y1="495" y2="624" stroke="#fff" stroke-width="0.75"/><text x="1030.14" y="634.3" text-anchor="middle" font-size="6.2" fill="#4a4a4a">0.6</text><line x1="1062.32" x2="1062.32" y1="495" y2="624" stroke="#fff" stroke-width="0.75"/><text x="1062.32" y="634.3" text-anchor="middle" font-size="6.2" fill="#4a4a4a">0.8</text><line x1="1094.50" x2="1094.50" y1="495" y2="624" stroke="#fff" stroke-width="0.75"/><text x="1094.50" y="634.3" text-anchor="middle" font-size="6.2" fill="#4a4a4a">1.0</text><rect x="934.60" y="501.35" width="2.0" height="122.65" fill="#4c72b0"/><rect x="945.47" y="621.63" width="2.0" height="2.37" fill="#4c72b0"/><rect x="948.69" y="622.22" width="2.0" height="1.78" fill="#4c72b0"/><rect x="956.74" y="622.22" width="2.0" height="1.78" fill="#4c72b0"/><rect x="959.95" y="623.11" width="2.0" height="0.89" fill="#4c72b0"/><rect x="964.78" y="620.74" width="2.0" height="3.26" fill="#4c72b0"/><rect x="972.83" y="622.22" width="2.0" height="1.78" fill="#4c72b0"/><rect x="980.87" y="623.11" width="2.0" height="0.89" fill="#4c72b0"/><rect x="985.70" y="622.52" width="2.0" height="1.48" fill="#4c72b0"/><rect x="1013.05" y="622.22" width="2.0" height="1.78" fill="#4c72b0"/><rect x="1093.50" y="621.33" width="2.0" height="2.67" fill="#4c72b0"/><text x="1014.8" y="490.7" text-anchor="middle" font-size="6.4" fill="#333">fail_rate</text></g><rect x="1357" y="582" width="126" height="91.79999999999995" fill="#fff"/><rect x="1399.8" y="587.8" width="4.60" height="53.28" fill="#e3e8f2"/><rect x="1404.40" y="587.80" width="9.90" height="6.96" fill="#c4232e"/><rect x="1407.95" y="590.53" width="2.5" height="1.3" fill="#f4f4f4" opacity="0.75"/><rect x="1414.00" y="587.80" width="9.90" height="6.96" fill="#7ea2f0"/><rect x="1416.05" y="590.53" width="5.5" height="1.3" fill="#2a2a3a" opacity="0.35"/><rect x="1423.60" y="587.80" width="9.90" height="6.96" fill="#7ea2f0"/><rect x="1425.65" y="590.53" width="5.5" height="1.3" fill="#2a2a3a" opacity="0.35"/><rect x="1433.20" y="587.80" width="9.90" height="6.96" fill="#a3bdf4"/><rect x="1435.25" y="590.53" width="5.5" height="1.3" fill="#2a2a3a" opacity="0.35"/><rect x="1442.80" y="587.80" width="9.90" height="6.96" fill="#7ea2f0"/><rect x="1444.85" y="590.53" width="5.5" height="1.3" fill="#2a2a3a" opacity="0.35"/><rect x="1452.40" y="587.80" width="9.90" height="6.96" fill="#7ea2f0"/><rect x="1454.45" y="590.53" width="5.5" height="1.3" fill="#2a2a3a" opacity="0.35"/><rect x="1462.00" y="587.80" width="5.10" height="6.96" fill="#7ea2f0"/><rect x="1374.80" y="590.63" width="22.00" height="1" fill="#666" opacity="0.75"/><rect x="1404.40" y="594.46" width="9.90" height="6.96" fill="#7ea2f0"/><rect x="1406.45" y="597.19" width="5.5" height="1.3" fill="#2a2a3a" opacity="0.35"/><rect x="1414.00" y="594.46" width="9.90" height="6.96" fill="#c4232e"/><rect x="1417.55" y="597.19" width="2.5" height="1.3" fill="#f4f4f4" opacity="0.75"/><rect x="1423.60" y="594.46" width="9.90" height="6.96" fill="#a3bdf4"/><rect x="1425.65" y="597.19" width="5.5" height="1.3" fill="#2a2a3a" opacity="0.35"/><rect x="1433.20" y="594.46" width="9.90" height="6.96" fill="#7ea2f0"/><rect x="1435.25" y="597.19" width="5.5" height="1.3" fill="#2a2a3a" opacity="0.35"/><rect x="1442.80" y="594.46" width="9.90" height="6.96" fill="#7ea2f0"/><rect x="1444.85" y="597.19" width="5.5" height="1.3" fill="#2a2a3a" opacity="0.35"/><rect x="1452.40" y="594.46" width="9.90" height="6.96" fill="#7ea2f0"/><rect x="1454.45" y="597.19" width="5.5" height="1.3" fill="#2a2a3a" opacity="0.35"/><rect x="1462.00" y="594.46" width="5.10" height="6.96" fill="#7ea2f0"/><rect x="1358.80" y="597.29" width="38.00" height="1" fill="#666" opacity="0.75"/><rect x="1404.40" y="601.12" width="9.90" height="6.96" fill="#7ea2f0"/><rect x="1406.45" y="603.85" width="5.5" height="1.3" fill="#2a2a3a" opacity="0.35"/><rect x="1414.00" y="601.12" width="9.90" height="6.96" fill="#a3bdf4"/><rect x="1416.05" y="603.85" width="5.5" height="1.3" fill="#2a2a3a" opacity="0.35"/><rect x="1423.60" y="601.12" width="9.90" height="6.96" fill="#c4232e"/><rect x="1427.15" y="603.85" width="2.5" height="1.3" fill="#f4f4f4" opacity="0.75"/><rect x="1433.20" y="601.12" width="9.90" height="6.96" fill="#c4d4ee"/><rect x="1435.25" y="603.85" width="5.5" height="1.3" fill="#2a2a3a" opacity="0.35"/><rect x="1442.80" y="601.12" width="9.90" height="6.96" fill="#7ea2f0"/><rect x="1444.85" y="603.85" width="5.5" height="1.3" fill="#2a2a3a" opacity="0.35"/><rect x="1452.40" y="601.12" width="9.90" height="6.96" fill="#a3bdf4"/><rect x="1454.45" y="603.85" width="5.5" height="1.3" fill="#2a2a3a" opacity="0.35"/><rect x="1462.00" y="601.12" width="5.10" height="6.96" fill="#7ea2f0"/><rect x="1364.80" y="603.95" width="32.00" height="1" fill="#666" opacity="0.75"/><rect x="1404.40" y="607.78" width="9.90" height="6.96" fill="#a3bdf4"/><rect x="1406.45" y="610.51" width="5.5" height="1.3" fill="#2a2a3a" opacity="0.35"/><rect x="1414.00" y="607.78" width="9.90" height="6.96" fill="#7ea2f0"/><rect x="1416.05" y="610.51" width="5.5" height="1.3" fill="#2a2a3a" opacity="0.35"/><rect x="1423.60" y="607.78" width="9.90" height="6.96" fill="#c4d4ee"/><rect x="1425.65" y="610.51" width="5.5" height="1.3" fill="#2a2a3a" opacity="0.35"/><rect x="1433.20" y="607.78" width="9.90" height="6.96" fill="#c4232e"/><rect x="1436.75" y="610.51" width="2.5" height="1.3" fill="#f4f4f4" opacity="0.75"/><rect x="1442.80" y="607.78" width="9.90" height="6.96" fill="#7ea2f0"/><rect x="1444.85" y="610.51" width="5.5" height="1.3" fill="#2a2a3a" opacity="0.35"/><rect x="1452.40" y="607.78" width="9.90" height="6.96" fill="#a3bdf4"/><rect x="1454.45" y="610.51" width="5.5" height="1.3" fill="#2a2a3a" opacity="0.35"/><rect x="1462.00" y="607.78" width="5.10" height="6.96" fill="#7ea2f0"/><rect x="1374.80" y="610.61" width="22.00" height="1" fill="#666" opacity="0.75"/><rect x="1404.40" y="614.44" width="9.90" height="6.96" fill="#7ea2f0"/><rect x="1406.45" y="617.17" width="5.5" height="1.3" fill="#2a2a3a" opacity="0.35"/><rect x="1414.00" y="614.44" width="9.90" height="6.96" fill="#7ea2f0"/><rect x="1416.05" y="617.17" width="5.5" height="1.3" fill="#2a2a3a" opacity="0.35"/><rect x="1423.60" y="614.44" width="9.90" height="6.96" fill="#7ea2f0"/><rect x="1425.65" y="617.17" width="5.5" height="1.3" fill="#2a2a3a" opacity="0.35"/><rect x="1433.20" y="614.44" width="9.90" height="6.96" fill="#7ea2f0"/><rect x="1435.25" y="617.17" width="5.5" height="1.3" fill="#2a2a3a" opacity="0.35"/><rect x="1442.80" y="614.44" width="9.90" height="6.96" fill="#c4232e"/><rect x="1446.35" y="617.17" width="2.5" height="1.3" fill="#f4f4f4" opacity="0.75"/><rect x="1452.40" y="614.44" width="9.90" height="6.96" fill="#f0c8b4"/><rect x="1454.45" y="617.17" width="5.5" height="1.3" fill="#2a2a3a" opacity="0.35"/><rect x="1462.00" y="614.44" width="5.10" height="6.96" fill="#6284e4"/><rect x="1381.80" y="617.27" width="15.00" height="1" fill="#666" opacity="0.75"/><rect x="1404.40" y="621.10" width="9.90" height="6.96" fill="#7ea2f0"/><rect x="1406.45" y="623.83" width="5.5" height="1.3" fill="#2a2a3a" opacity="0.35"/><rect x="1414.00" y="621.10" width="9.90" height="6.96" fill="#7ea2f0"/><rect x="1416.05" y="623.83" width="5.5" height="1.3" fill="#2a2a3a" opacity="0.35"/><rect x="1423.60" y="621.10" width="9.90" height="6.96" fill="#a3bdf4"/><rect x="1425.65" y="623.83" width="5.5" height="1.3" fill="#2a2a3a" opacity="0.35"/><rect x="1433.20" y="621.10" width="9.90" height="6.96" fill="#a3bdf4"/><rect x="1435.25" y="623.83" width="5.5" height="1.3" fill="#2a2a3a" opacity="0.35"/><rect x="1442.80" y="621.10" width="9.90" height="6.96" fill="#f0c8b4"/><rect x="1444.85" y="623.83" width="5.5" height="1.3" fill="#2a2a3a" opacity="0.35"/><rect x="1452.40" y="621.10" width="9.90" height="6.96" fill="#c4232e"/><rect x="1455.95" y="623.83" width="2.5" height="1.3" fill="#f4f4f4" opacity="0.75"/><rect x="1462.00" y="621.10" width="5.10" height="6.96" fill="#6284e4"/><rect x="1375.80" y="623.93" width="21.00" height="1" fill="#666" opacity="0.75"/><rect x="1404.40" y="627.76" width="9.90" height="6.96" fill="#7ea2f0"/><rect x="1406.45" y="630.49" width="5.5" height="1.3" fill="#2a2a3a" opacity="0.35"/><rect x="1414.00" y="627.76" width="9.90" height="6.96" fill="#6284e4"/><rect x="1416.05" y="630.49" width="5.5" height="1.3" fill="#f4f4f4" opacity="0.75"/><rect x="1423.60" y="627.76" width="9.90" height="6.96" fill="#7ea2f0"/><rect x="1425.65" y="630.49" width="5.5" height="1.3" fill="#2a2a3a" opacity="0.35"/><rect x="1433.20" y="627.76" width="9.90" height="6.96" fill="#7ea2f0"/><rect x="1435.25" y="630.49" width="5.5" height="1.3" fill="#2a2a3a" opacity="0.35"/><rect x="1442.80" y="627.76" width="9.90" height="6.96" fill="#6284e4"/><rect x="1444.85" y="630.49" width="5.5" height="1.3" fill="#f4f4f4" opacity="0.75"/><rect x="1452.40" y="627.76" width="9.90" height="6.96" fill="#6284e4"/><rect x="1454.45" y="630.49" width="5.5" height="1.3" fill="#f4f4f4" opacity="0.75"/><rect x="1462.00" y="627.76" width="5.10" height="6.96" fill="#c4232e"/><rect x="1386.80" y="630.59" width="10.00" height="1" fill="#666" opacity="0.75"/><rect x="1404.40" y="634.42" width="9.90" height="6.96" fill="#7ea2f0"/><rect x="1406.45" y="637.15" width="5.5" height="1.3" fill="#2a2a3a" opacity="0.35"/><rect x="1414.00" y="634.42" width="9.90" height="6.96" fill="#7ea2f0"/><rect x="1416.05" y="637.15" width="5.5" height="1.3" fill="#2a2a3a" opacity="0.35"/><rect x="1423.60" y="634.42" width="9.90" height="6.96" fill="#7ea2f0"/><rect x="1425.65" y="637.15" width="5.5" height="1.3" fill="#2a2a3a" opacity="0.35"/><rect x="1433.20" y="634.42" width="9.90" height="6.96" fill="#7ea2f0"/><rect x="1435.25" y="637.15" width="5.5" height="1.3" fill="#2a2a3a" opacity="0.35"/><rect x="1442.80" y="634.42" width="9.90" height="6.96" fill="#6284e4"/><rect x="1444.85" y="637.15" width="5.5" height="1.3" fill="#f4f4f4" opacity="0.75"/><rect x="1452.40" y="634.42" width="9.90" height="6.96" fill="#3a4cc2"/><rect x="1454.45" y="637.15" width="5.5" height="1.3" fill="#f4f4f4" opacity="0.75"/><rect x="1462.00" y="634.42" width="5.10" height="6.96" fill="#a3bdf4"/><rect x="1386.80" y="637.25" width="10.00" height="1" fill="#666" opacity="0.75"/><rect x="1471.10" y="587.8" width="2.4" height="53.28" fill="url(#cw)"/><rect x="1474.30" y="588.80" width="5" height="0.9" fill="#777" opacity="0.6"/><rect x="1474.30" y="596.10" width="5" height="0.9" fill="#777" opacity="0.6"/><rect x="1474.30" y="603.40" width="5" height="0.9" fill="#777" opacity="0.6"/><rect x="1474.30" y="610.70" width="5" height="0.9" fill="#777" opacity="0.6"/><rect x="1474.30" y="618.00" width="5" height="0.9" fill="#777" opacity="0.6"/><rect x="1474.30" y="625.30" width="5" height="0.9" fill="#777" opacity="0.6"/><rect x="1474.30" y="632.60" width="5" height="0.9" fill="#777" opacity="0.6"/><rect x="1420.3" y="585.2" width="26" height="1.1" fill="#777" opacity="0.7"/><rect x="1408.70" y="644.58" width="1" height="27.0" fill="#666" opacity="0.7"/><rect x="1418.30" y="644.58" width="1" height="28.2" fill="#666" opacity="0.7"/><rect x="1427.90" y="644.58" width="1" height="28.2" fill="#666" opacity="0.7"/><rect x="1437.50" y="644.58" width="1" height="27.0" fill="#666" opacity="0.7"/><rect x="1447.10" y="644.58" width="1" height="16.2" fill="#666" opacity="0.7"/><rect x="1456.70" y="644.58" width="1" height="15.3" fill="#666" opacity="0.7"/><rect x="1466.30" y="644.58" width="1" height="15.3" fill="#666" opacity="0.7"/></svg>
<div style="position:absolute;left:1487px;top:123px;width:9px;height:540px;border:1px solid #2a3740;border-radius:4px;"></div>
<div style="position:absolute;left:1488px;top:180px;width:7px;height:321px;background:#7b7c7d;border-radius:3px;"></div>
<svg style="left:1487px;top:117px;" width="9" height="5.3999999999999995" viewBox="0 0 9 5.3999999999999995"><path d="M0 5.3999999999999995L4.5 0L9 5.3999999999999995z" fill="#2f3d46"/></svg>
<svg style="left:1487px;top:666px;" width="9" height="5.3999999999999995" viewBox="0 0 9 5.3999999999999995"><path d="M0 0L4.5 5.3999999999999995L9 0z" fill="#2f3d46"/></svg>
<div style="position:absolute;left:1025px;top:679px;width:82.5px;height:16px;background:#2a3740;border-radius:2px;"></div>
<div class="t" style="left:1028.3px;top:682.25px;font-size:10.1px;color:#d5d8db;">Variable explorer</div>
<div style="position:absolute;left:1109px;top:677px;width:28px;height:20px;background:#3d4c56;border-radius:0 0 2px 2px;border-top:3px solid #2a6fb0;"></div>
<div class="t" style="left:1113px;top:683.87px;font-size:9.6px;">Plots</div>
<div style="position:absolute;left:659px;top:699px;width:841px;height:4px;background:#2a3740;"></div>
<div style="position:absolute;left:659px;top:703px;width:841px;height:74px;background:#18222b;"></div>
<div class="t" style="left:664.2px;top:711.92px;font-size:9.9px;">Source</div>
<div style="position:absolute;left:705px;top:705px;width:79px;height:21px;border:1px solid #2a3740;border-radius:3px;"></div>
<div style="position:absolute;left:773px;top:706px;width:1px;height:19px;background:#2a3740;"></div>
<div class="t" style="left:708.7px;top:712.17px;font-size:9.6px;">Console</div>
<svg style="left:775px;top:714px;" width="8" height="4" viewBox="0 0 8 4"><path d="M1 0.5l3 2.5l3-2.5" fill="none" stroke="#3d4a54" stroke-width="1"/></svg>
<div class="t" style="left:800.8px;top:711.83px;font-size:10px;">Object</div>
<div style="position:absolute;left:839px;top:705px;width:604px;height:21px;border:1px solid #2a3740;border-radius:3px;"></div>
<div style="position:absolute;left:1431px;top:706px;width:1px;height:19px;background:#2a3740;"></div>
<svg style="left:1433px;top:714px;" width="8" height="4" viewBox="0 0 8 4"><path d="M1 0.5l3 2.5l3-2.5" fill="none" stroke="#3d4a54" stroke-width="1"/></svg>
<svg style="left:1453px;top:709px;" width="11" height="12" viewBox="0 0 11 12"><path d="M3 5.5v-2.5a2.8 2.8 0 0 1 5.6 0v0.5" fill="none" stroke="#e8eaec" stroke-width="1.5"/><rect x="0.5" y="5.5" width="10" height="6.5" rx="0.8" fill="#e8eaec"/></svg>
<svg style="left:1481px;top:710px;" width="13" height="11" viewBox="0 0 13 11"><g fill="#e8eaec"><rect x="0" y="0" width="13" height="2.2"/><rect x="0" y="4.2" width="13" height="2.2"/><rect x="0" y="8.4" width="13" height="2.2"/></g></svg>
<div style="position:absolute;left:836px;top:745px;width:477px;height:13px;background:#4a4a4a;border:1.5px solid #2e6da4;border-bottom:none;border-radius:4px 4px 0 0;overflow:hidden;"><div class="t" style="left:11px;top:9px;font-size:12px;color:#eee;">M</div></div>
<div style="position:absolute;left:1490px;top:735px;width:9px;height:22px;border:1px solid #2a3740;border-radius:4px;"></div>
<div style="position:absolute;left:1491px;top:735px;width:7px;height:11px;background:#6b7378;border-radius:3.5px;"></div>
<div style="position:absolute;left:1049px;top:759.5px;width:37px;height:15.5px;background:#2a3740;border-radius:2px;"></div>
<div class="t" style="left:1052.5px;top:763.40px;font-size:9.8px;color:#d5d8db;">History</div>
<div style="position:absolute;left:1088px;top:758px;width:25px;height:19.5px;background:#3d4c56;border-top:3px solid #2a6fb0;"></div>
<div class="t" style="left:1091px;top:764.54px;font-size:9.4px;">Help</div>
<div style="position:absolute;left:0px;top:777px;width:1500px;height:20px;background:#2f3e47;"></div>
<svg style="left:891px;top:783px;" width="9" height="10" viewBox="0 0 9 10"><path d="M2.5 0.5l-2 2l2 2M6.5 0.5l2 2l-2 2" fill="none" stroke="#e8eaec" stroke-width="1"/><path d="M2.5 6.5l2 2.5l4-4" fill="none" stroke="#e8eaec" stroke-width="1.3"/></svg>
<div class="t" style="left:906.8px;top:783.36px;font-size:9.85px;-webkit-text-stroke:0.1px currentColor;color:#d6d9dc;">LSP Python: ready</div>
<svg style="left:1016px;top:782px;" width="10" height="10" viewBox="0 0 10 10"><path d="M5 0.7l4.2 2.2v4.4l-4.2 2.2l-4.2-2.2v-4.4z M0.8 2.9l4.2 2.2l4.2-2.2M5 5.1v4.4" fill="none" stroke="#e8eaec" stroke-width="1.1"/></svg>
<div class="t" style="left:1032px;top:783.24px;font-size:10px;-webkit-text-stroke:0.1px currentColor;color:#d6d9dc;">conda: base (Python 3.8.5)</div>
<div class="t" style="left:1181.3px;top:783.36px;font-size:9.85px;-webkit-text-stroke:0.1px currentColor;color:#d6d9dc;">Line 1163, Col 1</div>
<div class="t" style="left:1281.7px;top:783.66px;font-size:9.5px;-webkit-text-stroke:0.1px currentColor;color:#d6d9dc;">UTF-8</div>
<div class="t" style="left:1336.7px;top:783.91px;font-size:9.2px;-webkit-text-stroke:0.1px currentColor;color:#d6d9dc;">CRLF</div>
<div class="t" style="left:1387.5px;top:783.66px;font-size:9.5px;-webkit-text-stroke:0.1px currentColor;color:#d6d9dc;">RW</div>
<div style="position:absolute;left:1432px;top:761px;width:63px;height:31px;background:#2b2b2b;"></div>
<div style="position:absolute;left:1463px;top:761px;width:1px;height:31px;background:#1e1e1e;"></div>
<div style="position:absolute;left:1441px;top:770px;width:5px;height:15px;background:#a8a8a8;"></div>
<div style="position:absolute;left:1449px;top:770px;width:5.5px;height:15px;background:#a8a8a8;"></div>
<svg style="left:1470px;top:770px;" width="20" height="15" viewBox="0 0 20 15"><rect x="0.7" y="0.7" width="18" height="13.5" fill="none" stroke="#a8a8a8" stroke-width="1.3"/><circle cx="9.7" cy="5.5" r="2.5" fill="#a8a8a8"/><path d="M4 14.5c0.5-4 3-5 5.7-5s5.2 1 5.7 5z" fill="#a8a8a8"/></svg>
<svg style="left:958px;top:687px;" width="12" height="18" viewBox="0 0 12 18"><path d="M0.5 0.5v14l3.5-3.5l2.5 5.5l2-1l-2.5-5.3h5z" fill="#fff" stroke="#000" stroke-width="1"/></svg>
<div style="position:absolute;left:0px;top:797px;width:1500px;height:47px;background:linear-gradient(90deg,#e1edf9 0%,#dfe9f8 35%,#d5e0f6 60%,#d8e3f5 75%,#e1edf8 88%,#e2eef9 100%);border-top:1px solid #b9c4cf;"></div>
<svg style="left:0;top:0" width="1500" height="844" viewBox="0 0 1500 844"><defs><linearGradient id="wl" x1="0" y1="0" x2="1" y2="1"><stop offset="0" stop-color="#4cc2ff"/><stop offset="1" stop-color="#0a6fd6"/></linearGradient></defs><rect x="525" y="809.5" width="10.8" height="10.8" rx="0.8" fill="url(#wl)"/><rect x="536.8" y="809.5" width="10.8" height="10.8" rx="0.8" fill="url(#wl)"/><rect x="525" y="821.3" width="10.8" height="10.8" rx="0.8" fill="url(#wl)"/><rect x="536.8" y="821.3" width="10.8" height="10.8" rx="0.8" fill="url(#wl)"/><circle cx="581" cy="817.5" r="7" fill="none" stroke="#1b1b1b" stroke-width="2.2"/><path d="M575.5 823.5l-5.5 6" stroke="#1b1b1b" stroke-width="2.6" stroke-linecap="round"/><rect x="616.5" y="809.5" width="16.5" height="16" rx="1" fill="#eeeeee"/><rect x="610" y="815.5" width="15" height="15.5" rx="1" fill="#2b2b2b"/><rect x="616.5" y="815.5" width="8.5" height="10" fill="#b8b8b8"/><path d="M652.5 812a1.5 1.5 0 0 1 1.5-1.5h6l2 2h13a1.5 1.5 0 0 1 1.5 1.5v15a1.5 1.5 0 0 1-1.5 1.5h-21a1.5 1.5 0 0 1-1.5-1.5z" fill="#f4c542"/><path d="M652.5 812a1.5 1.5 0 0 1 1.5-1.5h6l2 2h-9.5z" fill="#e0a920"/><rect x="657.5" y="825" width="15" height="6" rx="1.2" fill="#1672d8"/><circle cx="710" cy="820.5" r="11" fill="#e34133"/><path d="M710 820.5l-9.5-5.5a11 11 0 0 0 5 16z" fill="#21a055"/><path d="M710 820.5l4.5 11a11 11 0 0 0 6.5-11z" fill="#fbc02d"/><path d="M710 820.5h11a11 11 0 0 1 -5.5 9.5z" fill="#fbc02d"/><path d="M710 820.5l-4.5 10.5a11 11 0 0 0 10-1z" fill="#21a055" opacity="0"/><circle cx="710" cy="820.5" r="5" fill="#fff"/><circle cx="710" cy="820.5" r="3.8" fill="#3b7de8"/><rect x="713" y="808.5" width="11" height="4.5" rx="1" fill="#7a7a7a"/><rect x="713.5" y="809.5" width="4" height="2.5" fill="#e34133"/><rect x="732" y="801.6" width="37.7" height="37.6" rx="4" fill="#edf3fc"/><rect x="743.3" y="836" width="15" height="3" rx="1.5" fill="#0a6fd6"/><path d="M746 812l10-0.5l4 5l-1.5 8l-7 3l-7-3l-1.5-7z" fill="#363636"/><path d="M751 811.5v16.5M743.5 816l7.5 4l8.5-3.5M745 825l6-5l6.5 5" fill="none" stroke="#e8e8e8" stroke-width="0.9"/><path d="M742.5 819l4.5-1.5l3 3l4-3.5l3 2.5l3-2" fill="none" stroke="#e8160c" stroke-width="2.8" stroke-linejoin="round"/><rect x="781.6" y="810.6" width="24" height="6.4" fill="#c7283a"/><rect x="781.6" y="817" width="24" height="6.4" fill="#3546b8"/><rect x="781.6" y="823.4" width="24" height="6.4" fill="#2d9b3b"/><rect x="790" y="810.6" width="7" height="19.2" fill="#e8a42a"/><rect x="790" y="818.5" width="7" height="4" fill="#fff" opacity=".8"/><rect x="825.6" y="811.4" width="21" height="17" fill="#0a0a0a" stroke="#8a8a8a" stroke-width="0.8"/><rect x="828" y="814" width="8" height="1" fill="#888"/><path d="M869 812h14l4 4v14h-18z" fill="#7dc142"/><path d="M869 812h14l4 4v4h-18z" fill="#e8f3d2"/><path d="M884 822l6-13" stroke="#d9a22a" stroke-width="2"/><circle cx="877" cy="823" r="4" fill="#3a7d1e"/><path d="M912 808h14l6.5 5v17h-20.5z" fill="#e7f1df" stroke="#4f9a56" stroke-width="1"/><rect x="917" y="815" width="5" height="6" fill="#1f6f3a"/><g fill="#2f8c48"><rect x="924" y="815" width="7" height="3"/><rect x="924" y="820" width="7" height="3"/><rect x="918" y="825" width="5" height="3"/><rect x="924" y="825" width="7" height="3"/></g><rect x="953.6" y="808" width="23.2" height="24" rx="2.5" fill="#f0553a"/><path d="M968 814h-7a3 3 0 0 0 0 6h4a3 3 0 0 1 0 6h-7" fill="none" stroke="#fff" stroke-width="2.6"/><circle cx="974.4" cy="812.2" r="7" fill="#e05048" stroke="#8a6a6a" stroke-width="1.2"/><rect x="661" y="836.5" width="6" height="2.5" rx="1.2" fill="#6e6e6e"/><rect x="704.6" y="836.5" width="6" height="2.5" rx="1.2" fill="#6e6e6e"/><rect x="790" y="836.5" width="6" height="2.5" rx="1.2" fill="#6e6e6e"/><rect x="833.8" y="836.5" width="6" height="2.5" rx="1.2" fill="#6e6e6e"/><rect x="876" y="836.5" width="6" height="2.5" rx="1.2" fill="#6e6e6e"/><rect x="919" y="836.5" width="6" height="2.5" rx="1.2" fill="#6e6e6e"/><rect x="962" y="836.5" width="6" height="2.5" rx="1.2" fill="#6e6e6e"/><path d="M1336.5 823.5l6.3-6.3l6.3 6.3" fill="none" stroke="#333" stroke-width="1.3"/><rect x="1363" y="812.5" width="7" height="11" rx="3.5" fill="#111"/><path d="M1361 820a5.2 5.2 0 0 0 11 0M1366.5 825.5v2.5M1364 828.5h5" fill="none" stroke="#555" stroke-width="1.1"/><rect x="1384" y="816" width="14.5" height="9" rx="1.2" fill="#222" stroke="#555" stroke-width="1"/><rect x="1382" y="815" width="4" height="4" fill="#fff" stroke="#444" stroke-width="0.8"/><path d="M1409 826.5a10 10 0 0 1 11-11M1412 826.5a7 7 0 0 1 8-8M1415 826.5a4 4 0 0 1 5-5" fill="none" stroke="#444" stroke-width="1.2"/><circle cx="1418.5" cy="825.5" r="1" fill="#222"/><path d="M1429.5 817.5h3l4-3.5v13l-4-3.5h-3z" fill="none" stroke="#333" stroke-width="1.1"/><path d="M1439 818a4 4 0 0 1 0 6M1441.5 815.5a7.5 7.5 0 0 1 0 11M1444 813.5a10.5 10.5 0 0 1 0 15" fill="none" stroke="#333" stroke-width="1.1"/><path d="M1460 812h16v12h-11l-3.5 3v-3h-1.5z" fill="#0b0b0b"/><path d="M1463 815h10M1463 818h10M1463 821h6" stroke="#666" stroke-width="1"/><circle cx="1475.5" cy="828.5" r="6.8" fill="#d4d7da" stroke="#9ba0a5" stroke-width="0.8"/><path d="M1474 825.5l2-1.5v8" fill="none" stroke="#111" stroke-width="1.5"/><rect x="1495.5" y="798" width="1" height="46" fill="#c9d3dd"/></svg>
</body></html>
